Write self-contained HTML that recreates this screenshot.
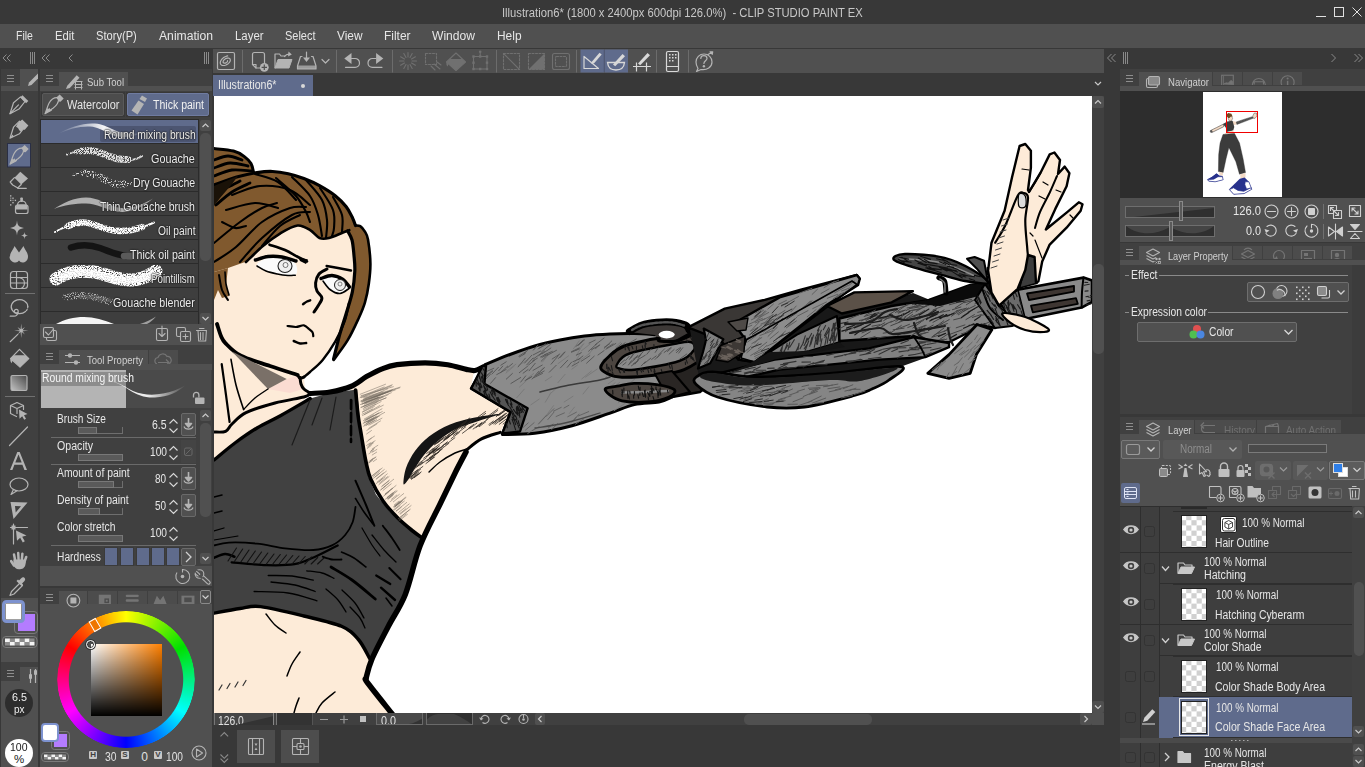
<!DOCTYPE html>
<html lang="en"><head><meta charset="utf-8"><title>CLIP STUDIO PAINT EX</title>
<style>
html,body{margin:0;padding:0;background:#383838;overflow:hidden}
body{width:1365px;height:767px;position:relative;font-family:"Liberation Sans",sans-serif;}
div,span,svg{position:absolute;box-sizing:border-box}
span{white-space:nowrap;line-height:1;}
svg{overflow:visible}
</style></head>
<body>
<div id="app" style="left:0;top:0;width:1365px;height:767px;overflow:hidden">
<div class="titlebar" style="left:0px;top:0px;width:1365px;height:24px;background:#383838;"><span style="left:502.0px;top:6.8px;font-size:12px;color:#c8c8c8;transform:scaleX(0.936);transform-origin:0 0;white-space:pre;">Illustration6* (1800 x 2400px 600dpi 126.0%)  - CLIP STUDIO PAINT EX</span>
<svg style="left:1300px;top:0px;" width="65" height="24" viewBox="0 0 65 24"><path d="M16 16.500h10" stroke="#e0e0e0" stroke-width="1" fill="none"/><rect x="34.500" y="7.500" width="9" height="9" stroke="#e0e0e0" fill="none"/><path d="M52.500 7.500l9 9M61.500 7.500l-9 9" stroke="#e0e0e0" stroke-width="1" fill="none"/></svg>
</div>
<div class="menubar" style="left:0px;top:24px;width:1365px;height:24px;background:#505050;"><span style="left:15.6px;top:5.8px;font-size:12px;color:#e6e6e6;transform:scaleX(0.874);transform-origin:0 0;">File</span>
<span style="left:55.4px;top:5.8px;font-size:12px;color:#e6e6e6;transform:scaleX(0.938);transform-origin:0 0;">Edit</span>
<span style="left:96.2px;top:5.8px;font-size:12px;color:#e6e6e6;transform:scaleX(0.927);transform-origin:0 0;">Story(P)</span>
<span style="left:159.0px;top:5.8px;font-size:12px;color:#e6e6e6;transform:scaleX(1.014);transform-origin:0 0;">Animation</span>
<span style="left:235.0px;top:5.8px;font-size:12px;color:#e6e6e6;transform:scaleX(0.950);transform-origin:0 0;">Layer</span>
<span style="left:285.0px;top:5.8px;font-size:12px;color:#e6e6e6;transform:scaleX(0.915);transform-origin:0 0;">Select</span>
<span style="left:337.0px;top:5.8px;font-size:12px;color:#e6e6e6;transform:scaleX(0.989);transform-origin:0 0;">View</span>
<span style="left:384.0px;top:5.8px;font-size:12px;color:#e6e6e6;transform:scaleX(0.994);transform-origin:0 0;">Filter</span>
<span style="left:432.0px;top:5.8px;font-size:12px;color:#e6e6e6;transform:scaleX(1.008);transform-origin:0 0;">Window</span>
<span style="left:497.0px;top:5.8px;font-size:12px;color:#e6e6e6;transform:scaleX(0.993);transform-origin:0 0;">Help</span>
</div>
<svg style="left:0px;top:48px;" width="213" height="21" viewBox="0 0 213 21"><path d="M6.500 6.500l-3.500 3.500l3.500 3.500M10.500 6.500l-3.500 3.500l3.500 3.500M30.500 4v12M32.500 4v12M34.500 4v12" stroke="#8a8a8a" stroke-width="1" fill="none"/><path d="M45.500 6.500l-3.500 3.500l3.500 3.500M49.500 6.500l-3.500 3.500l3.500 3.500M72.500 6.500l-3.500 3.500l3.500 3.500M204.500 4v12M206.500 4v12M208.500 4v12" stroke="#8a8a8a" stroke-width="1" fill="none"/></svg>
<div class="toolpalette" style="left:1px;top:69px;width:37px;height:529px;background:#404040;"></div>
<div style="left:1px;top:69px;width:37px;height:22px;background:#505050;"></div>
<div style="left:1px;top:69px;width:19px;height:17px;background:#404040;"><svg style="left:6px;top:6px;" width="8" height="8" viewBox="0 0 8 8"><path d="M0 .5h7M0 3.500h7M0 6.500h7" stroke="#8e8e8e" stroke-width="1" fill="none"/></svg>
</div>
<svg style="left:20px;top:69px;overflow:hidden" width="18" height="18" viewBox="0 0 18 18"><path d="M8 17l1-3.500l9.500-9.500l2.500 2.500l-9.500 9.500z" fill="#b4b4b4"/></svg>
<svg style="left:0;top:0" width="40" height="600" viewBox="0 0 40 600"><g transform="translate(0,0)"><path d="M10 113.7l3.5-11l7-5.8l4.5 4.6l-5.6 7.2z" stroke="#b4b4b4" stroke-width="1.2" fill="none" stroke-linejoin="round" stroke-linecap="round"/><path d="M10 113.7l8.5-8.8" stroke="#b4b4b4" stroke-width="1.2" fill="none" stroke-linejoin="round" stroke-linecap="round" stroke-width="1.6"/><path d="M20.3 97.2l2.2-2l5.8 5.8l-2.2 2.2z" fill="#b4b4b4"/><path d="M10 113.7l2-2.6l1 1.4z" fill="#b4b4b4"/></g><g transform="translate(0,24.5)"><path d="M10 113.7l3.5-11l6-6l5.5 5.4l-5.6 7.2z" stroke="#b4b4b4" stroke-width="1.2" fill="none" stroke-linejoin="round" stroke-linecap="round"/><path d="M18 98.5l4.2-3.6l6.2 6.2l-3.6 4.2l-2.6-.4l-.6 2.4l-2.2-1.2l-1.4-2.6l-2-1.2z" fill="#b4b4b4"/><path d="M10 113.7l2.4-3.6l1.4 2z" fill="#b4b4b4"/></g><rect x="7.5" y="143.500" width="23" height="23.500" fill="#5f6b8c" stroke="#2a2f45"/><g transform="translate(1,50.5)"><path d="M9 113.700c1.500-3 2.200-7 4-10.500c1.800-3.300 5-5.500 8-5.500c1.200 0 1.600 .600 1.600 1.600c0 3-2.400 6.600-5.600 9c-2.800 2-5.500 4.200-8 5.400z" stroke="#b4b4b4" stroke-width="1.2" fill="none" stroke-linejoin="round" stroke-linecap="round"/><path d="M9 113.700c.8-1.800 1.400-3.600 2-5.500l1.400 .9l.9-1.300l1.100 1.700l1.200-.6l.5 1.300c-2.300 1.700-4.800 2.600-7.100 3.500z" fill="#b4b4b4"/><path d="M20.300 97.600l3.400-3.200l4 4l-3.200 3.400l-1.600-.4z" fill="#b4b4b4"/></g><path d="M14.400 177.700l5.900-5.900l7.700 6.800l-6.800 5.900z" fill="#b4b4b4"/><path d="M14.400 177.700l-4.200 4.300l2.500 3l5.100 2.900l3.400-3.400" stroke="#b4b4b4" stroke-width="1.2" fill="none" stroke-linejoin="round" stroke-linecap="round"/><path d="M17.800 188.300h8.500" stroke="#b4b4b4" stroke-width="1.2" fill="none" stroke-linejoin="round" stroke-linecap="round"/><g><rect x="15.500" y="205" width="12.500" height="8.500" rx="2" stroke="#b4b4b4" stroke-width="1.2" fill="none" stroke-linejoin="round" stroke-linecap="round"/><path d="M16 209.500v-3a2 2 0 0 1 2-2h7.500a2 2 0 0 1 2 2v3z" fill="#b4b4b4"/><path d="M17.500 204.500c.500-2.500 2-3.500 4.300-3.500c2.300 0 3.800 1 4.300 3.500" stroke="#b4b4b4" stroke-width="1.2" fill="none" stroke-linejoin="round" stroke-linecap="round"/><rect x="20.300" y="197.500" width="2.600" height="4.500" rx=".800" fill="#b4b4b4"/><g fill="#b4b4b4"><rect x="10" y="195.200" width="1.400" height="1.400"/><rect x="12.300" y="197.500" width="1.400" height="1.400"/><rect x="10" y="199.700" width="1.400" height="1.400"/><rect x="14.700" y="199.700" width="1.400" height="1.400"/><rect x="12.300" y="202" width="1.400" height="1.400"/><rect x="10" y="204.200" width="1.400" height="1.400"/><rect x="10" y="197.500" width="1.400" height="1.400" opacity=".6"/><rect x="12.300" y="199.700" width="1.400" height="1.400" opacity=".6"/></g></g><path d="M17 220.500c.6 5 1.500 6.500 7 7.500c-5.500 1-6.400 2.500-7 7.500c-.6-5-1.500-6.500-7-7.500c5.500-1 6.400-2.500 7-7.500z" fill="#b4b4b4"/><path d="M24.500 232c.3 2.400 .8 3.200 3.500 3.600c-2.700 .4-3.200 1.200-3.500 3.600c-.3-2.400-.8-3.200-3.500-3.600c2.700-.4 3.200-1.200 3.500-3.600z" fill="#b4b4b4"/><path d="M10 256.500c0-4 3-6 4.500-10.500l4.500 6.500l4.500-6.500c1.500 4.500 4.500 6.500 4.500 10.500c0 4-3 6-5.500 6c-1.500 0-2.600-.8-3.500-2c-.9 1.200-2 2-3.500 2c-2.500 0-6-2-6-6z" fill="#b4b4b4"/><rect x="10.500" y="271.500" width="17" height="17" rx="3" stroke="#b4b4b4" stroke-width="1.2" fill="none" stroke-linejoin="round" stroke-linecap="round"/><path d="M10.500 277.500h17M10.500 283h17M16.500 271.500v17M16.500 277.500c6 0 8 2 8 5.500c0 3-2 5.500-4 5.500" stroke="#b4b4b4" stroke-width="1.2" fill="none" stroke-linejoin="round" stroke-linecap="round"/><path d="M5 293.500h30" stroke="#707070" stroke-width="1"/><path d="M25.500 311.500a8.300 7 0 1 1 2.300 -5" stroke="#b4b4b4" stroke-width="1.2" fill="none" stroke-linejoin="round" stroke-linecap="round"/><path d="M27.800 306.500a8.300 7 0 0 1 -2.300 5" stroke="#b4b4b4" stroke-width="1.2" fill="none" stroke-linejoin="round" stroke-linecap="round" stroke-dasharray="1.500 1.500"/><circle cx="16.300" cy="311.300" r="1.900" stroke="#b4b4b4" stroke-width="1.2" fill="none" stroke-linejoin="round" stroke-linecap="round"/><path d="M18 312.300c-.500 2.500 -2 3.900 -4 3.900h-3.800" stroke="#b4b4b4" stroke-width="1.2" fill="none" stroke-linejoin="round" stroke-linecap="round"/><path d="M21.20 323.50L21.77 329.31L24.88 327.02L22.59 330.13L28.40 330.70L22.59 331.27L24.88 334.38L21.77 332.09L21.20 337.90L20.63 332.09L17.52 334.38L19.81 331.27L14.00 330.70L19.81 330.13L17.52 327.02L20.63 329.31z" fill="#b4b4b4"/><path d="M10.200 341.700l7.600-7.300" stroke="#b4b4b4" stroke-width="1.2" fill="none" stroke-linejoin="round" stroke-linecap="round" stroke-width="1.500"/><path d="M10.500 358.600l9-9.300l9.300 9.300l-8.800 8.500z" stroke="#b4b4b4" stroke-width="1.2" fill="none" stroke-linejoin="round" stroke-linecap="round"/><path d="M13.700 355.300h11.800l3.300 3.300l-8.800 8.500l-9.500-8.500z" fill="#b4b4b4"/><path d="M10.500 358.600c-.500 2 0 3.500 1.300 4.600c.300-1.600 .800-3 1.900-4z" fill="#b4b4b4"/><defs><linearGradient id="gt" x1="1" y1="0" x2="0" y2="1"><stop offset="0" stop-color="#484848"/><stop offset="1" stop-color="#c4c4c4"/></linearGradient></defs><rect x="11" y="375.500" width="16" height="15" rx="1.500" fill="url(#gt)" stroke="#b4b4b4" stroke-width="1.200"/><path d="M5 396.500h30" stroke="#707070" stroke-width="1"/><path d="M10.500 405.500l6.500-3l6.500 3v4M10.500 405.500v8l6 3M10.500 405.500l6.500 3l6.500-3M17 408.500v5" stroke="#b4b4b4" stroke-width="1.2" fill="none" stroke-linejoin="round" stroke-linecap="round"/><path d="M19 409.500l8.500 4.500l-3.500 1.200l2 3.600l-1.800 1l-2-3.600l-2.700 2.500z" fill="#b4b4b4"/><path d="M9.500 445.500l18-18.500" stroke="#b4b4b4" stroke-width="1.2" fill="none" stroke-linejoin="round" stroke-linecap="round" stroke-width="1.400"/><path d="M10 470l7.300-18h2.400l7.300 18h-2.600l-2-5.200h-8l-2 5.200zM15.300 462.600h6.400l-3.200-8.200z" fill="#b4b4b4"/><ellipse cx="19" cy="484.500" rx="9" ry="6.500" stroke="#b4b4b4" stroke-width="1.2" fill="none" stroke-linejoin="round" stroke-linecap="round" stroke-width="1.400"/><path d="M13.500 489.500l-2.500 5l6-3.700" stroke="#b4b4b4" stroke-width="1.2" fill="none" stroke-linejoin="round" stroke-linecap="round" stroke-width="1.400" fill="#404040"/><path d="M10.500 502l17 .5l-14 16.500zM15 506l6 .3l-5.300 6.200z" fill="#b4b4b4" fill-rule="evenodd"/><path d="M10.500 527.500h17M13.500 524v20" stroke="#b4b4b4" stroke-width="1.2" fill="none" stroke-linejoin="round" stroke-linecap="round" stroke-width="1.500"/><path d="M16 530.500l10.500 5l-4.300 1.200l2.600 4.600l-2 1.100l-2.600-4.600l-3.200 3z" fill="#b4b4b4"/><rect x="11.500" y="525.500" width="4" height="4" fill="#b4b4b4"/><path d="M15.300 561l-1.300-6.500M18.600 560l-.400-7M21.800 560l.600-6.300M24.400 562l1.800-5" stroke="#b4b4b4" fill="none" stroke-linecap="round" stroke-width="2.500"/><path d="M14 565.500l-2.800-4.300" stroke="#b4b4b4" fill="none" stroke-linecap="round" stroke-width="2.600"/><path d="M13.400 559.500h12l.300 3c0 4-2.300 6.700-5.700 6.700h-1.200c-2.800 0-4.300-1.600-5.400-4.200z" fill="#b4b4b4"/><path d="M10 595.500l1.500-4l8.500-8.500l2.500 2.500l-8.500 8.500z" stroke="#b4b4b4" stroke-width="1.2" fill="none" stroke-linejoin="round" stroke-linecap="round"/><path d="M19 580.500l2.500-2.500c2-2 5 1 3 3l-2.500 2.500l1 1l-1.500 1.500l-5-5l1.500-1.500z" fill="#b4b4b4"/></svg>
<div style="left:1px;top:598px;width:37px;height:64px;background:#505050;"></div>
<div style="left:14px;top:610.5px;width:23.5px;height:23px;border:1px solid #7a7a7a;border-radius:4px;"></div>
<div style="left:17.5px;top:613.5px;width:17px;height:17px;background:#b47cff;"></div>
<div style="left:1.5px;top:599.5px;width:23.5px;height:23.5px;background:#ffffff;border:3px solid #7d92cf;border-radius:4.500px;box-shadow:inset 0 0 0 .600px #444;"></div>
<svg style="left:2px;top:635.5px;" width="35.5" height="12" viewBox="0 0 35.5 12"><rect x="0.5" y="0.5" width="34.5" height="11" rx="3.5" fill="none" stroke="#7a7a7a"/><rect x="3.00" y="2.50" width="4.92" height="3.50" fill="#f4f4f4"/><rect x="3.00" y="6.00" width="4.92" height="3.50" fill="#8c8c8c"/><rect x="7.92" y="2.50" width="4.92" height="3.50" fill="#8c8c8c"/><rect x="7.92" y="6.00" width="4.92" height="3.50" fill="#f4f4f4"/><rect x="12.83" y="2.50" width="4.92" height="3.50" fill="#f4f4f4"/><rect x="12.83" y="6.00" width="4.92" height="3.50" fill="#8c8c8c"/><rect x="17.75" y="2.50" width="4.92" height="3.50" fill="#8c8c8c"/><rect x="17.75" y="6.00" width="4.92" height="3.50" fill="#f4f4f4"/><rect x="22.67" y="2.50" width="4.92" height="3.50" fill="#f4f4f4"/><rect x="22.67" y="6.00" width="4.92" height="3.50" fill="#8c8c8c"/><rect x="27.58" y="2.50" width="4.92" height="3.50" fill="#8c8c8c"/><rect x="27.58" y="6.00" width="4.92" height="3.50" fill="#f4f4f4"/></svg>
<div style="left:1px;top:662px;width:37px;height:105px;background:#505050;"></div>
<div style="left:1px;top:662px;width:37px;height:5px;background:#404040;"></div>
<div style="left:1px;top:662px;width:19px;height:19px;background:#404040;"><svg style="left:6px;top:8px;" width="8" height="8" viewBox="0 0 8 8"><path d="M0 .5h7M0 3.500h7M0 6.500h7" stroke="#8e8e8e" stroke-width="1" fill="none"/></svg>
</div>
<svg style="left:20px;top:666px;overflow:hidden" width="18" height="20" viewBox="0 0 18 20"><path d="M10.500 3v14M15.500 3v14" stroke="#b4b4b4" stroke-width="1.200"/><rect x="9" y="8" width="3" height="5" rx="1" fill="#b4b4b4"/><rect x="14" y="4" width="3" height="5" rx="1" fill="#b4b4b4"/></svg>
<div style="left:4.8px;top:688.8px;width:28.4px;height:28.4px;background:#2d2d2d;border-radius:50%;"></div>
<span style="left:11.5px;top:691.7px;font-size:11.5px;color:#f0f0f0;transform:scaleX(0.938);transform-origin:0 0;">6.5</span>
<span style="left:13.8px;top:704.0px;font-size:11.5px;color:#f0f0f0;transform:scaleX(0.865);transform-origin:0 0;">px</span>
<div style="left:4.8px;top:738.8px;width:28.4px;height:28.4px;background:#ffffff;border-radius:50%;"></div>
<span style="left:10.2px;top:741.7px;font-size:11.5px;color:#202020;transform:scaleX(0.912);transform-origin:0 0;">100</span>
<span style="left:13.9px;top:754.3px;font-size:11.5px;color:#202020;">%</span>
<div class="subtool" style="left:40px;top:69px;width:172px;height:278px;background:#404040;"></div>
<div style="left:40px;top:69px;width:172px;height:22px;background:#404040;"></div>
<div style="left:40px;top:69px;width:19px;height:17px;background:#404040;"><svg style="left:6px;top:6px;" width="8" height="8" viewBox="0 0 8 8"><path d="M0 .5h7M0 3.500h7M0 6.500h7" stroke="#8e8e8e" stroke-width="1" fill="none"/></svg>
</div>
<div style="left:59px;top:72px;width:69px;height:19px;background:#505050;"></div>
<div style="left:40px;top:86px;width:172px;height:5px;background:#505050;"></div>
<svg style="left:64px;top:72px;overflow:hidden" width="22" height="19" viewBox="0 0 22 19"><path d="M2 17l1.200-3.200l9.500-10.500l2.800 2.500l-9.700 10.300z" fill="#b4b4b4"/><path d="M10.500 9.500h8M10.500 12.500h8M10.500 15.500h8M11.500 9.500v8M17.500 9.500v8" stroke="#b4b4b4" stroke-width="1" fill="none"/></svg>
<span style="left:87.0px;top:77.3px;font-size:11.5px;color:#d0d0d0;transform:scaleX(0.831);transform-origin:0 0;">Sub Tool</span>
<div style="left:41px;top:92px;width:84px;height:25px;background:#383838;"></div>
<div style="left:126px;top:92px;width:84px;height:25px;background:#383838;"></div>
<div style="left:42px;top:93px;width:82px;height:23px;background:#4c4c4c;border:1px solid #5a5a5a;border-radius:2px;"></div>
<div style="left:127px;top:93px;width:82px;height:23px;background:#5f6b8c;border:1px solid #6f7ba0;border-radius:2px;"></div>
<svg style="left:36px;top:-0.5px;" width="40" height="120" viewBox="0 0 40 120"><path d="M9 113.700c1.500-3 2.200-7 4-10.500c1.800-3.300 5-5.500 8-5.500c1.200 0 1.600 .600 1.600 1.600c0 3-2.400 6.600-5.600 9c-2.800 2-5.500 4.200-8 5.400z" stroke="#b4b4b4" stroke-width="1.2" fill="none" stroke-linejoin="round" stroke-linecap="round"/><path d="M9 113.700c.8-1.800 1.400-3.600 2-5.500l1.400 .9l.9-1.300l1.100 1.700l1.200-.6l.5 1.300c-2.300 1.700-4.800 2.600-7.100 3.500z" fill="#b4b4b4"/><path d="M20.300 97.600l3.400-3.200l4 4l-3.200 3.400l-1.600-.4z" fill="#b4b4b4"/></svg>
<span style="left:66.8px;top:99.3px;font-size:12px;color:#e4e4e4;transform:scaleX(0.910);transform-origin:0 0;">Watercolor</span>
<svg style="left:127px;top:93px;" width="30" height="23" viewBox="0 0 30 23"><path d="M4.500 17.500l7-10l5.500 3.500l-6.500 10.500z" fill="#b4b4b4"/><path d="M12.500 6l2.500-3.500l5 3l-2 3.500z" fill="#b4b4b4"/></svg>
<span style="left:153.0px;top:99.3px;font-size:12px;color:#f0f0f0;transform:scaleX(0.879);transform-origin:0 0;">Thick paint</span>
<div style="left:40px;top:119px;width:159px;height:205px;background:#2b2b2b;"></div>
<div style="left:41px;top:120px;width:157px;height:23px;background:#5f6b8c;"></div>
<div style="left:41px;top:144px;width:157px;height:23px;background:#3e3e3e;"></div>
<div style="left:41px;top:168px;width:157px;height:23px;background:#3e3e3e;"></div>
<div style="left:41px;top:192px;width:157px;height:23px;background:#3e3e3e;"></div>
<div style="left:41px;top:216px;width:157px;height:23px;background:#3e3e3e;"></div>
<div style="left:41px;top:240px;width:157px;height:23px;background:#3e3e3e;"></div>
<div style="left:41px;top:264px;width:157px;height:23px;background:#3e3e3e;"></div>
<div style="left:41px;top:288px;width:157px;height:23px;background:#3e3e3e;"></div>
<div style="left:41px;top:312px;width:157px;height:11.5px;background:#3e3e3e;"></div>
<div style="left:100px;top:126px;width:96px;height:16px;background:rgba(70,78,104,.75);border-radius:2px;"></div>
<svg style="left:0;top:0;overflow:hidden" width="215" height="323.5" viewBox="0 0 215 323.5"><defs><filter id="grain" x="-0.1" y="-0.6" width="1.2" height="2.2"><feTurbulence type="fractalNoise" baseFrequency="0.95" numOctaves="2" seed="4"/><feColorMatrix values="0 0 0 0 1  0 0 0 0 1  0 0 0 0 1  0 0 0 6 -2.2"/><feComposite in2="SourceGraphic" operator="in"/></filter><filter id="grain2" x="-0.1" y="-0.6" width="1.2" height="2.2"><feTurbulence type="fractalNoise" baseFrequency="0.9" numOctaves="2" seed="9"/><feColorMatrix values="0 0 0 0 1  0 0 0 0 1  0 0 0 0 1  0 0 0 7 -3.6"/><feComposite in2="SourceGraphic" operator="in"/></filter><filter id="grain3" x="-0.1" y="-0.6" width="1.2" height="2.2"><feTurbulence type="fractalNoise" baseFrequency="0.8" numOctaves="2" seed="2"/><feColorMatrix values="0 0 0 0 1  0 0 0 0 1  0 0 0 0 1  0 0 0 5 -1.6"/><feComposite in2="SourceGraphic" operator="in"/></filter><filter id="soft"><feGaussianBlur stdDeviation="0.7"/></filter><filter id="soft2"><feGaussianBlur stdDeviation="1.6"/></filter><linearGradient id="rm" x1="0" x2="1"><stop offset="0" stop-color="#fff" stop-opacity="0"/><stop offset=".55" stop-color="#fff" stop-opacity=".95"/><stop offset=".8" stop-color="#fff" stop-opacity=".5"/><stop offset="1" stop-color="#fff" stop-opacity="0"/></linearGradient></defs><path d="M58 134c10-5 22-8 32-7.500c8 .500 13 4 20 7.500c8 4 20 4 32 -1c-12 2-22 0-30-4c-7-3.500-12-5.500-20-5.500c-11 0-24 4.500-34 10.500z" fill="url(#rm)" filter="url(#soft)"/><g filter="url(#grain)" opacity=".85"><path d="M67 154.500C78 150 88 149 98 152S118 160 128 160S138 158 142 156" stroke="#fff" stroke-width="2" fill="none" stroke-linecap="round" /><path d="M82 151C90 149.500 98 151.500 106 155S120 160 128 159.500" stroke="#fff" stroke-width="7" fill="none" stroke-linecap="round" /><path d="M76 152C84 150 92 150 100 153" stroke="#fff" stroke-width="4.5" fill="none" stroke-linecap="round" /></g><g filter="url(#grain2)" opacity=".8"><path d="M73 175C80 172 88 171.500 96 174S112 183 120 184.500S128 184 131 183" stroke="#fff" stroke-width="2.5" fill="none" stroke-linecap="round" /><path d="M84 173C92 173 100 177 108 181S118 184.500 124 184" stroke="#fff" stroke-width="7" fill="none" stroke-linecap="round" /></g><path d="M54 209c9-6 20-11.500 32-11.500c12 0 20 7 32 10c10 2.500 22-1.500 35-9c-12 10-24 15-36 13c-12-2-20-8-31-8c-11 0-22 1.500-32 5.500z" fill="#b8b8b8" opacity=".92"/><g filter="url(#grain3)"><path d="M55 232C64 227 74 222.500 84 222.500S108 232 121 231S146 226.500 154 222.500" stroke="#fff" stroke-width="2" fill="none" stroke-linecap="round" /><path d="M68 226C76 222.500 84 221.500 92 224S110 231.500 122 231S136 229 142 227" stroke="#fff" stroke-width="6.5" fill="none" stroke-linecap="round" /></g><path d="M72 225C80 222.500 88 222.500 96 226S112 231 124 230" stroke="#fff" stroke-width="3" fill="none" stroke-linecap="round" opacity=".55"/><path d="M71 247.500C80 244.500 90 244.500 100 248S116 255 126 256" stroke="#141414" stroke-width="6.5" fill="none" stroke-linecap="round" stroke-linecap="butt"/><path d="M124 256L131 256.200" stroke="#5a5a5a" stroke-width="6.5" fill="none" stroke-linecap="round" stroke-linecap="butt"/><g filter="url(#grain3)"><path d="M56 279C66 272 80 270 94 272S118 281 132 280S150 274 156 271" stroke="#fff" stroke-width="13" fill="none" stroke-linecap="round" /><path d="M54 281C60 277 66 275 72 275" stroke="#fff" stroke-width="6" fill="none" stroke-linecap="round" /></g><path d="M62 277C72 272 84 271 96 274S120 282 134 280S148 276 152 274" stroke="#fff" stroke-width="7" fill="none" stroke-linecap="round" opacity=".8"/><g filter="url(#grain2)" opacity=".6"><path d="M66 297C78 294.500 88 295 98 298S106 300.500 110 301.500" stroke="#aaa" stroke-width="7" fill="none" stroke-linecap="round" /></g><path d="M80 296C90 295.500 100 298 109 301" stroke="#8a8a8a" stroke-width="5" fill="none" stroke-linecap="round" opacity=".35" filter="url(#soft)"/><path d="M56 324c8-4.500 18-7 28-7c10 0 20 3 30 7z" fill="#fff" opacity=".95"/><path d="M140 324c6-2 11-4.500 16-7.500c-3 3.500-6 6-9 7.500z" fill="#aaa" opacity=".9"/></svg>
<span style="left:103.5px;top:129.1px;font-size:12px;color:#ececec;transform:scaleX(0.859);transform-origin:0 0;text-shadow:0 0 2px #222,0 0 2px #222,0 0 1px #222;">Round mixing brush</span>
<span style="left:151.4px;top:153.1px;font-size:12px;color:#ececec;transform:scaleX(0.899);transform-origin:0 0;text-shadow:0 0 2px #222,0 0 2px #222,0 0 1px #222;">Gouache</span>
<span style="left:133.0px;top:177.1px;font-size:12px;color:#ececec;transform:scaleX(0.880);transform-origin:0 0;text-shadow:0 0 2px #222,0 0 2px #222,0 0 1px #222;">Dry Gouache</span>
<span style="left:100.3px;top:201.1px;font-size:12px;color:#ececec;transform:scaleX(0.873);transform-origin:0 0;text-shadow:0 0 2px #222,0 0 2px #222,0 0 1px #222;">Thin Gouache brush</span>
<span style="left:157.7px;top:225.1px;font-size:12px;color:#ececec;transform:scaleX(0.852);transform-origin:0 0;text-shadow:0 0 2px #222,0 0 2px #222,0 0 1px #222;">Oil paint</span>
<span style="left:130.3px;top:249.1px;font-size:12px;color:#ececec;transform:scaleX(0.885);transform-origin:0 0;text-shadow:0 0 2px #222,0 0 2px #222,0 0 1px #222;">Thick oil paint</span>
<span style="left:151.4px;top:273.1px;font-size:12px;color:#ececec;transform:scaleX(0.811);transform-origin:0 0;text-shadow:0 0 2px #222,0 0 2px #222,0 0 1px #222;">Pointillism</span>
<span style="left:113.4px;top:297.1px;font-size:12px;color:#ececec;transform:scaleX(0.889);transform-origin:0 0;text-shadow:0 0 2px #222,0 0 2px #222,0 0 1px #222;">Gouache blender</span>
<div style="left:110px;top:318px;width:88px;height:5.5px;overflow:hidden;"><span style="left:13.0px;top:6.8px;font-size:12px;color:#ececec;transform:scaleX(0.870);transform-origin:0 0;text-shadow:0 0 2px #222,0 0 2px #222,0 0 1px #222;">Paint and apply</span>
</div>
<div style="left:200px;top:120px;width:11px;height:11px;background:#505050;border-radius:2px;"><svg style="left:0px;top:0px;" width="11" height="11" viewBox="0 0 11 11"><path d="M2.5 7l3-3l3 3" stroke="#c8c8c8" stroke-width="1.2" fill="none"/></svg>
</div>
<div style="left:200px;top:133px;width:11px;height:128px;background:#505050;border-radius:5px;"></div>
<div style="left:200px;top:312.5px;width:11px;height:11px;background:#505050;border-radius:2px;"><svg style="left:0px;top:0px;" width="11" height="11" viewBox="0 0 11 11"><path d="M2.5 4l3 3l3-3" stroke="#c8c8c8" stroke-width="1.2" fill="none"/></svg>
</div>
<div style="left:40px;top:324px;width:172px;height:21px;background:#505050;"></div>
<svg style="left:40px;top:324px;" width="172" height="21" viewBox="0 0 172 21"><rect x="6.500" y="6.500" width="10" height="10" rx="1.500" stroke="#b4b4b4" stroke-width="1.1" fill="none" stroke-linejoin="round" stroke-linecap="round"/><rect x="3.500" y="3.500" width="10" height="10" rx="1.500" fill="#505050" stroke="#b4b4b4" stroke-width="1.1"  stroke-linejoin="round" stroke-linecap="round"/><path d="M5.500 8l3 3l5-6" stroke="#b4b4b4" stroke-width="1.1" fill="none" stroke-linejoin="round" stroke-linecap="round"/><rect x="116.500" y="4.500" width="11" height="12" rx="1.500" stroke="#b4b4b4" stroke-width="1.1" fill="none" stroke-linejoin="round" stroke-linecap="round"/><path d="M122 2v10M119 9.500l3 3l3-3" stroke="#b4b4b4" stroke-width="1.1" fill="none" stroke-linejoin="round" stroke-linecap="round"/><rect x="136.500" y="3.500" width="9" height="9" rx="1.500" stroke="#b4b4b4" stroke-width="1.1" fill="none" stroke-linejoin="round" stroke-linecap="round"/><rect x="140.500" y="7.500" width="10" height="10" rx="1.500" fill="#505050" stroke="#b4b4b4" stroke-width="1.1"  stroke-linejoin="round" stroke-linecap="round"/><path d="M145.500 10v5M143 12.500h5" stroke="#b4b4b4" stroke-width="1.1" fill="none" stroke-linejoin="round" stroke-linecap="round"/><path d="M156.500 6.500h10M158 6.500l.700 10.500h7l.700-10.500M159.500 4.500h4.500M160.500 8.500v7M163 8.500v7" stroke="#b4b4b4" stroke-width="1.1" fill="none" stroke-linejoin="round" stroke-linecap="round"/></svg>
<div class="toolproperty" style="left:40px;top:347px;width:172px;height:239px;background:#404040;"></div>
<div style="left:40px;top:347px;width:172px;height:23px;background:#404040;"></div>
<div style="left:40px;top:347px;width:19px;height:17px;background:#404040;"><svg style="left:6px;top:6px;" width="8" height="8" viewBox="0 0 8 8"><path d="M0 .5h7M0 3.500h7M0 6.500h7" stroke="#8e8e8e" stroke-width="1" fill="none"/></svg>
</div>
<div style="left:59px;top:350px;width:89px;height:20px;background:#505050;"></div>
<div style="left:149px;top:350px;width:29px;height:14px;background:#4c4c4c;overflow:hidden;"><svg style="left:0px;top:0px;" width="29" height="14" viewBox="0 0 29 14"><path d="M8 14c-3-1-3-6 1-6.500c1-4 7-5 9-1c4-.500 6 5 2 7.500" stroke="#747474" stroke-width="1.200" fill="none"/><path d="M9 12.500h11M17 9.500l3 3l-3 3" stroke="#747474" stroke-width="1.200" fill="none"/></svg>
</div>
<div style="left:40px;top:364px;width:172px;height:6px;background:#505050;"></div>
<svg style="left:64px;top:352px;" width="20" height="14" viewBox="0 0 20 14"><path d="M1 3.500h15M1 10.500h15" stroke="#b4b4b4" stroke-width="1.200"/><circle cx="6" cy="3.500" r="2.200" fill="#b4b4b4"/><circle cx="12" cy="10.500" r="2.200" fill="#b4b4b4"/></svg>
<span style="left:87.0px;top:355.3px;font-size:11.5px;color:#d0d0d0;transform:scaleX(0.827);transform-origin:0 0;">Tool Property</span>
<div style="left:41px;top:370px;width:170px;height:38px;background:#4a4a4a;"></div>
<div style="left:41px;top:370px;width:85px;height:38px;background:#b4b4b4;"></div>
<div style="left:41px;top:372px;width:85px;height:14px;background:#8c8c8c;"></div>
<svg style="left:41px;top:370px;" width="170" height="38" viewBox="0 0 170 38"><defs><linearGradient id="pv" x1="0" x2="1"><stop offset="0" stop-color="#fff" stop-opacity="0"/><stop offset=".15" stop-color="#fff" stop-opacity=".9"/><stop offset=".5" stop-color="#fff" stop-opacity=".9"/><stop offset="1" stop-color="#fff" stop-opacity="0"/></linearGradient></defs><path d="M68 11c11 1 16 6.500 24 10c10 4 20 4.500 30 2.500c8-1.500 15-4 23-8.500c-8 7-18 12-31 12.500c-10 .500-18-2.500-25-7c-6-4-11-7.500-21-9.500z" fill="url(#pv)"/></svg>
<span style="left:42.0px;top:372.3px;font-size:12px;color:#f4f4f4;transform:scaleX(0.862);transform-origin:0 0;">Round mixing brush</span>
<svg style="left:192px;top:391px;" width="14" height="14" viewBox="0 0 14 14"><rect x="3" y="6.500" width="9.500" height="6.500" rx="1" fill="#b4b4b4"/><path d="M1.500 6.500v-2.500a2.700 2.700 0 0 1 5.400 0v2.500" stroke="#b4b4b4" stroke-width="1.300" fill="none"/></svg>
<span style="left:57.3px;top:412.6px;font-size:12px;color:#e6e6e6;transform:scaleX(0.844);transform-origin:0 0;">Brush Size</span>
<div style="left:78px;top:426.5px;width:45px;height:7.5px;border-bottom:1px solid #6e6e6e;border-right:1px solid #6e6e6e;"></div>
<div style="left:78px;top:426.5px;width:19px;height:7.5px;background:#5a5a5a;border:1px solid #787878;"></div>
<span style="left:151.9px;top:419.4px;font-size:12.5px;color:#e6e6e6;transform:scaleX(0.840);transform-origin:0 0;">6.5</span>
<svg style="left:167.5px;top:415.5px;" width="11" height="20" viewBox="0 0 11 20"><path d="M1.500 7.500l4-4l4 4M1.500 12.500l4 4l4-4" stroke="#d8d8d8" stroke-width="1.100" fill="none"/></svg>
<div style="left:181px;top:412.5px;width:15px;height:23px;background:#505050;border:1px solid #6a6a6a;border-radius:2px;"><svg style="left:-1px;top:-1px;" width="15" height="23" viewBox="0 0 15 23"><path d="M7.500 5v8.500M4.500 10.500l3 3.500l3-3.500z" stroke="#b4b4b4" stroke-width="1.600" fill="#b4b4b4" stroke-linejoin="round"/><path d="M3 13.500c1 3.500 8 3.500 9 0" stroke="#b4b4b4" stroke-width="1.100" fill="none"/></svg>
</div>
<span style="left:57.3px;top:439.6px;font-size:12px;color:#e6e6e6;transform:scaleX(0.885);transform-origin:0 0;">Opacity</span>
<div style="left:78px;top:453.5px;width:45px;height:7.5px;"></div>
<div style="left:78px;top:453.5px;width:45px;height:7.5px;background:#5a5a5a;border:1px solid #787878;"></div>
<span style="left:149.5px;top:446.4px;font-size:12.5px;color:#e6e6e6;transform:scaleX(0.815);transform-origin:0 0;">100</span>
<svg style="left:167.5px;top:442.5px;" width="11" height="20" viewBox="0 0 11 20"><path d="M1.500 7.500l4-4l4 4M1.500 12.500l4 4l4-4" stroke="#d8d8d8" stroke-width="1.100" fill="none"/></svg>
<div style="left:181px;top:439.5px;width:15px;height:23px;background:#444;"><svg style="left:0px;top:0px;" width="15" height="23" viewBox="0 0 15 23"><rect x="3.500" y="8" width="7.500" height="7.500" rx="1.500" stroke="#666" fill="none"/><path d="M4.500 14.500l5.500-5.500" stroke="#666"/></svg>
</div>
<span style="left:57.3px;top:466.6px;font-size:12px;color:#e6e6e6;transform:scaleX(0.864);transform-origin:0 0;">Amount of paint</span>
<div style="left:78px;top:480.5px;width:45px;height:7.5px;border-bottom:1px solid #6e6e6e;border-right:1px solid #6e6e6e;"></div>
<div style="left:78px;top:480.5px;width:36px;height:7.5px;background:#5a5a5a;border:1px solid #787878;"></div>
<span style="left:155.4px;top:473.4px;font-size:12.5px;color:#e6e6e6;transform:scaleX(0.798);transform-origin:0 0;">80</span>
<svg style="left:167.5px;top:469.5px;" width="11" height="20" viewBox="0 0 11 20"><path d="M1.500 7.500l4-4l4 4M1.500 12.500l4 4l4-4" stroke="#d8d8d8" stroke-width="1.100" fill="none"/></svg>
<div style="left:181px;top:466.5px;width:15px;height:23px;background:#505050;border:1px solid #6a6a6a;border-radius:2px;"><svg style="left:-1px;top:-1px;" width="15" height="23" viewBox="0 0 15 23"><path d="M7.500 5v8.500M4.500 10.500l3 3.500l3-3.500z" stroke="#b4b4b4" stroke-width="1.600" fill="#b4b4b4" stroke-linejoin="round"/><path d="M3 13.500c1 3.500 8 3.500 9 0" stroke="#b4b4b4" stroke-width="1.100" fill="none"/></svg>
</div>
<span style="left:57.3px;top:493.6px;font-size:12px;color:#e6e6e6;transform:scaleX(0.867);transform-origin:0 0;">Density of paint</span>
<div style="left:78px;top:507.5px;width:45px;height:7.5px;border-bottom:1px solid #6e6e6e;border-right:1px solid #6e6e6e;"></div>
<div style="left:78px;top:507.5px;width:22px;height:7.5px;background:#5a5a5a;border:1px solid #787878;"></div>
<span style="left:155.4px;top:500.4px;font-size:12.5px;color:#e6e6e6;transform:scaleX(0.798);transform-origin:0 0;">50</span>
<svg style="left:167.5px;top:496.5px;" width="11" height="20" viewBox="0 0 11 20"><path d="M1.500 7.500l4-4l4 4M1.500 12.500l4 4l4-4" stroke="#d8d8d8" stroke-width="1.100" fill="none"/></svg>
<div style="left:181px;top:493.5px;width:15px;height:23px;background:#505050;border:1px solid #6a6a6a;border-radius:2px;"><svg style="left:-1px;top:-1px;" width="15" height="23" viewBox="0 0 15 23"><path d="M7.500 5v8.500M4.500 10.500l3 3.500l3-3.500z" stroke="#b4b4b4" stroke-width="1.600" fill="#b4b4b4" stroke-linejoin="round"/><path d="M3 13.500c1 3.500 8 3.500 9 0" stroke="#b4b4b4" stroke-width="1.100" fill="none"/></svg>
</div>
<span style="left:57.3px;top:520.6px;font-size:12px;color:#e6e6e6;transform:scaleX(0.859);transform-origin:0 0;">Color stretch</span>
<div style="left:78px;top:534.5px;width:45px;height:7.5px;"></div>
<div style="left:78px;top:534.5px;width:45px;height:7.5px;background:#5a5a5a;border:1px solid #787878;"></div>
<span style="left:149.5px;top:527.4px;font-size:12.5px;color:#e6e6e6;transform:scaleX(0.815);transform-origin:0 0;">100</span>
<svg style="left:167.5px;top:523.5px;" width="11" height="20" viewBox="0 0 11 20"><path d="M1.500 7.500l4-4l4 4M1.500 12.500l4 4l4-4" stroke="#d8d8d8" stroke-width="1.100" fill="none"/></svg>
<div style="left:51px;top:437px;width:145px;height:1px;background:#6a6a6a;"></div>
<div style="left:51px;top:464px;width:145px;height:1px;background:#6a6a6a;"></div>
<div style="left:51px;top:545px;width:145px;height:1px;background:#6a6a6a;"></div>
<span style="left:57.3px;top:551.3px;font-size:12px;color:#e6e6e6;transform:scaleX(0.853);transform-origin:0 0;">Hardness</span>
<div style="left:104.0px;top:547px;width:14.2px;height:19px;background:#5f6b8c;border:1px solid #3a3a3a;"></div>
<div style="left:120.0px;top:547px;width:14.2px;height:19px;background:#5f6b8c;border:1px solid #3a3a3a;"></div>
<div style="left:135.9px;top:547px;width:14.2px;height:19px;background:#5f6b8c;border:1px solid #3a3a3a;"></div>
<div style="left:151.3px;top:547px;width:14.2px;height:19px;background:#5f6b8c;border:1px solid #3a3a3a;"></div>
<div style="left:166.3px;top:547px;width:14.2px;height:19px;background:#5f6b8c;border:1px solid #3a3a3a;"></div>
<div style="left:181px;top:547.5px;width:15px;height:18px;background:#505050;border:1px solid #6a6a6a;border-radius:2px;"><svg style="left:-1px;top:-1px;" width="15" height="18" viewBox="0 0 15 18"><path d="M5 4l5 5l-5 5" stroke="#d0d0d0" stroke-width="1.300" fill="none"/></svg>
</div>
<div style="left:200px;top:410px;width:11px;height:11px;background:#505050;border-radius:2px;"><svg style="left:0px;top:0px;" width="11" height="11" viewBox="0 0 11 11"><path d="M2.5 7l3-3l3 3" stroke="#c8c8c8" stroke-width="1.2" fill="none"/></svg>
</div>
<div style="left:200px;top:423px;width:11px;height:94px;background:#505050;border-radius:5px;"></div>
<div style="left:200px;top:553px;width:11px;height:11px;background:#505050;border-radius:2px;"><svg style="left:0px;top:0px;" width="11" height="11" viewBox="0 0 11 11"><path d="M2.5 4l3 3l3-3" stroke="#c8c8c8" stroke-width="1.2" fill="none"/></svg>
</div>
<div style="left:40px;top:566px;width:172px;height:20px;background:#505050;"></div>
<svg style="left:172px;top:567px;" width="40" height="19" viewBox="0 0 40 19"><path d="M5 5.500a7 7 0 1 0 5.500 -3v3" stroke="#b4b4b4" stroke-width="1.100" fill="none"/><circle cx="10.500" cy="9.500" r="1.800" fill="#b4b4b4"/><path d="M29.500 9l7 6.500" stroke="#b4b4b4" stroke-width="4.400" stroke-linecap="round"/><path d="M29.500 9l7 6.500" stroke="#505050" stroke-width="2.200" stroke-linecap="round"/><circle cx="27.500" cy="7" r="4.300" fill="#505050" stroke="#b4b4b4" stroke-width="1.100"/><path d="M27.500 7l-5-4.500" stroke="#505050" stroke-width="3.600"/><path d="M24.300 4.200l3.400 2.900l-.300 .800M22.900 6.800l3.500 2.600" stroke="#b4b4b4" stroke-width="1.100" fill="none"/><path d="M28.500 9.500l2 2" stroke="#505050" stroke-width="2.200"/></svg>
<div class="colorwheel" style="left:40px;top:588px;width:172px;height:179px;background:#505050;"></div>
<div style="left:40px;top:588px;width:172px;height:17px;background:#404040;"></div>
<div style="left:40px;top:588px;width:19px;height:17px;background:#404040;"><svg style="left:6px;top:6px;" width="8" height="8" viewBox="0 0 8 8"><path d="M0 .5h7M0 3.500h7M0 6.500h7" stroke="#8e8e8e" stroke-width="1" fill="none"/></svg>
</div>
<div style="left:59px;top:591px;width:28px;height:14px;background:#505050;"></div>
<div style="left:88px;top:591px;width:29px;height:13px;background:#4c4c4c;"></div>
<div style="left:118px;top:591px;width:29px;height:13px;background:#4c4c4c;"></div>
<div style="left:148px;top:591px;width:29px;height:13px;background:#4c4c4c;"></div>
<div style="left:178px;top:591px;width:23px;height:13px;background:#4c4c4c;"></div>
<div style="left:40px;top:604px;width:172px;height:2px;background:#505050;"></div>
<svg style="left:59px;top:591px;overflow:hidden;height:13px" width="153" height="14" viewBox="0 0 153 14"><g fill="#747474"><rect x="37" y="4" width="13" height="10"/><rect x="43" y="8" width="5" height="5" fill="#4c4c4c"/><rect x="44.500" y="9.500" width="2" height="2"/><rect x="66" y="4" width="14" height="2.500" rx="1"/><rect x="66" y="9" width="14" height="2.500" rx="1"/><path d="M96 14l3.500-9l3.500 5l3.500-5l3.500 9z"/><rect x="126" y="5" width="14" height="9"/><rect x="129" y="7" width="8" height="5" fill="#4c4c4c"/></g></svg>
<svg style="left:59px;top:591px;" width="30" height="20" viewBox="0 0 30 20"><circle cx="14.400" cy="9.600" r="6.400" stroke="#b4b4b4" stroke-width="1.100" fill="none"/><rect x="11.400" y="6.600" width="6" height="6" rx=".500" fill="#b4b4b4"/></svg>
<div style="left:200px;top:590px;width:11px;height:14px;background:#505050;border:1px solid #8a8a8a;border-radius:2px;"><svg style="left:-1px;top:-1px;" width="11" height="14" viewBox="0 0 11 14"><path d="M2.500 5.500l3 3l3-3" stroke="#d0d0d0" stroke-width="1.200" fill="none"/></svg>
</div>
<div style="left:57.2px;top:610.7px;width:137.6px;height:137.6px;border-radius:50%;background:conic-gradient(from -60deg,#ff0000,#ffff00 60deg,#00e000 120deg,#00ffff 180deg,#0000ff 240deg,#ff00ff 300deg,#ff0000 360deg);-webkit-mask:radial-gradient(circle,transparent 56.7px,#000 57.7px,#000 68.3px,transparent 69.3px);mask:radial-gradient(circle,transparent 56.7px,#000 57.7px,#000 68.3px,transparent 69.3px);"></div>
<div style="left:90.5px;top:644px;width:71.5px;height:71.5px;background:linear-gradient(to bottom,rgba(0,0,0,0),#000),linear-gradient(to right,#fff,#ff8000);"></div>
<div style="left:90.5px;top:618.9403995615803px;width:8px;height:12px;background:#ee7600;border:1.500px solid #fff;transform:rotate(-30deg);"></div>
<div style="left:85.5px;top:639.5px;width:9px;height:9px;border:1.200px solid #fff;border-radius:50%;box-shadow:0 0 0 1px #333, inset 0 0 0 1px #333;"></div>
<div style="left:50.5px;top:731px;width:19px;height:18.5px;border:1px solid #7a7a7a;border-radius:3.500px;"></div>
<div style="left:53.5px;top:733.5px;width:13.5px;height:13.5px;background:#b47cff;"></div>
<div style="left:40.5px;top:722.8px;width:18.3px;height:18.8px;background:#fff;border:2.500px solid #7d92cf;border-radius:4px;"></div>
<svg style="left:41px;top:752px;" width="28" height="10" viewBox="0 0 28 10"><rect x="0.5" y="0.5" width="27" height="9" rx="3.5" fill="none" stroke="#7a7a7a"/><rect x="3.00" y="2.50" width="3.67" height="2.50" fill="#f4f4f4"/><rect x="3.00" y="5.00" width="3.67" height="2.50" fill="#8c8c8c"/><rect x="6.67" y="2.50" width="3.67" height="2.50" fill="#8c8c8c"/><rect x="6.67" y="5.00" width="3.67" height="2.50" fill="#f4f4f4"/><rect x="10.33" y="2.50" width="3.67" height="2.50" fill="#f4f4f4"/><rect x="10.33" y="5.00" width="3.67" height="2.50" fill="#8c8c8c"/><rect x="14.00" y="2.50" width="3.67" height="2.50" fill="#8c8c8c"/><rect x="14.00" y="5.00" width="3.67" height="2.50" fill="#f4f4f4"/><rect x="17.67" y="2.50" width="3.67" height="2.50" fill="#f4f4f4"/><rect x="17.67" y="5.00" width="3.67" height="2.50" fill="#8c8c8c"/><rect x="21.33" y="2.50" width="3.67" height="2.50" fill="#8c8c8c"/><rect x="21.33" y="5.00" width="3.67" height="2.50" fill="#f4f4f4"/></svg>
<div style="left:89px;top:750.5px;width:8px;height:8px;background:#c8c8c8;border-radius:1px;"><span style="left:1.2px;top:0.5px;font-size:8px;color:#404040;font-weight:bold;">H</span>
</div>
<span style="left:105.0px;top:750.8px;font-size:12px;color:#e0e0e0;transform:scaleX(0.862);transform-origin:0 0;">30</span>
<div style="left:121px;top:750.5px;width:8px;height:8px;background:#c8c8c8;border-radius:1px;"><span style="left:1.2px;top:0.5px;font-size:8px;color:#404040;font-weight:bold;">S</span>
</div>
<span style="left:141.3px;top:750.8px;font-size:12px;color:#e0e0e0;">0</span>
<div style="left:154px;top:750.5px;width:8px;height:8px;background:#c8c8c8;border-radius:1px;"><span style="left:1.2px;top:0.5px;font-size:8px;color:#404040;font-weight:bold;">V</span>
</div>
<span style="left:165.5px;top:750.8px;font-size:12px;color:#e0e0e0;transform:scaleX(0.849);transform-origin:0 0;">100</span>
<svg style="left:190px;top:744px;" width="18" height="18" viewBox="0 0 18 18"><circle cx="9" cy="9" r="7" stroke="#b4b4b4" stroke-width="1.100" fill="none"/><path d="M6.500 5l6 4l-6 4z" stroke="#b4b4b4" stroke-width="1.100" fill="none" stroke-linejoin="round"/></svg>
<div class="commandbar" style="left:213px;top:49px;width:891px;height:24px;background:#505050;"></div>
<svg style="left:0;top:0" width="1110" height="75" viewBox="0 0 1110 75"><rect x="217.500" y="52.500" width="17" height="17" rx="1.500" stroke="#b4b4b4" stroke-width="1.200" fill="none" stroke-linejoin="round" stroke-linecap="round"/><path d="M227.5 60.7L227.5 60.8L227.5 61.1L227.5 61.3L227.4 61.6L227.2 61.9L226.9 62.2L226.6 62.5L226.3 62.7L225.8 62.9L225.4 63.1L225.0 63.2L224.5 63.2L224.1 63.1L223.8 63.0L223.5 62.8L223.2 62.5L223.1 62.2L223.1 61.7L223.2 61.3L223.4 60.8L223.7 60.3L224.1 59.8L224.6 59.4L225.2 58.9L225.8 58.6L226.5 58.3L227.2 58.1L227.9 58.1L228.5 58.1L229.1 58.3L229.6 58.5L230.0 58.9L230.2 59.4L230.3 60.0L230.3 60.6L230.1 61.3L229.7 62.0L229.2 62.7L228.5 63.4L227.8 64.0L226.9 64.5L226.0 65.0L225.0 65.3L224.1 65.5L223.1 65.5L222.3 65.3L221.6 65.1L221.0 64.6L220.6 64.0L220.3 63.3L220.3 62.5L220.4 61.7L220.8 60.8L221.4 59.8L222.1 58.9L223.0 58.1L224.1 57.3L225.2 56.7L226.5 56.2L227.7 55.9" stroke="#b4b4b4" stroke-width="1.200" fill="none" stroke-linejoin="round" stroke-linecap="round"/><path d="M242.5 50v22.500" stroke="#6c6c6c" stroke-width="1"/><path d="M336.5 50v22.500" stroke="#6c6c6c" stroke-width="1"/><path d="M392.5 50v22.500" stroke="#6c6c6c" stroke-width="1"/><path d="M496.5 50v22.500" stroke="#6c6c6c" stroke-width="1"/><path d="M576.5 50v22.500" stroke="#6c6c6c" stroke-width="1"/><path d="M656.5 50v22.500" stroke="#6c6c6c" stroke-width="1"/><path d="M688.5 50v22.500" stroke="#6c6c6c" stroke-width="1"/><path d="M256 68h6M252.500 64.500v-10a2 2 0 0 1 2-2h8a2 2 0 0 1 2 2v8.500" stroke="#b4b4b4" stroke-width="1.200" fill="none" stroke-linejoin="round" stroke-linecap="round" stroke-width="1.300"/><path d="M252.500 64.500h3.500v3.500z" stroke="#b4b4b4" stroke-width="1.200" fill="none" stroke-linejoin="round" stroke-linecap="round" stroke-width="1.100"/><circle cx="264.300" cy="67.300" r="4.400" fill="#b4b4b4"/><path d="M264.300 64.600v5.400M261.600 67.300h5.400" stroke="#505050" stroke-width="1.200"/><path d="M275 68v-14h4.500l1.500 2h4" stroke="#b4b4b4" stroke-width="1.200" fill="none" stroke-linejoin="round" stroke-linecap="round" stroke-width="1.400"/><path d="M275 68l3-8.500h14l-3 8.500z" fill="#b4b4b4" stroke="#b4b4b4" stroke-linejoin="round"/><path d="M284.500 56.500c1.500-2 3.500-2.500 5.500-2.200" stroke="#b4b4b4" stroke-width="1.200" fill="none" stroke-linejoin="round" stroke-linecap="round" stroke-width="1.400"/><path d="M288.500 51.500l3.300 2.900l-3.700 2z" fill="#b4b4b4"/><path d="M306.500 52v6.500" stroke="#b4b4b4" stroke-width="1.200" fill="none" stroke-linejoin="round" stroke-linecap="round" stroke-width="1.600"/><path d="M303 57.500h7l-3.500 4.500z" fill="#b4b4b4"/><path d="M302 56.500h-1.500l-3 9.500v3h18.500v-3l-3-9.500h-1.500" stroke="#b4b4b4" stroke-width="1.200" fill="none" stroke-linejoin="round" stroke-linecap="round"/><path d="M297.500 65.500h18.500v3.500h-18.500z" fill="#b4b4b4" opacity=".75"/><path d="M322 59.500l3.500 3.500l3.500-3.500" stroke="#b4b4b4" stroke-width="1.200" fill="none" stroke-linejoin="round" stroke-linecap="round"/><path d="M351.500 58.500h3.600a4.400 4.400 0 0 1 0 8.800h-9.600" stroke="#b4b4b4" stroke-width="1.200" fill="none" stroke-linejoin="round" stroke-linecap="round" stroke-width="1.500"/><path d="M344.300 58.500l7.200-5.500v11z" fill="#b4b4b4"/><path d="M376 58.500h-3.600a4.400 4.400 0 0 0 0 8.800h9.600" stroke="#b4b4b4" stroke-width="1.200" fill="none" stroke-linejoin="round" stroke-linecap="round" stroke-width="1.500"/><path d="M383.300 58.500l-7.200-5.500v11z" fill="#b4b4b4"/><path d="M412.0 61.0L416.5 61.0M411.5 63.0L415.4 65.2M410.0 64.5L412.2 68.4M408.0 65.0L408.0 69.5M406.0 64.5L403.8 68.4M404.5 63.0L400.6 65.2M404.0 61.0L399.5 61.0M404.5 59.0L400.6 56.8M406.0 57.5L403.8 53.6M408.0 57.0L408.0 52.5M410.0 57.5L412.2 53.6M411.5 59.0L415.4 56.8" stroke="#707070" stroke-width="1.100" fill="none" stroke-linejoin="round" stroke-linecap="round" stroke-width="1.400"/><rect x="425.500" y="53.500" width="11" height="11" stroke="#707070" stroke-width="1.100" fill="none" stroke-linejoin="round" stroke-linecap="round" stroke-dasharray="2 1.500"/><path d="M434 64l6 5M437 62l4 3M431 66l4 4" stroke="#707070" stroke-width="1.100" fill="none" stroke-linejoin="round" stroke-linecap="round"/><path d="M446.500 62l9.500-9l9.500 9l-9.500 8.500z" stroke="#707070" stroke-width="1.100" fill="none" stroke-linejoin="round" stroke-linecap="round"/><path d="M449.700 59h12.600l3.200 3l-9.500 8.500l-9.500-8.500z" fill="#707070"/><path d="M446.500 62c-.500 2 0 3.500 1.300 4.600c.300-1.600 .800-3 1.900-4z" fill="#707070"/><rect x="473.500" y="56.500" width="13.500" height="12.500" stroke="#707070" stroke-width="1.100" fill="none" stroke-linejoin="round" stroke-linecap="round"/><path d="M480.200 52v4.500" stroke="#707070" stroke-width="1.100" fill="none" stroke-linejoin="round" stroke-linecap="round"/><g fill="#707070"><rect x="472.300" y="55.300" width="2.400" height="2.400"/><rect x="485.800" y="55.300" width="2.400" height="2.400"/><rect x="472.300" y="67.800" width="2.400" height="2.400"/><rect x="485.800" y="67.800" width="2.400" height="2.400"/><rect x="479" y="55.300" width="2.400" height="2.400"/><rect x="479" y="67.800" width="2.400" height="2.400"/><rect x="472.300" y="61.500" width="2.400" height="2.400"/><rect x="485.800" y="61.500" width="2.400" height="2.400"/><circle cx="480.200" cy="51.800" r="1.300"/></g><rect x="503.500" y="53.500" width="16" height="16" stroke="#707070" stroke-width="1.100" fill="none" stroke-linejoin="round" stroke-linecap="round" stroke-dasharray="2 1.500"/><path d="M503.500 53.500l16 16" stroke="#707070" stroke-width="1.100" fill="none" stroke-linejoin="round" stroke-linecap="round"/><rect x="528.500" y="53.500" width="16" height="16" stroke="#707070" stroke-width="1.100" fill="none" stroke-linejoin="round" stroke-linecap="round" stroke-dasharray="2 1.500"/><path d="M544.500 53.500v16h-16z" fill="#707070"/><rect x="552.500" y="53.500" width="17" height="16" rx="2" stroke="#707070" stroke-width="1.100" fill="none" stroke-linejoin="round" stroke-linecap="round"/><rect x="555.500" y="56.500" width="11" height="10" rx="1" stroke="#707070" stroke-width="1.100" fill="none" stroke-linejoin="round" stroke-linecap="round" stroke-dasharray="2 1.500"/><rect x="580.500" y="49.500" width="23.500" height="23" fill="#5f6b8c"/><rect x="604.500" y="49.500" width="23.500" height="23" fill="#5f6b8c"/><path d="M604.200 50v22" stroke="#4d5877" stroke-width="1"/><path d="M584 56.500v12h14.500z" stroke="#d8d8d8" stroke-width="1.200" fill="none" stroke-linejoin="round"/><path d="M592 61.500l7.500-8.800l2.200 1.900l-7.600 8.600l-2.600 .800z" fill="#d8d8d8"/><path d="M607.500 62.500h17c-.500 5-4 7.500-8.500 7.500c-4.500 0-8-2.500-8.500-7.500z" stroke="#d8d8d8" stroke-width="1.300" fill="none"/><path d="M613 64.500l9.500-10.500l2.500 2.200l-9.800 10z" fill="#d8d8d8"/><path d="M633 66.500h18M636.500 62.500v9M646.500 62.500v9" stroke="#d8d8d8" stroke-width="1.200" fill="none"/><path d="M638 63.500l9.500-10.500l2.500 2.200l-9.800 10z" fill="#d8d8d8"/><rect x="666.500" y="51.500" width="12" height="20" rx="1.500" stroke="#d8d8d8" stroke-width="1.200" fill="none"/><path d="M667 66.500h11" stroke="#d8d8d8"/><g fill="#d8d8d8"><rect x="669" y="54" width="1.500" height="1.500"/><rect x="672" y="54" width="1.500" height="1.500"/><rect x="675" y="54" width="1.500" height="1.500"/><rect x="669" y="57" width="1.500" height="1.500"/><rect x="672" y="57" width="1.500" height="1.500"/><rect x="675" y="57" width="1.500" height="1.500"/><rect x="669" y="60" width="1.500" height="1.500"/><rect x="672" y="60" width="1.500" height="1.500"/></g><path d="M698 68.500l-1.500 3l4.500-2c6 1 11-2.500 11-7.500c0-4.500-3.500-8-8-8c-4.500 0-8 3.500-8 8c0 2.500 .800 4.500 2 6.500z" stroke="#b4b4b4" stroke-width="1.200" fill="none" stroke-linejoin="round" stroke-linecap="round"/><path d="M700.800 58.500c0-3.800 6.200-3.800 6.200 0c0 2.200-3.100 2.500-3.100 5" stroke="#b4b4b4" stroke-width="1.200" fill="none" stroke-linejoin="round" stroke-linecap="round" stroke-width="1.800"/><circle cx="703.900" cy="66.300" r="1.200" fill="#b4b4b4"/><path d="M708 54.500l4.500-2.500M710 51.800l2.700 0l-.500 2.600" stroke="#b4b4b4" stroke-width="1.200" fill="none" stroke-linejoin="round" stroke-linecap="round"/></svg>
<div class="doctab" style="left:213px;top:75px;width:100px;height:21px;background:#5f6b8c;"><span style="left:4.5px;top:3.8px;font-size:12px;color:#e8e8e8;transform:scaleX(0.886);transform-origin:0 0;">Illustration6*</span>
<div style="left:87.5px;top:8.5px;width:4px;height:4px;background:#d8d8d8;border-radius:50%;"></div>
</div>
<svg style="left:1092px;top:78px;" width="12" height="10" viewBox="0 0 12 10"><path d="M3 4l3 3l3-3" stroke="#c8c8c8" stroke-width="1.200" fill="none"/></svg>
<div class="canvas" style="left:214px;top:96px;width:878px;height:617px;background:#ffffff;"></div>
<div style="left:1092px;top:96px;width:12px;height:617px;background:#404040;"></div>
<div style="left:1092px;top:96px;width:12px;height:12px;background:#505050;border-radius:2px;"><svg style="left:0px;top:0px;" width="12" height="12" viewBox="0 0 12 12"><path d="M3 7.500l3-3l3 3" stroke="#c8c8c8" stroke-width="1.200" fill="none"/></svg>
</div>
<div style="left:1092px;top:701px;width:12px;height:12px;background:#505050;border-radius:2px;"><svg style="left:0px;top:0px;" width="12" height="12" viewBox="0 0 12 12"><path d="M3 4.500l3 3l3-3" stroke="#c8c8c8" stroke-width="1.200" fill="none"/></svg>
</div>
<div style="left:1092.5px;top:264px;width:11px;height:90px;background:#505050;border-radius:5px;"></div>
<div style="left:213px;top:713px;width:891px;height:12px;background:#404040;"></div>
<div style="left:744px;top:713.5px;width:128px;height:11px;background:#505050;border-radius:5px;"></div>
<div style="left:1080px;top:713px;width:12px;height:12px;background:#505050;border-radius:2px;"><svg style="left:0px;top:0px;" width="12" height="12" viewBox="0 0 12 12"><path d="M4.500 3l3 3l-3 3" stroke="#c8c8c8" stroke-width="1.200" fill="none"/></svg>
</div>
<div style="left:1092px;top:713px;width:12px;height:12px;background:#505050;"></div>
<div style="left:214px;top:713px;width:60px;height:12px;background:#464646;border-left:1px solid #777;overflow:hidden;"><span style="left:3.0px;top:1.7px;font-size:12.5px;color:#e0e0e0;transform:scaleX(0.825);transform-origin:0 0;">126.0</span>
</div>
<svg style="left:214px;top:713px;" width="60" height="12" viewBox="0 0 60 12"><path d="M22 12l38-9v9z" fill="#333"/><path d="M59.500 0v12" stroke="#888"/></svg>
<div style="left:276px;top:713px;width:37px;height:12px;background:#333;border-left:1px solid #777;border-right:1px solid #555;"></div>
<svg style="left:313px;top:713px;" width="60" height="12" viewBox="0 0 60 12"><path d="M7 6.500h8M27 6.500h8M31 2.500v8" stroke="#999" stroke-width="1.200"/><rect x="47" y="3" width="6" height="6" fill="#c0c0c0"/></svg>
<div style="left:376px;top:713px;width:47px;height:12px;background:#4a4a4a;border:1px solid #6a6a6a;border-top:0;overflow:hidden;"><svg style="left:-1px;top:0px;" width="47" height="12" viewBox="0 0 47 12"><path d="M26 12c8-.500 14-2.500 21-7v7z" fill="#333"/></svg>
<span style="left:3.5px;top:1.7px;font-size:12.5px;color:#e0e0e0;transform:scaleX(0.863);transform-origin:0 0;">0.0</span>
</div>
<div style="left:425.5px;top:713px;width:47px;height:12px;background:#303030;border:1px solid #6a6a6a;border-top:0;overflow:hidden;"><svg style="left:-1px;top:0px;" width="47" height="12" viewBox="0 0 47 12"><path d="M0 12v-5c4-3.500 8-6 12-6h16c8 3 13 7 19 11z" fill="#424242"/></svg>
</div>
<svg style="left:478px;top:713px;" width="70" height="12" viewBox="0 0 70 12"><path d="M3 6.500a4 4 0 1 1 1.500 3" stroke="#b4b4b4" stroke-width="1.100" fill="none"/><path d="M1 4.500l2 3l2.500-2z" fill="#b4b4b4"/><path d="M31 6.500a4 4 0 1 0 -1.500 3" stroke="#b4b4b4" stroke-width="1.100" fill="none"/><path d="M33 4.500l-2 3l-2.500-2z" fill="#b4b4b4"/><circle cx="45.500" cy="6" r="4.500" stroke="#b4b4b4" stroke-width="1.100" fill="none"/><path d="M45.500 1v4" stroke="#b4b4b4" stroke-width="1.100"/><circle cx="45.500" cy="6.500" r="1.300" fill="#b4b4b4"/></svg>
<div style="left:535px;top:713px;width:10px;height:12px;background:#505050;border-radius:2px;"><svg style="left:0px;top:0px;" width="10" height="12" viewBox="0 0 10 12"><path d="M6.500 3l-3 3l3 3" stroke="#c8c8c8" stroke-width="1.200" fill="none"/></svg>
</div>
<svg style="left:213px;top:726px;" width="30" height="41" viewBox="0 0 30 41"><path d="M7.500 10.300l3.800-3.800l3.800 3.800M7.500 28.500l3.800 3.800l3.800-3.800M7.500 32.700l3.800 3.800l3.800-3.800" stroke="#8a8a8a" stroke-width="1.100" fill="none"/></svg>
<div style="left:237px;top:730px;width:38px;height:33px;background:#4d4d4d;"><svg style="left:1px;top:-0.5px;" width="38" height="34" viewBox="0 0 38 34"><rect x="10.500" y="8.500" width="15" height="16" rx="1" stroke="#b4b4b4" stroke-width="1.100" fill="none"/><path d="M14.500 8.500v16M21.500 8.500v16" stroke="#b4b4b4" stroke-width="1.100"/><path d="M16.500 13.500h3l-1.500 2.500zM16.500 20h3l-1.500-2.500z" fill="#b4b4b4"/></svg>
</div>
<div style="left:281px;top:730px;width:38px;height:33px;background:#4d4d4d;"><svg style="left:1px;top:-0.5px;" width="38" height="34" viewBox="0 0 38 34"><rect x="10.500" y="8.500" width="16" height="16" rx="1" stroke="#b4b4b4" stroke-width="1.100" fill="none"/><path d="M18.500 8.500v16M10.500 16.500h16" stroke="#b4b4b4" stroke-width="1.100"/><rect x="15" y="13.500" width="7" height="6" rx="1" fill="#484848" stroke="#b4b4b4" stroke-width="1.100"/><circle cx="18.500" cy="16.500" r="1.300" fill="#b4b4b4"/></svg>
</div>
<svg class="artwork" style="left:214px;top:96px;overflow:hidden" width="878" height="617" viewBox="214 96 878 617"><path d="M214.0 225.0L350.0 225.0L356.0 270.0L348.0 305.0L336.0 342.0L322.0 361.0L304.0 378.0L305.0 390.0L311.0 394.0L214.0 470.0z" fill="#fdebd8" /><path d="M268.0 389.0L287.0 379.0L297.5 375.5L303.0 389.0L290.0 393.0z" fill="#fbdcd2" /><path d="M214.0 612.0L261.0 606.0L304.0 616.0L342.0 626.0L359.0 640.0L370.0 659.0L366.0 680.0L392.0 713.0L214.0 713.0z" fill="#fdebd8" /><path d="M350.0 390.0L368.8 373.0L397.0 364.7L425.0 362.8L447.7 364.7L466.4 369.4L474.0 371.0L470.5 390.0L509.5 412.5L500.5 432.0L481.5 439.0L466.5 450.0L455.0 472.7L440.0 504.0L420.0 545.0L398.0 519.0L378.0 494.0L368.0 475.0L361.0 435.0L356.0 392.0z" fill="#fdebd8" /><path d="M214.0 460.0L257.0 428.0L280.4 415.7L310.2 398.5L330.0 393.0L357.0 389.5L361.3 435.0L368.0 475.6L375.9 494.4L390.0 512.0L412.8 531.0L421.0 537.5L405.3 594.4L388.4 626.3L371.5 660.0L369.6 658.0L358.4 639.5L341.5 626.3L303.9 616.0L260.7 606.6L214.0 613.2z" fill="#414141" /><path d="M214.0 148.5L233.5 151.0L244.4 156.6L251.0 163.6L253.5 172.0L257.0 172.6L272.6 171.5L288.2 173.8L303.9 178.5L319.5 185.6L335.2 195.7L346.2 206.7L352.4 217.6L355.5 225.5L360.2 226.2L364.9 231.7L368.0 239.5L370.4 263.5L368.8 283.8L364.9 302.6L358.7 318.2L347.7 340.2L333.6 360.0L339.9 333.9L346.2 313.5L352.4 291.6L354.8 271.3L354.0 255.6L351.6 239.5L349.3 230.2L343.0 232.5L329.0 238.0L319.5 238.0L310.2 230.2L297.6 225.5L280.4 233.3L263.2 245.8L245.0 262.0L228.0 268.0L214.0 272.0z" fill="#80592e" /><path d="M214.0 272.0L228.0 268.0L226.0 285.0L229.0 296.0L222.0 298.0L218.0 290.0L214.0 300.0z" fill="#80592e" /><path d="M214.0 148.5C217.2 148.9 228.4 149.7 233.5 151.0C238.6 152.3 241.5 154.5 244.4 156.6C247.3 158.7 249.5 161.0 251.0 163.6C252.5 166.2 253.1 170.6 253.5 172.0" fill="none" stroke="#000" stroke-width="3" stroke-linejoin="round" stroke-linecap="round" /><path d="M214.0 185.0C215.8 184.3 221.2 182.3 225.0 181.0C228.8 179.7 231.3 178.4 236.6 177.0C241.9 175.6 251.0 173.5 257.0 172.6C263.0 171.7 267.4 171.3 272.6 171.5C277.8 171.7 283.0 172.6 288.2 173.8C293.4 175.0 298.7 176.5 303.9 178.5C309.1 180.5 314.3 182.7 319.5 185.6C324.7 188.5 330.8 192.2 335.2 195.7C339.6 199.2 343.3 203.0 346.2 206.7C349.1 210.3 350.8 214.5 352.4 217.6C353.9 220.7 355.0 224.2 355.5 225.5" fill="none" stroke="#000" stroke-width="3.2" stroke-linejoin="round" stroke-linecap="round" /><path d="M355.5 225.5C356.3 225.6 358.6 225.2 360.2 226.2C361.8 227.2 363.6 229.5 364.9 231.7C366.2 233.9 367.1 234.2 368.0 239.5C368.9 244.8 370.3 256.1 370.4 263.5C370.5 270.9 369.7 277.3 368.8 283.8C367.9 290.3 366.6 296.9 364.9 302.6C363.2 308.3 361.6 311.9 358.7 318.2C355.8 324.5 351.9 333.2 347.7 340.2C343.5 347.2 336.0 356.7 333.6 360.0" fill="none" stroke="#000" stroke-width="2.6" stroke-linejoin="round" stroke-linecap="round" /><path d="M347.7 231.0C348.4 232.5 350.9 235.9 352.0 240.0C353.1 244.1 353.5 250.4 354.0 255.6C354.5 260.8 355.1 265.3 354.8 271.3C354.5 277.3 353.8 284.6 352.4 291.6C351.0 298.6 348.3 306.4 346.2 313.5C344.1 320.6 342.0 326.3 339.9 333.9C337.8 341.5 334.7 354.8 333.6 359.0" fill="none" stroke="#000" stroke-width="3.2" stroke-linejoin="round" stroke-linecap="round" /><path d="M349.0 303.0C348.3 306.1 346.9 314.9 344.6 321.4C342.3 327.8 338.9 335.3 335.2 341.7C331.5 348.1 326.9 354.9 322.7 360.0C318.5 365.1 313.1 369.2 310.0 372.0C306.9 374.8 305.0 376.2 304.0 377.0" fill="none" stroke="#000" stroke-width="2.4" stroke-linejoin="round" stroke-linecap="round" /><path d="M246.0 262.0C248.9 259.3 257.5 250.6 263.2 245.8C268.9 241.0 274.7 236.7 280.4 233.3C286.1 229.9 292.6 226.0 297.6 225.5C302.6 225.0 306.6 228.1 310.2 230.2C313.8 232.3 316.4 236.7 319.5 238.0C322.6 239.3 325.1 238.9 329.0 238.0C332.9 237.1 339.6 233.8 343.0 232.5C346.4 231.2 348.2 230.6 349.3 230.2" fill="none" stroke="#000" stroke-width="2.6" stroke-linejoin="round" stroke-linecap="round" /><path d="M214.0 160.0C216.3 159.3 223.3 156.0 228.0 156.0C232.7 156.0 239.7 159.3 242.0 160.0" fill="none" stroke="#000" stroke-width="2.8" stroke-linejoin="round" stroke-linecap="round" /><path d="M214.0 168.0C216.7 167.2 224.3 163.3 230.0 163.0C235.7 162.7 245.0 165.5 248.0 166.0" fill="none" stroke="#000" stroke-width="2.8" stroke-linejoin="round" stroke-linecap="round" /><path d="M214.0 176.0C217.0 175.0 225.8 170.8 232.0 170.0C238.2 169.2 247.8 170.8 251.0 171.0" fill="none" stroke="#000" stroke-width="2.8" stroke-linejoin="round" stroke-linecap="round" /><path d="M214.0 193.0C216.3 192.0 223.7 189.0 228.0 187.0C232.3 185.0 238.0 182.0 240.0 181.0" fill="none" stroke="#000" stroke-width="2.8" stroke-linejoin="round" stroke-linecap="round" /><path d="M216.0 205.0C218.7 202.8 226.3 195.7 232.0 192.0C237.7 188.3 247.0 184.5 250.0 183.0" fill="none" stroke="#000" stroke-width="2.8" stroke-linejoin="round" stroke-linecap="round" /><path d="M214.0 186.0L238.0 176.0L232.0 184.0L220.0 198.0L214.0 206.0z" fill="#1a1208" /><path d="M232.0 195.0C236.7 193.5 250.3 186.8 260.0 186.0C269.7 185.2 281.7 186.8 290.0 190.0C298.3 193.2 306.7 202.5 310.0 205.0" fill="none" stroke="#000" stroke-width="2.1" stroke-linejoin="round" stroke-linecap="round" /><path d="M226.0 210.0C230.8 208.8 246.3 203.3 255.0 203.0C263.7 202.7 274.2 207.2 278.0 208.0" fill="none" stroke="#000" stroke-width="2.1" stroke-linejoin="round" stroke-linecap="round" /><path d="M222.0 222.0C224.2 223.0 231.0 227.3 235.0 228.0C239.0 228.7 244.2 226.3 246.0 226.0" fill="none" stroke="#000" stroke-width="2.1" stroke-linejoin="round" stroke-linecap="round" /><path d="M214.0 243.0C218.3 239.5 232.0 227.8 240.0 222.0C248.0 216.2 255.8 211.2 262.0 208.0C268.2 204.8 274.5 203.8 277.0 203.0" fill="none" stroke="#000" stroke-width="2.1" stroke-linejoin="round" stroke-linecap="round" /><path d="M214.0 262.0C217.7 259.5 228.0 253.7 236.0 247.0C244.0 240.3 253.0 228.5 262.0 222.0C271.0 215.5 282.7 210.5 290.0 208.0C297.3 205.5 303.3 207.2 306.0 207.0" fill="none" stroke="#000" stroke-width="2.1" stroke-linejoin="round" stroke-linecap="round" /><path d="M240.0 262.0C243.7 258.0 253.3 245.8 262.0 238.0C270.7 230.2 284.0 219.3 292.0 215.0C300.0 210.7 307.0 212.5 310.0 212.0" fill="none" stroke="#000" stroke-width="2.1" stroke-linejoin="round" stroke-linecap="round" /><path d="M262.0 246.0C265.0 242.7 273.7 231.2 280.0 226.0C286.3 220.8 296.7 216.8 300.0 215.0" fill="none" stroke="#000" stroke-width="2.1" stroke-linejoin="round" stroke-linecap="round" /><path d="M276.0 178.0C279.3 181.0 291.0 190.3 296.0 196.0C301.0 201.7 303.7 207.7 306.0 212.0C308.3 216.3 309.3 220.3 310.0 222.0" fill="none" stroke="#000" stroke-width="2.1" stroke-linejoin="round" stroke-linecap="round" /><path d="M292.0 177.0C295.0 180.2 305.7 189.7 310.0 196.0C314.3 202.3 316.0 208.3 318.0 215.0C320.0 221.7 321.3 232.5 322.0 236.0" fill="none" stroke="#000" stroke-width="2.1" stroke-linejoin="round" stroke-linecap="round" /><path d="M306.0 180.0C308.7 183.3 318.5 193.3 322.0 200.0C325.5 206.7 326.3 213.7 327.0 220.0C327.7 226.3 326.2 235.0 326.0 238.0" fill="none" stroke="#000" stroke-width="2.1" stroke-linejoin="round" stroke-linecap="round" /><path d="M320.0 188.0C322.2 191.7 330.7 203.3 333.0 210.0C335.3 216.7 334.2 223.7 334.0 228.0C333.8 232.3 332.3 234.7 332.0 236.0" fill="none" stroke="#000" stroke-width="2.1" stroke-linejoin="round" stroke-linecap="round" /><path d="M333.0 197.0C334.5 200.0 340.5 209.2 342.0 215.0C343.5 220.8 342.0 229.2 342.0 232.0" fill="none" stroke="#000" stroke-width="2.1" stroke-linejoin="round" stroke-linecap="round" /><path d="M255.0 174.0C258.8 175.3 271.2 177.7 278.0 182.0C284.8 186.3 293.0 197.0 296.0 200.0" fill="none" stroke="#000" stroke-width="2.1" stroke-linejoin="round" stroke-linecap="round" /><path d="M219.0 275.0C219.5 277.5 220.5 285.8 222.0 290.0C223.5 294.2 227.0 298.3 228.0 300.0" fill="none" stroke="#000" stroke-width="2" stroke-linejoin="round" stroke-linecap="round" /><path d="M225.0 272.0C225.2 274.0 225.3 280.2 226.0 284.0C226.7 287.8 228.5 293.2 229.0 295.0" fill="none" stroke="#000" stroke-width="1.6" stroke-linejoin="round" stroke-linecap="round" /><path d="M269.5 244.7C272.1 245.6 280.2 247.9 285.0 250.0C289.8 252.1 294.3 255.1 298.0 257.0C301.7 258.9 305.5 260.8 307.0 261.5" fill="none" stroke="#000" stroke-width="2.6" stroke-linejoin="round" stroke-linecap="round" /><path d="M298.0 257.0L308.0 259.5L306.0 264.0L300.0 261.0z" fill="#000" /><path d="M257.0 265.0C257.5 267.0 264.6 269.6 268.0 271.0C271.4 272.4 272.8 272.9 277.3 273.6C281.9 274.3 292.4 277.0 295.3 275.2C298.2 273.4 297.6 265.9 295.0 263.0C292.4 260.1 285.0 258.7 280.0 258.0C275.0 257.3 268.8 257.8 265.0 259.0C261.2 260.2 256.5 263.0 257.0 265.0z" fill="#fbfbfb" /><path d="M255.4 260.0C257.5 259.4 263.6 257.0 268.0 256.5C272.4 256.0 277.3 256.2 282.0 257.0C286.7 257.8 293.7 260.3 296.0 261.0" fill="none" stroke="#000" stroke-width="3.4" stroke-linejoin="round" stroke-linecap="round" /><path d="M257.0 266.0C258.5 266.8 262.6 269.7 266.0 271.0C269.4 272.3 273.6 273.2 277.3 274.0C281.0 274.8 285.0 275.3 288.0 275.5C291.0 275.7 294.1 275.2 295.3 275.2" fill="none" stroke="#000" stroke-width="1.6" stroke-linejoin="round" stroke-linecap="round" /><ellipse cx="285" cy="266" rx="7" ry="6.500" fill="#efefef" stroke="#222" stroke-width="1.100"/><circle cx="285.500" cy="265" r="2.500" fill="#f4f4f4" stroke="#555" stroke-width=".800"/><path d="M326.6 266.0C328.5 266.3 333.9 267.2 338.0 268.0C342.1 268.8 348.8 270.1 351.0 270.5" fill="none" stroke="#000" stroke-width="2.4" stroke-linejoin="round" stroke-linecap="round" /><path d="M327.0 269.0C325.7 269.8 320.9 271.7 319.0 274.0C317.1 276.3 315.9 280.2 315.6 283.0C315.3 285.8 315.9 288.5 317.0 291.0C318.1 293.5 321.7 295.5 321.9 298.0C322.1 300.5 319.3 303.7 318.0 306.0C316.7 308.3 314.7 311.0 314.0 312.0" fill="none" stroke="#000" stroke-width="3" stroke-linejoin="round" stroke-linecap="round" /><path d="M303.0 304.2C303.7 303.8 305.8 302.1 307.0 301.5C308.2 300.9 309.7 300.5 310.2 300.3" fill="none" stroke="#000" stroke-width="2.4" stroke-linejoin="round" stroke-linecap="round" /><path d="M322.0 279.0C321.7 281.2 327.0 286.7 330.0 289.0C333.0 291.3 336.8 293.2 340.0 293.0C343.2 292.8 348.8 290.2 349.3 288.0C349.8 285.8 345.9 282.0 343.0 280.0C340.1 278.0 335.5 276.2 332.0 276.0C328.5 275.8 322.3 276.8 322.0 279.0z" fill="#fafafa" /><path d="M321.0 278.5C322.8 278.0 328.3 275.3 332.0 275.5C335.7 275.7 340.1 277.6 343.0 279.5C345.9 281.4 348.4 285.8 349.5 287.0" fill="none" stroke="#000" stroke-width="3.4" stroke-linejoin="round" stroke-linecap="round" /><path d="M323.0 281.0C324.2 282.4 327.2 287.4 330.0 289.5C332.8 291.6 336.8 293.7 340.0 293.5C343.2 293.3 347.5 289.3 349.0 288.5" fill="none" stroke="#000" stroke-width="1.6" stroke-linejoin="round" stroke-linecap="round" /><ellipse cx="340" cy="285" rx="5.500" ry="5.500" fill="#efefef" stroke="#222" stroke-width="1"/><circle cx="340" cy="284" r="2" fill="#f4f4f4" stroke="#555" stroke-width=".700"/><path d="M287.5 326.0C288.9 326.2 293.3 327.1 296.0 327.0C298.7 326.9 301.7 325.0 303.9 325.3C306.1 325.6 307.6 327.8 309.0 329.0C310.4 330.2 311.8 331.1 312.5 332.3C313.2 333.5 313.2 335.6 313.3 336.2" fill="none" stroke="#000" stroke-width="2.2" stroke-linejoin="round" stroke-linecap="round" /><path d="M293.7 341.0C294.8 341.4 297.9 343.2 300.0 343.5C302.1 343.8 305.2 343.1 306.2 343.0" fill="none" stroke="#000" stroke-width="2.4" stroke-linejoin="round" stroke-linecap="round" /><path d="M217.0 324.0C217.7 326.0 219.6 332.8 221.0 336.0C222.4 339.2 222.3 340.0 225.6 343.3C228.9 346.6 233.6 352.0 241.0 355.8C248.4 359.6 260.6 362.8 270.0 366.0C279.4 369.2 293.0 373.5 297.6 375.0" fill="none" stroke="#000" stroke-width="3.8" stroke-linejoin="round" stroke-linecap="round" /><path d="M297.6 375.0C298.0 375.5 298.9 377.7 300.0 378.0C301.1 378.3 303.3 377.2 304.0 377.0" fill="none" stroke="#000" stroke-width="3" stroke-linejoin="round" stroke-linecap="round" /><path d="M300.0 377.4C300.2 378.5 300.4 382.1 301.0 384.0C301.6 385.9 302.4 387.5 303.9 389.0C305.4 390.5 309.1 392.3 310.2 393.0" fill="none" stroke="#000" stroke-width="3" stroke-linejoin="round" stroke-linecap="round" /><path d="M232.0 351.5L286.7 379.0L268.0 389.0z" fill="#7a7068" /><path d="M221.7 364.0C222.4 369.2 224.7 385.3 226.0 395.0C227.3 404.7 229.0 417.5 229.6 422.0" fill="none" stroke="#000" stroke-width="2.2" stroke-linejoin="round" stroke-linecap="round" /><path d="M231.0 359.4C231.8 363.7 233.9 376.6 236.0 385.0C238.1 393.4 242.3 405.4 243.6 409.5" fill="none" stroke="#000" stroke-width="1.6" stroke-linejoin="round" stroke-linecap="round" /><path d="M268.0 389.0C265.8 390.5 259.1 394.6 255.0 398.0C250.9 401.4 245.5 407.6 243.6 409.5" fill="none" stroke="#000" stroke-width="1.4" stroke-linejoin="round" stroke-linecap="round" /><path d="M214.0 432.0C215.9 431.9 222.6 432.7 225.6 431.4C228.6 430.1 228.6 427.1 232.0 424.0C235.4 420.9 238.8 416.1 246.0 412.6C253.2 409.1 265.4 405.6 275.0 403.0C284.6 400.4 298.1 398.5 303.9 397.0C309.7 395.5 309.0 394.5 310.0 394.0" fill="none" stroke="#000" stroke-width="3" stroke-linejoin="round" stroke-linecap="round" /><path d="M214.0 460.0C217.5 457.2 227.8 448.3 235.0 443.0C242.2 437.7 249.4 432.6 257.0 428.0C264.6 423.4 271.5 420.6 280.4 415.7C289.3 410.8 305.2 401.4 310.2 398.5" fill="none" stroke="#000" stroke-width="3.4" stroke-linejoin="round" stroke-linecap="round" /><path d="M310.2 393.5C313.5 393.2 323.2 393.2 330.0 392.0C336.8 390.8 344.7 389.1 350.8 386.5C356.9 383.9 361.3 379.6 366.5 376.6C371.7 373.7 377.0 370.8 382.1 368.8C387.2 366.8 389.8 365.7 397.0 364.7C404.2 363.7 416.7 362.8 425.1 362.8C433.6 362.8 440.8 363.6 447.7 364.7C454.6 365.8 461.8 368.4 466.4 369.4C470.9 370.4 472.2 370.9 475.0 370.5C477.8 370.1 481.7 367.6 483.0 367.0" fill="none" stroke="#000" stroke-width="5.2" stroke-linejoin="round" stroke-linecap="round" /><path d="M355.6 390.0C356.0 394.2 357.1 407.5 358.0 415.0C358.9 422.5 360.0 427.2 361.3 435.0C362.6 442.8 364.4 454.7 366.0 462.0C367.6 469.3 367.9 472.5 370.7 479.0C373.5 485.5 378.5 494.5 383.0 501.0C387.5 507.5 392.8 513.0 397.8 518.0C402.8 523.0 408.9 527.8 412.8 531.0C416.7 534.2 419.6 536.0 421.0 537.0" fill="none" stroke="#000" stroke-width="3.6" stroke-linejoin="round" stroke-linecap="round" /><path d="M466.0 452.0C464.2 455.4 459.5 464.0 455.2 472.7C450.9 481.4 446.0 491.8 440.1 504.0C434.2 516.2 425.8 530.9 420.0 546.0C414.2 561.1 410.6 581.0 405.3 594.4C400.0 607.8 394.0 615.3 388.4 626.3C382.8 637.2 375.2 651.3 371.5 660.1C367.8 668.9 366.8 675.8 365.9 678.9" fill="none" stroke="#000" stroke-width="5.5" stroke-linejoin="round" stroke-linecap="round" /><path d="M365.9 678.9C366.2 679.6 363.3 677.1 367.7 683.0C372.1 688.9 388.1 708.8 392.2 714.0" fill="none" stroke="#000" stroke-width="5.5" stroke-linejoin="round" stroke-linecap="round" /><path d="M214.0 613.2C218.3 612.4 232.2 609.6 240.0 608.5C247.8 607.4 250.0 605.4 260.7 606.6C271.3 607.9 290.4 612.7 303.9 616.0C317.4 619.3 332.4 622.4 341.5 626.3C350.6 630.2 353.7 634.2 358.4 639.5C363.1 644.8 367.7 655.2 369.6 658.3" fill="none" stroke="#000" stroke-width="3.4" stroke-linejoin="round" stroke-linecap="round" /><path d="M214.0 545.4C216.5 544.9 221.6 542.9 228.8 542.6C236.0 542.3 247.6 542.7 257.0 543.6C266.4 544.5 275.6 547.2 285.0 548.3C294.4 549.4 305.5 550.5 313.3 550.0C321.1 549.5 326.7 547.9 332.0 545.4C337.3 542.9 341.8 538.9 345.2 535.0C348.6 531.1 351.0 526.7 352.7 522.0C354.4 517.3 355.0 509.5 355.5 507.0" fill="none" stroke="#000" stroke-width="1.8" stroke-linejoin="round" stroke-linecap="round" /><path d="M214.0 557.7C215.8 557.1 221.6 554.2 225.0 554.0C228.4 553.8 232.8 556.2 234.4 556.7" fill="none" stroke="#000" stroke-width="2.6" stroke-linejoin="round" stroke-linecap="round" /><path d="M231.6 562.3C237.4 562.8 255.8 564.9 266.3 565.2C276.8 565.5 286.4 565.6 294.5 564.2C302.6 562.8 308.0 559.8 315.2 556.7C322.4 553.6 333.9 547.3 337.7 545.4" fill="none" stroke="#000" stroke-width="2.2" stroke-linejoin="round" stroke-linecap="round" /><path d="M228.0 561.0l8.5-13.0" fill="none" stroke="#111" stroke-width="1.1" stroke-linejoin="round" stroke-linecap="round" /><path d="M234.4 561.5l8.3-12.5" fill="none" stroke="#111" stroke-width="1.1" stroke-linejoin="round" stroke-linecap="round" /><path d="M240.8 562.0l8.2-12.0" fill="none" stroke="#111" stroke-width="1.1" stroke-linejoin="round" stroke-linecap="round" /><path d="M247.2 562.5l8.1-11.5" fill="none" stroke="#111" stroke-width="1.1" stroke-linejoin="round" stroke-linecap="round" /><path d="M253.6 563.0l7.9-11.0" fill="none" stroke="#111" stroke-width="1.1" stroke-linejoin="round" stroke-linecap="round" /><path d="M260.0 563.5l7.8-10.5" fill="none" stroke="#111" stroke-width="1.1" stroke-linejoin="round" stroke-linecap="round" /><path d="M266.4 564.0l7.6-10.0" fill="none" stroke="#111" stroke-width="1.1" stroke-linejoin="round" stroke-linecap="round" /><path d="M272.8 564.0l7.5-9.5" fill="none" stroke="#111" stroke-width="1.1" stroke-linejoin="round" stroke-linecap="round" /><path d="M279.2 564.0l7.3-9.0" fill="none" stroke="#111" stroke-width="1.1" stroke-linejoin="round" stroke-linecap="round" /><path d="M285.6 564.0l7.2-8.5" fill="none" stroke="#111" stroke-width="1.1" stroke-linejoin="round" stroke-linecap="round" /><path d="M292.0 564.0l7.0-8.0" fill="none" stroke="#111" stroke-width="1.1" stroke-linejoin="round" stroke-linecap="round" /><path d="M298.4 564.0l6.8-7.5" fill="none" stroke="#111" stroke-width="1.1" stroke-linejoin="round" stroke-linecap="round" /><path d="M304.8 564.0l6.7-7.0" fill="none" stroke="#111" stroke-width="1.1" stroke-linejoin="round" stroke-linecap="round" /><path d="M311.2 564.0l6.5-6.5" fill="none" stroke="#111" stroke-width="1.1" stroke-linejoin="round" stroke-linecap="round" /><path d="M317.6 564.0l6.4-6.0" fill="none" stroke="#111" stroke-width="1.1" stroke-linejoin="round" stroke-linecap="round" /><path d="M331.0 567.0C334.5 569.2 344.6 574.7 352.0 580.0C359.4 585.3 371.4 595.8 375.3 599.0" fill="none" stroke="#000" stroke-width="2.8" stroke-linejoin="round" stroke-linecap="round" /><path d="M381.0 587.7L395.0 600.0" fill="none" stroke="#000" stroke-width="2.4" stroke-linejoin="round" stroke-linecap="round" /><path d="M376.2 575.5L390.3 584.0" fill="none" stroke="#000" stroke-width="2.2" stroke-linejoin="round" stroke-linecap="round" /><path d="M389.3 568.0L400.6 579.2" fill="none" stroke="#000" stroke-width="2" stroke-linejoin="round" stroke-linecap="round" /><path d="M322.7 556.7C324.2 557.2 328.9 559.0 332.0 559.5C335.1 560.0 339.9 559.5 341.5 559.5" fill="none" stroke="#000" stroke-width="1.8" stroke-linejoin="round" stroke-linecap="round" /><path d="M341.5 552.0C343.6 553.0 349.9 555.5 354.0 558.0C358.1 560.5 363.9 565.5 365.9 567.0" fill="none" stroke="#000" stroke-width="1.6" stroke-linejoin="round" stroke-linecap="round" /><path d="M355.5 480.7C357.2 484.8 362.9 497.5 366.0 505.0C369.1 512.5 372.9 522.2 374.3 525.7" fill="none" stroke="#000" stroke-width="2" stroke-linejoin="round" stroke-linecap="round" /><path d="M355.5 498.5C356.9 500.8 361.1 507.8 364.0 512.0C366.9 516.2 371.5 522.0 373.0 524.0" fill="none" stroke="#000" stroke-width="1.6" stroke-linejoin="round" stroke-linecap="round" /><path d="M382.8 525.7C384.3 527.8 389.2 534.0 392.0 538.0C394.8 542.0 398.4 548.0 399.7 550.0" fill="none" stroke="#000" stroke-width="1.8" stroke-linejoin="round" stroke-linecap="round" /><path d="M268.2 575.5C272.2 575.6 284.5 575.2 292.0 576.0C299.5 576.8 309.8 579.5 313.3 580.2" fill="none" stroke="#000" stroke-width="1.3" stroke-linejoin="round" stroke-linecap="round" /><path d="M271.0 582.0C275.0 582.5 287.6 583.4 295.0 585.0C302.4 586.6 311.8 590.4 315.2 591.5" fill="none" stroke="#000" stroke-width="1.3" stroke-linejoin="round" stroke-linecap="round" /><path d="M254.1 591.5C259.8 591.8 277.5 591.5 288.0 593.0C298.5 594.5 312.2 599.5 317.0 600.8" fill="none" stroke="#000" stroke-width="1.3" stroke-linejoin="round" stroke-linecap="round" /><path d="M306.7 570.8C309.2 571.2 317.4 571.8 322.0 573.0C326.6 574.2 332.0 577.4 334.0 578.3" fill="none" stroke="#000" stroke-width="1.3" stroke-linejoin="round" stroke-linecap="round" /><path d="M326.0 589.0C328.0 590.8 334.7 596.2 338.0 600.0C341.3 603.8 344.7 610.0 346.0 612.0" fill="none" stroke="#000" stroke-width="1.3" stroke-linejoin="round" stroke-linecap="round" /><path d="M342.0 590.0C344.2 592.2 351.3 598.3 355.0 603.0C358.7 607.7 362.5 615.5 364.0 618.0" fill="none" stroke="#000" stroke-width="1.3" stroke-linejoin="round" stroke-linecap="round" /><path d="M350.0 607.0C351.7 608.8 357.5 614.5 360.0 618.0C362.5 621.5 364.2 626.3 365.0 628.0" fill="none" stroke="#000" stroke-width="1.3" stroke-linejoin="round" stroke-linecap="round" /><path d="M386.0 598.0L392.0 606.0" fill="none" stroke="#000" stroke-width="1.5" stroke-linejoin="round" stroke-linecap="round" /><path d="M214.0 497.0L222.0 495.0" fill="none" stroke="#000" stroke-width="1.5" stroke-linejoin="round" stroke-linecap="round" /><path d="M214.0 513.0L222.0 511.0" fill="none" stroke="#000" stroke-width="1.5" stroke-linejoin="round" stroke-linecap="round" /><path d="M214.0 531.0L224.0 528.0" fill="none" stroke="#000" stroke-width="1.3" stroke-linejoin="round" stroke-linecap="round" /><path d="M214.0 540.0L238.0 536.0" fill="none" stroke="#000" stroke-width="1.2" stroke-linejoin="round" stroke-linecap="round" /><path d="M372.0 535.0C374.0 537.5 380.0 545.5 384.0 550.0C388.0 554.5 394.0 560.0 396.0 562.0" fill="none" stroke="#000" stroke-width="1.3" stroke-linejoin="round" stroke-linecap="round" /><path d="M362.0 528.0C363.7 530.8 369.0 540.3 372.0 545.0C375.0 549.7 378.7 554.2 380.0 556.0" fill="none" stroke="#000" stroke-width="1.2" stroke-linejoin="round" stroke-linecap="round" /><path d="M310.0 400.0C308.3 404.2 303.0 417.5 300.0 425.0C297.0 432.5 293.3 441.7 292.0 445.0" fill="none" stroke="#1c1c1c" stroke-width="1.2" stroke-linejoin="round" stroke-linecap="round" /><path d="M322.0 398.0L312.0 425.0" fill="none" stroke="#1c1c1c" stroke-width="1.2" stroke-linejoin="round" stroke-linecap="round" /><path d="M336.0 397.0L330.0 430.0" fill="none" stroke="#1c1c1c" stroke-width="1.2" stroke-linejoin="round" stroke-linecap="round" /><path d="M352.0 400.0L351.0 440.0" fill="none" stroke="#1c1c1c" stroke-width="1.2" stroke-linejoin="round" stroke-linecap="round" /><path d="M351 400v42" fill="none" stroke="#000" stroke-width="2.6" stroke-linejoin="round" stroke-linecap="round" stroke-dasharray="9 4"/><path d="M266.0 614.0C267.5 615.8 271.7 621.8 275.0 625.0C278.3 628.2 284.2 631.7 286.0 633.0" fill="none" stroke="#000" stroke-width="1.5" stroke-linejoin="round" stroke-linecap="round" /><path d="M300.0 652.0C298.7 654.0 294.2 660.0 292.0 664.0C289.8 668.0 287.8 674.0 287.0 676.0" fill="none" stroke="#000" stroke-width="1.5" stroke-linejoin="round" stroke-linecap="round" /><path d="M335.0 692.0C332.8 693.8 325.2 699.5 322.0 703.0C318.8 706.5 317.0 711.3 316.0 713.0" fill="none" stroke="#000" stroke-width="1.5" stroke-linejoin="round" stroke-linecap="round" /><path d="M299.0 698.0C298.5 699.3 296.8 703.5 296.0 706.0C295.2 708.5 294.3 711.8 294.0 713.0" fill="none" stroke="#000" stroke-width="1.5" stroke-linejoin="round" stroke-linecap="round" /><path d="M219 690.0l3-5" fill="none" stroke="#333" stroke-width="1.2" stroke-linejoin="round" stroke-linecap="round" /><path d="M227 688.5l3-5" fill="none" stroke="#333" stroke-width="1.2" stroke-linejoin="round" stroke-linecap="round" /><path d="M235 687.0l3-5" fill="none" stroke="#333" stroke-width="1.2" stroke-linejoin="round" stroke-linecap="round" /><path d="M243 685.5l3-5" fill="none" stroke="#333" stroke-width="1.2" stroke-linejoin="round" stroke-linecap="round" /><path d="M403.5 484.0C403.2 482.0 404.1 473.5 406.0 468.0C407.9 462.5 411.2 456.2 415.0 451.0C418.8 445.8 423.2 440.9 429.0 436.5C434.8 432.1 442.3 427.7 450.0 424.5C457.7 421.3 466.7 419.2 475.0 417.5C483.3 415.8 499.2 413.5 500.0 414.0C500.8 414.5 487.3 418.0 480.0 420.5C472.7 423.0 463.0 425.6 456.0 429.0C449.0 432.4 443.3 436.7 438.0 441.0C432.7 445.3 428.0 450.2 424.0 455.0C420.0 459.8 416.7 465.8 414.0 470.0C411.3 474.2 409.8 477.7 408.0 480.0C406.2 482.3 403.8 486.0 403.5 484.0z" fill="#151515" /><path d="M429.0 472.0C430.8 470.3 435.7 465.2 440.0 462.0C444.3 458.8 450.5 455.2 455.0 453.0C459.5 450.8 465.0 449.7 467.0 449.0" fill="none" stroke="#000" stroke-width="1.4" stroke-linejoin="round" stroke-linecap="round" /><path d="M362.0 412.3l12.7 -5.9M361.8 414.4l11.1 -5.6M359.8 397.8l32.8 -13.2M364.0 407.5l22.6 -9.9M368.0 463.3l3.6 -2.8M361.4 401.5l20.3 -7.3M366.3 434.2l5.5 -3.9M364.2 404.4l19.6 -7.9M364.0 421.5l14.6 -8.5M366.5 430.6l10.8 -6.9M368.5 461.9l4.9 -3.8M362.8 423.5l14.1 -7.7M368.5 454.0l5.0 -3.4M367.3 422.3l12.9 -6.7M363.4 398.4l37.2 -11.4M363.1 409.9l13.1 -6.0M360.6 400.9l27.5 -12.3M362.8 408.6l14.8 -6.5M368.4 428.5l12.5 -7.8M364.0 419.2l18.3 -10.6M361.3 402.1l23.3 -9.0M360.6 407.6l18.4 -7.9M371.6 459.9l4.7 -3.2M364.6 398.6l35.3 -10.8M364.1 414.6l16.1 -9.3M360.5 396.7l24.0 -9.9M359.9 394.4l26.0 -10.3M370.2 451.7l3.8 -2.8M362.2 415.7l21.5 -10.7M363.0 420.9l10.7 -6.3M367.0 447.4l6.6 -4.5M363.0 399.7l25.6 -8.2M370.6 451.2l4.2 -3.2M368.6 445.7l4.9 -3.6M371.8 449.2l6.4 -4.1M366.4 442.0l5.3 -4.0M360.8 395.7l32.9 -9.1M367.8 421.8l17.2 -9.6M361.6 404.3l17.5 -7.1M371.9 455.2l5.1 -3.3M363.3 400.4l32.3 -10.5M363.5 423.2l11.1 -5.7M370.0 461.1l5.7 -3.8M360.7 401.4l30.5 -10.8M364.7 403.5l27.0 -10.9M363.9 425.2l13.6 -7.7M368.5 425.3l13.8 -7.3M361.7 404.2l18.3 -7.4M363.1 406.3l25.5 -11.8M365.8 422.3l12.6 -6.0M365.9 423.8l7.8 -4.5M360.0 404.7l18.1 -7.3M368.3 440.1l6.5 -4.2M366.2 445.8l4.5 -3.3M368.5 444.8l6.9 -4.2M365.8 419.6l13.7 -6.9M365.4 420.2l17.2 -8.8M372.2 452.3l5.0 -3.1M367.0 448.7l4.6 -3.5M360.9 407.4l25.3 -9.5M364.1 402.6l18.8 -6.3M368.9 463.0l4.0 -2.9M372.9 461.8l4.1 -2.9M362.4 411.9l19.1 -10.6M365.8 425.6l9.0 -5.2M363.2 426.4l13.8 -6.9M361.1 397.8l30.7 -12.2M362.2 402.4l30.3 -12.4M365.3 402.0l27.2 -12.1M363.3 397.4l20.2 -5.8M393.0 502.1l11.0 -8.8M376.3 478.7l7.4 -5.9M391.2 499.5l5.9 -4.7M387.0 497.4l6.1 -4.9M372.5 477.1l7.1 -5.7M394.2 510.2l6.2 -5.0M380.5 490.1l5.1 -4.1M394.7 507.1l8.3 -6.7M398.6 520.0l8.0 -6.4M389.0 497.6l8.5 -6.8M395.5 506.0l10.8 -8.7M394.4 507.2l7.4 -5.9M372.3 475.9l10.2 -8.1M378.5 485.0l10.9 -8.7M399.5 513.9l6.7 -5.4M381.1 487.1l8.1 -6.5M382.7 490.7l8.8 -7.1M382.2 485.9l7.5 -6.0M371.9 475.9l8.5 -6.8M378.6 482.1l6.8 -5.5M374.7 477.3l5.2 -4.1M380.3 490.2l8.7 -7.0M395.8 511.1l11.2 -8.9M383.3 496.4l6.0 -4.8M394.9 505.8l10.8 -8.7M399.9 517.5l10.7 -8.5M376.8 482.3l10.8 -8.7M398.3 512.7l11.2 -9.0M394.0 505.1l5.2 -4.2M375.8 479.6l10.9 -8.7M389.9 501.9l9.8 -7.8M384.7 499.8l10.2 -8.2M387.8 499.6l5.5 -4.4M393.4 506.6l6.9 -5.5M392.9 510.3l11.8 -9.5M386.7 498.1l9.8 -7.8M396.1 511.4l5.5 -4.4M375.7 484.1l7.1 -5.7M387.1 498.9l6.9 -5.5M393.6 507.3l7.0 -5.6M387.8 499.0l5.8 -4.7M397.8 519.1l11.6 -9.2M372.8 478.7l11.8 -9.4M384.8 494.5l11.6 -9.3M379.2 483.3l8.7 -6.9M399.2 520.8l8.6 -6.8M400.1 514.3l11.3 -9.0M384.7 494.9l8.4 -6.8M385.0 494.1l7.4 -5.9M383.7 487.2l10.3 -8.2" stroke="#6e665c" stroke-width=".9" fill="none" opacity=".55"/><path d="M487.7 416.4l10.6 -7.9M475.7 427.9l6.7 -5.1M443.4 440.6l11.0 -8.2M464.0 426.7l7.6 -5.7M434.1 445.1l5.6 -4.2M487.3 418.3l10.6 -8.0M431.7 449.9l8.1 -6.0M426.0 457.1l10.7 -8.1M492.0 423.5l8.8 -6.6M494.8 424.6l8.3 -6.2M476.4 418.3l9.4 -7.0M450.8 438.9l8.9 -6.7M435.2 444.1l10.6 -7.9M420.1 465.1l7.1 -5.3M436.3 450.6l10.9 -8.1M432.7 453.2l6.8 -5.1M460.9 428.7l6.0 -4.5M423.4 458.4l10.4 -7.8M455.2 430.1l10.4 -7.8M502.7 418.9l5.8 -4.4M426.3 453.7l7.1 -5.3M416.7 466.9l6.6 -4.9M462.1 433.5l9.5 -7.1M447.2 437.8l8.1 -6.1M443.8 439.6l5.4 -4.0M434.4 455.0l5.8 -4.3M455.8 434.2l10.2 -7.6M428.5 453.3l6.5 -4.9M446.0 439.1l10.7 -8.0M488.6 424.6l5.1 -3.8M411.1 479.5l10.4 -7.8M453.0 435.6l5.0 -3.8M445.2 445.0l10.0 -7.5M489.3 425.6l6.5 -4.9M418.4 463.8l8.1 -6.1M472.8 429.3l9.3 -7.0M469.5 428.7l7.7 -5.8M460.4 425.1l9.7 -7.3M430.1 458.8l8.9 -6.7M436.9 443.4l6.5 -4.9M468.4 428.4l5.7 -4.3M414.7 472.6l8.5 -6.4M444.9 437.5l8.6 -6.5M409.0 477.9l7.8 -5.8M499.1 421.1l10.3 -7.7M453.2 431.6l6.5 -4.9M499.3 421.8l6.8 -5.1M410.1 478.5l9.0 -6.8M447.9 435.5l9.0 -6.8M495.9 416.7l5.2 -3.9M440.1 443.6l9.1 -6.8M426.8 460.9l9.4 -7.1M456.0 429.5l10.8 -8.1M437.6 450.3l6.4 -4.8M429.0 458.1l6.8 -5.1M498.4 419.5l6.1 -4.6M429.2 454.1l9.0 -6.7M498.1 415.7l7.4 -5.5M428.2 461.3l5.9 -4.4M412.9 469.8l7.4 -5.5M493.3 424.1l9.4 -7.0M502.8 424.2l7.0 -5.2M425.6 463.8l9.5 -7.1M411.0 479.0l7.3 -5.5M443.5 439.8l6.0 -4.5M408.3 478.7l7.1 -5.3M498.8 415.4l10.8 -8.1M427.7 455.1l9.9 -7.4M486.1 420.1l5.3 -4.0M453.0 433.2l10.5 -7.9M426.3 456.7l10.4 -7.8M410.9 476.5l9.9 -7.4M480.8 417.0l5.2 -3.9M413.9 477.9l6.5 -4.9M479.0 426.9l7.0 -5.3M433.9 455.3l8.7 -6.5M432.9 453.6l6.9 -5.2M434.2 444.5l9.5 -7.2M495.1 421.2l10.7 -8.0M410.3 475.3l7.9 -5.9M498.9 424.6l7.3 -5.5M431.8 451.6l8.0 -6.0M496.2 416.2l9.8 -7.4M478.2 426.3l9.6 -7.2M465.7 425.5l6.9 -5.2M442.4 445.7l5.5 -4.1M426.7 460.5l6.5 -4.9M414.1 467.9l8.3 -6.2M438.9 450.8l10.3 -7.7M501.8 416.9l5.5 -4.1" stroke="#2a2520" stroke-width=".9" fill="none" opacity=".85"/><path d="M500.2 432.3C497.1 433.4 487.1 435.9 481.5 438.9C475.9 441.8 468.9 448.1 466.4 450.0" fill="none" stroke="#000" stroke-width="3" stroke-linejoin="round" stroke-linecap="round" /><path d="M485.0 364.7C489.2 363.0 501.7 357.6 510.0 354.5C518.3 351.4 526.4 348.4 534.7 346.0C543.0 343.6 551.7 341.7 560.0 340.0C568.3 338.3 576.2 337.0 584.5 336.0C592.8 335.0 601.7 334.4 610.0 334.0C618.3 333.6 626.5 333.5 634.3 333.6C642.1 333.7 653.0 334.6 656.8 334.8L664 340L672.0 397.0C669.8 397.8 665.3 400.7 659.0 402.0C652.7 403.3 642.6 402.7 634.3 404.6C626.0 406.5 619.8 409.8 609.4 413.3C599.0 416.8 584.5 422.4 572.0 425.7C559.5 429.0 546.3 431.7 534.7 433.2C523.1 434.7 507.7 434.3 502.3 434.5L510.7 412L471.3 388.5z" fill="#8b8b8b" stroke="#000" stroke-width="3" stroke-linejoin="round" stroke-linecap="round" /><path d="M524.2 389.2L516.8 397.7M583.1 344.2L576.4 355.4M527.4 360.0L518.7 365.3M615.1 382.8L609.3 387.9M590.1 344.0L581.3 350.9M619.6 382.4L609.2 390.9M548.0 413.3L538.6 423.4M621.6 347.2L616.9 354.0M634.8 379.0L628.1 384.9M565.1 374.3L557.9 382.7M590.0 353.3L578.5 361.4M625.5 391.5L619.1 396.7M614.4 391.9L610.0 397.5M550.4 352.2L542.6 361.9M620.7 342.2L615.5 346.8M597.2 369.1L585.5 377.1M579.2 340.9L573.4 348.8M580.8 352.7L573.8 364.0M535.7 428.1L527.8 433.4M558.0 386.9L549.6 394.3M573.0 396.3L564.2 402.0M553.5 405.7L548.2 412.8M636.6 387.0L631.8 391.6M551.1 392.5L545.3 402.2M584.1 343.6L576.5 350.4M591.3 371.1L581.8 378.9M526.2 380.9L519.5 387.0M543.3 367.4L536.0 375.8M533.7 373.5L528.3 377.6M574.5 407.1L569.3 413.5M610.2 360.4L604.4 368.5M594.1 347.6L588.3 354.6M614.7 379.2L608.2 383.8M539.2 399.1L530.9 404.8M568.5 355.9L558.0 363.7M515.9 364.2L506.6 371.1M610.6 370.5L605.6 377.8M608.7 363.5L602.3 371.0M551.8 376.5L545.3 380.8M588.8 386.8L583.0 394.0M577.5 365.0L571.9 369.1M625.3 403.2L614.1 410.6M624.8 392.2L618.5 402.8M514.1 366.2L506.0 373.1M526.4 419.0L517.6 428.1" stroke="#7a7a7a" stroke-width="1" fill="none" stroke-linecap="round"/><path d="M625.1 342.8L619.6 347.0M571.6 362.1L567.3 367.3M531.9 376.5L526.3 379.6M609.6 343.8L604.4 347.2M490.3 374.6L485.5 379.4M520.7 377.5L510.9 383.5M624.1 350.5L619.2 354.8M535.2 363.3L529.1 370.8M540.7 351.0L533.2 354.9M537.4 358.2L532.4 361.2M636.3 339.0L626.9 344.3M492.7 371.1L485.8 377.0M541.7 352.9L533.3 359.0M506.2 369.4L496.7 374.6M495.5 377.7L490.5 383.4M537.5 345.5L533.3 350.2M550.9 348.0L542.1 353.9M558.3 355.7L551.1 364.2M615.8 343.5L605.9 349.2M512.4 373.5L506.3 379.1M550.6 344.2L541.7 351.7M564.9 352.2L560.2 357.5M544.2 371.0L535.6 375.7M544.5 367.6L538.3 373.4M527.6 366.2L519.3 372.7M542.2 365.1L533.0 370.4M542.5 373.4L533.8 377.7M567.7 360.2L560.4 367.9M599.6 345.2L591.6 349.6M589.8 355.7L581.2 361.3M556.2 365.3L549.3 372.2M584.6 339.8L579.2 343.9M537.6 345.6L533.7 349.6M559.8 354.0L552.2 359.0M525.7 375.9L520.7 382.1M531.8 355.2L524.6 363.1M582.0 342.0L575.9 346.4M545.4 344.0L538.0 349.0M581.3 352.7L576.4 355.1M506.2 361.8L500.9 365.2M546.4 356.1L541.2 361.2M579.4 348.9L571.5 352.2M552.3 351.4L544.5 354.7M533.0 358.0L526.7 364.9M556.5 350.3L547.2 355.4M531.1 377.3L525.0 380.6M604.1 350.6L598.0 355.0M534.5 360.3L528.5 365.0M492.2 370.7L485.2 376.4M547.8 354.5L541.9 357.4M594.2 356.2L586.6 363.2M626.6 344.0L619.6 349.4M564.7 351.9L558.4 358.5M611.8 340.9L604.2 348.3M493.8 368.3L483.1 372.9M595.2 340.1L589.1 343.1M596.9 343.7L588.6 351.2M512.5 363.6L507.5 367.7M583.4 339.8L578.1 345.6M621.8 343.6L616.0 348.3M580.0 358.6L573.0 361.7M498.4 367.3L491.9 374.1M528.1 369.5L523.1 373.2M525.2 353.6L519.5 356.9M502.8 366.1L498.7 370.7M579.1 348.0L571.5 351.7M538.5 371.5L532.1 379.1M613.1 343.9L606.7 348.0M525.3 352.0L518.9 356.2M547.9 343.7L539.4 348.1M610.7 356.2L602.9 360.1M578.9 362.1L572.1 366.0M604.1 338.0L595.3 344.7M582.9 356.0L578.2 359.7M546.2 354.2L540.5 357.0M528.1 349.7L523.1 354.9M525.3 358.2L518.1 366.9M507.7 366.1L500.6 372.6M599.4 344.9L595.5 348.8M544.6 351.1L539.0 355.5" stroke="#555" stroke-width="0.9" fill="none" stroke-linecap="round"/><path d="M554.0 412.1L547.9 419.5M539.1 426.7L532.2 430.7M557.7 423.4L551.5 429.8M576.4 412.2L567.8 416.7M579.1 414.1L572.2 421.9M576.3 417.0L571.9 422.0M564.4 412.9L556.1 416.5M534.1 422.7L525.5 430.1M583.7 418.9L575.4 424.2M522.0 414.8L515.9 418.8M561.2 407.4L553.4 411.2M528.2 422.9L523.3 427.3M553.9 408.7L546.2 416.4M568.9 405.3L564.0 408.0M546.4 415.5L538.5 424.1M523.8 416.4L516.9 420.3M588.7 411.6L578.5 415.9M553.0 424.1L548.4 427.8" stroke="#606060" stroke-width="0.9" fill="none" stroke-linecap="round"/><path d="M540.0 392.0C544.2 391.0 555.0 388.0 565.0 386.0C575.0 384.0 592.5 381.5 600.0 380.0C607.5 378.5 608.3 377.5 610.0 377.0" fill="none" stroke="#3a3a3a" stroke-width="1.6" stroke-linejoin="round" stroke-linecap="round" /><path d="M535.0 428.0C540.0 427.2 554.2 425.5 565.0 423.0C575.8 420.5 594.2 414.7 600.0 413.0" fill="none" stroke="#4a4a4a" stroke-width="1.3" stroke-linejoin="round" stroke-linecap="round" /><path d="M482.5 366.0L471.3 388.5L510.7 412.0L502.3 433.5L520.0 431.5L527.6 408.3L484.4 383.8L486.0 366.0z" fill="#555" stroke="#000" stroke-width="2.4" stroke-linejoin="round" stroke-linecap="round" /><path d="M475.9 382.6L476.3 386.3M496.8 399.2L499.8 404.3M476.1 381.7L478.4 384.9M482.3 376.1L483.9 380.5M483.5 382.3L486.0 385.8M505.5 399.3L506.8 402.6M493.4 390.2L495.2 393.4M512.3 413.5L513.3 416.4M491.8 395.0L495.2 400.3M513.4 409.4L516.4 413.6M483.7 385.9L485.9 391.9M519.0 411.9L519.9 417.3M517.8 406.5L519.7 410.6M498.9 401.4L499.7 405.3M486.4 394.1L489.6 399.1M486.6 385.5L487.6 390.2M494.5 390.2L495.3 395.9M517.4 406.0L518.2 410.2M515.5 419.2L517.7 424.0M520.3 409.7L521.7 412.5M518.2 420.6L519.5 425.5M491.4 387.9L492.6 391.1M480.1 383.1L482.0 387.2M483.7 385.6L486.5 390.5M518.0 403.5L520.7 408.9M478.6 387.9L480.0 391.2M521.6 405.2L523.0 409.5M514.7 421.3L515.7 424.6M484.4 390.5L486.3 394.3M491.5 390.6L492.9 394.4M515.6 415.7L516.9 419.4M506.9 399.4L508.1 403.5M497.0 397.5L499.1 402.0M513.0 415.4L514.7 420.4M479.4 375.8L481.1 381.9M482.4 367.9L485.0 371.8M517.0 409.9L518.1 415.5M516.4 406.9L518.4 410.2M510.2 403.7L512.3 407.8M490.1 391.8L492.2 396.0M516.3 408.1L517.2 414.4M498.2 397.3L499.7 403.3M510.4 400.4L512.0 404.5M496.6 397.8L497.4 401.2M481.4 376.7L482.8 382.7M509.7 406.7L512.6 412.1M481.3 372.8L483.3 375.9M477.1 379.0L478.9 383.6M479.4 385.3L480.0 389.6M516.6 410.4L518.1 413.4M479.5 384.0L480.3 390.2M521.6 406.2L524.7 410.7M512.1 417.0L514.2 420.4M512.2 410.8L515.0 416.6M514.1 425.2L515.6 429.9M510.9 401.5L511.9 406.9M483.6 391.2L484.8 394.7M512.1 419.2L514.1 424.9M509.0 419.8L510.4 424.0M506.5 423.5L507.2 427.7M478.2 383.4L481.2 387.8M505.8 400.3L508.6 405.7M518.3 410.1L520.2 412.9M521.0 408.6L523.3 412.3M486.3 394.8L488.6 398.2M518.0 425.3L519.2 428.0M488.9 394.0L490.0 398.1M498.9 398.7L500.1 401.7M493.4 391.5L495.0 395.1M479.2 375.3L479.7 378.6" stroke="#161616" stroke-width="1.1" fill="none" stroke-linecap="round"/><path d="M629.0 332.0L642.0 325.0L657.0 322.0L672.0 322.0L685.0 325.0L690.0 330.0L692.0 340.0L660.0 342.0L655.0 335.0z" fill="#3c3836" /><path d="M629.4 331.5C631.5 330.4 637.2 326.5 641.8 325.0C646.4 323.5 652.0 322.8 657.0 322.3C662.0 321.8 667.0 321.6 671.7 322.0C676.4 322.4 682.5 323.7 685.4 325.0C688.3 326.3 688.4 329.2 689.0 330.0" fill="none" stroke="#000" stroke-width="7" stroke-linejoin="round" stroke-linecap="round" /><path d="M632.0 330.0C633.6 329.2 637.6 326.5 641.8 325.3C646.0 324.1 652.0 323.3 657.0 322.8C662.0 322.3 667.2 322.1 671.7 322.5C676.2 322.9 682.0 325.0 684.0 325.5" fill="none" stroke="#555" stroke-width="2.4" stroke-linejoin="round" stroke-linecap="round" stroke-dasharray="2.500 1.500"/><path d="M676.0 341.0L694.0 331.0L712.0 327.0L740.0 318.0L762.0 322.0L760.0 348.0L745.0 366.0L715.0 380.0L700.0 392.0L672.0 397.0L660.0 380.0z" fill="#262321" stroke="#000" stroke-width="2.4" stroke-linejoin="round" stroke-linecap="round" /><path d="M736.4 354.9L739.1 357.1M715.5 340.7L720.6 343.5M746.1 352.1L750.4 355.2M721.5 344.0L727.1 346.6M717.6 362.9L722.7 365.0M730.2 342.2L732.4 344.4M717.7 367.8L720.5 369.6M720.1 343.2L723.8 344.8M743.0 330.2L745.4 332.2M722.7 362.8L726.5 365.1M741.8 345.8L744.5 347.4M731.0 340.2L735.2 343.6M720.1 333.7L724.3 336.2M751.5 347.0L756.9 349.1M734.4 347.9L738.4 349.9M732.5 360.6L737.0 362.5M723.0 356.8L726.7 358.2M730.5 353.8L734.8 355.5M724.4 336.1L729.7 339.6M731.4 331.5L736.0 335.6M715.3 335.4L718.4 338.2M716.8 353.0L721.1 357.8M737.7 323.2L742.7 326.0M736.5 353.4L742.1 356.3M755.2 330.1L760.6 333.0M746.7 332.7L750.1 334.5M733.9 334.1L739.3 337.5M740.2 353.2L744.6 357.8M749.2 342.9L754.1 346.6M750.5 351.0L754.2 353.2M748.1 350.2L753.2 352.1M739.1 361.5L741.9 363.2M730.9 337.6L734.6 341.6M739.4 353.1L743.8 355.1M746.5 341.7L750.5 343.7M729.6 356.3L732.6 357.6M729.1 356.8L733.0 360.3M735.0 331.0L738.2 333.6M725.7 338.4L727.8 340.6M731.2 336.0L735.3 338.0M724.9 367.9L729.4 371.0M722.3 345.2L727.0 348.8M726.2 345.0L730.5 349.1M725.2 348.9L728.5 351.8M745.3 355.2L748.6 358.8M745.6 339.5L748.7 342.2M737.5 340.0L740.5 341.7M725.2 349.2L728.0 350.7M751.2 336.3L754.6 340.0M732.5 365.7L735.4 368.6" stroke="#57504a" stroke-width="1.3" fill="none" stroke-linecap="round"/><path d="M600.7 367.2C601.1 364.3 605.5 359.5 609.4 356.0C613.3 352.5 616.5 348.9 624.4 346.0C632.3 343.1 651.0 339.4 656.8 338.6C662.6 337.8 656.0 340.6 659.3 341.0C662.6 341.4 670.9 342.0 676.7 341.0C682.5 340.0 689.3 335.0 694.1 334.8C698.9 334.6 703.4 336.5 705.3 339.8C707.2 343.1 708.8 349.8 705.3 354.8C701.8 359.8 691.9 366.4 684.2 369.7C676.5 373.0 669.7 373.4 659.3 374.7C648.9 375.9 630.6 377.4 621.9 377.2C613.2 377.0 610.5 375.1 607.0 373.4C603.5 371.7 600.3 370.1 600.7 367.2z" fill="#4c4540" stroke="#000" stroke-width="3" stroke-linejoin="round" stroke-linecap="round" /><path d="M616.9 364.7C618.6 362.2 619.4 357.0 629.4 353.5C639.4 350.0 666.3 345.4 676.7 343.5C687.1 341.6 688.7 341.2 691.6 342.3C694.5 343.4 696.2 346.7 694.1 349.8C692.0 352.9 689.2 357.7 679.2 361.0C669.2 364.3 644.3 368.4 634.3 369.7C624.3 370.9 622.3 369.3 619.4 368.5C616.5 367.7 615.2 367.2 616.9 364.7z" fill="#8a8a8a" stroke="#000" stroke-width="2.4" stroke-linejoin="round" stroke-linecap="round" /><path d="M638.1 360.8L631.5 365.8M671.4 348.0L667.5 351.5M640.6 354.9L634.6 358.8M659.5 354.9L655.1 359.4M651.0 349.1L646.8 354.3M637.7 355.6L633.0 359.5M629.2 356.3L625.7 360.4M633.6 353.4L629.3 359.5M686.8 354.0L679.7 359.1M664.7 348.7L658.8 354.6M634.8 359.2L629.4 363.8M645.2 361.7L641.3 365.9M631.5 360.7L628.4 365.0M624.8 359.8L619.7 364.3M638.8 358.7L635.1 364.0M656.2 355.9L651.7 359.4M638.1 360.7L633.5 363.7M661.2 353.2L657.5 357.5M634.3 353.1L630.8 358.1M626.1 362.4L622.8 365.1M674.2 349.4L669.1 354.1M643.3 351.7L639.8 355.1M680.4 347.6L676.0 350.5M641.2 353.9L638.5 357.9M645.3 355.2L637.6 359.9M658.2 347.9L655.2 352.4M680.8 348.4L676.4 352.6M650.8 358.2L644.4 363.4M682.8 347.7L678.7 353.1M670.9 347.5L664.1 352.5" stroke="#555" stroke-width="1" fill="none" stroke-linecap="round"/><path d="M611.3 365.5L612.3 370.4M628.7 346.7L629.4 350.9M642.0 368.7L643.4 371.4M695.6 351.0L697.3 355.3M692.7 357.6L694.2 360.9M623.1 369.5L623.8 372.1M686.7 339.8L687.6 342.1M699.5 347.1L700.6 349.8M697.2 348.2L697.7 351.6M653.9 371.3L655.0 374.6M640.3 369.0L641.6 372.1M645.1 341.4L646.2 344.0M668.6 363.6L670.3 368.3M606.6 364.6L606.8 368.5M698.7 338.9L699.1 342.1M647.7 368.9L648.7 372.7M661.2 369.4L662.5 373.5M702.6 353.6L703.6 355.9M691.4 356.0L692.6 359.6M625.0 346.7L625.3 349.8M671.6 364.8L672.5 369.3M644.9 345.4L645.6 349.5M650.1 367.7L651.4 371.3M618.5 369.5L620.4 372.8M637.4 370.4L637.4 374.0M695.2 343.2L697.1 347.4M612.1 371.7L613.5 374.9M608.6 367.3L610.4 370.8M606.8 364.0L607.0 367.4M695.3 350.2L696.6 353.6M654.2 368.9L654.5 373.8M645.2 343.5L645.3 347.1M636.4 370.6L637.6 375.5M631.9 346.3L632.9 348.9M701.8 341.0L703.5 344.9M626.8 345.8L629.0 349.7M624.3 370.0L624.6 372.4M689.8 353.7L691.1 358.5M703.1 349.6L704.0 352.7M636.4 346.4L636.5 350.0M642.3 345.9L642.9 349.1M653.9 344.6L654.1 347.3M685.3 362.0L685.5 364.4M690.4 337.1L692.0 340.3M654.3 368.9L655.1 372.0M619.1 369.3L620.0 372.5M608.0 367.7L608.1 372.2M685.8 358.6L687.4 363.1M700.8 339.7L701.4 342.7M611.3 356.4L612.6 360.8" stroke="#1a1a1a" stroke-width="1.1" fill="none" stroke-linecap="round"/><ellipse cx="666.700" cy="334.600" rx="8" ry="3.800" fill="#fff"/><path d="M655.0 374.0L672.0 371.0L690.0 392.0L668.0 398.0z" fill="#2a2624" stroke="#000" stroke-width="2" stroke-linejoin="round" stroke-linecap="round" /><path d="M605.7 388.4C607.4 386.9 614.7 386.7 619.4 385.9C624.1 385.1 627.8 383.6 634.0 383.4C640.2 383.2 650.1 383.6 656.8 384.6C663.5 385.6 672.1 387.5 674.2 389.6C676.3 391.7 673.8 394.9 669.2 397.0C664.6 399.1 654.7 401.4 646.8 402.0C638.9 402.6 628.2 402.0 622.0 400.8C615.8 399.6 612.1 396.7 609.4 394.6C606.7 392.5 604.0 389.8 605.7 388.4z" fill="#4c4540" stroke="#000" stroke-width="2.8" stroke-linejoin="round" stroke-linecap="round" /><path d="M622.0 392.5C626.0 392.4 638.3 392.2 646.0 392.0C653.7 391.8 664.3 391.2 668.0 391.0" fill="none" stroke="#8a8a8a" stroke-width="2.4" stroke-linejoin="round" stroke-linecap="round" /><path d="M656.0 386.8L655.9 389.3M622.3 390.1L622.5 393.3M623.9 388.1L623.9 393.0M660.2 388.0L660.1 391.8M621.7 392.2L622.3 394.8M644.4 390.5L645.1 395.4M649.9 391.3L649.8 396.5M640.1 387.2L640.0 390.6M622.0 389.6L622.0 392.9M667.5 390.1L668.0 392.6M638.3 386.1L638.9 389.5M656.4 389.2L658.3 393.7M640.0 392.7L639.8 395.2M644.7 392.3L644.9 396.4M653.1 388.6L654.0 390.9M628.7 395.7L629.4 399.0M648.1 396.7L648.5 399.9M629.7 391.0L630.1 393.8M627.7 394.9L627.9 398.2M645.2 390.0L645.1 392.8M612.7 390.2L612.9 394.1M645.4 393.9L645.5 397.3M621.9 394.0L622.3 396.7M642.0 392.4L643.5 396.5M658.9 390.1L658.9 395.3M651.0 391.3L651.8 394.0M634.4 391.6L634.4 395.0M644.7 393.0L645.4 396.7M637.8 394.7L638.6 398.2M647.6 392.3L649.1 395.6M633.6 395.4L633.7 398.3M644.8 393.4L645.8 396.2M657.7 393.1L658.1 397.4M652.4 389.8L652.4 393.5M650.9 388.3L652.6 393.1M659.9 391.1L660.7 395.1M627.9 390.9L627.6 394.3M651.2 385.7L652.3 388.6M651.8 388.1L652.0 390.7M653.0 396.6L653.9 399.6" stroke="#111" stroke-width="1.1" fill="none" stroke-linecap="round"/><path d="M690.0 330.0L740.0 318.0L800.0 300.0L830.0 304.0L892.0 300.0L913.0 293.0L930.0 300.0L915.0 336.0L950.0 343.0L925.0 358.0L900.0 367.0L830.0 375.0L700.0 382.0z" fill="#181818" /><path d="M688.0 327.4L724.8 308.6L764.7 299.9L800.0 290.0L856.8 275.0L859.8 278.7L800.0 318.0L754.7 362.1L738.5 359.6L720.0 340.0z" fill="#3a3735" stroke="#000" stroke-width="2.4" stroke-linejoin="round" stroke-linecap="round" /><path d="M733.5 323.5L779.6 297.4L856.8 275.0L859.8 278.7L858.1 284.9L827.0 304.8L754.7 362.1L738.5 359.6L746.0 340.0z" fill="#8d8d8d" stroke="#000" stroke-width="2.4" stroke-linejoin="round" stroke-linecap="round" /><path d="M779.5 316.4L770.6 322.8M785.4 331.2L775.9 339.4M826.4 302.0L812.7 308.6M766.2 351.1L754.6 356.5M812.1 300.9L804.8 307.4M766.8 342.2L758.3 348.8M772.4 314.7L763.4 324.2M763.6 310.1L754.3 317.3M816.1 309.6L807.2 316.8M848.0 285.5L834.7 292.8M829.1 288.9L821.0 293.5M761.6 310.9L755.8 316.7M764.2 350.2L754.3 354.4M840.8 293.5L834.9 297.9M796.4 320.9L786.4 327.8M796.8 317.2L788.1 326.2M773.5 314.8L761.5 320.5M756.1 335.7L747.7 342.0M762.4 314.1L751.4 319.9M762.3 309.2L755.6 313.1M811.9 288.4L799.7 293.0M762.4 318.3L749.2 324.1M761.9 324.8L751.5 332.9M757.9 327.5L750.5 331.1M760.0 312.6L754.2 318.1M749.2 348.6L742.5 353.5M808.0 310.6L797.5 316.1M849.6 288.0L841.5 291.0M843.7 292.4L833.2 298.8M838.6 280.3L827.9 284.7M773.6 327.6L765.3 332.7M769.8 327.2L763.5 331.9M810.9 301.0L799.1 310.7M772.8 330.6L759.9 335.5M837.7 294.3L827.3 298.3M786.4 300.4L778.8 304.2M759.9 337.4L754.5 343.2M796.2 306.0L791.0 311.8M766.2 311.2L758.6 318.8M809.9 301.6L803.4 307.4M776.4 341.7L766.9 346.2M776.2 314.6L770.0 318.6M785.0 310.4L775.1 316.5M751.1 346.2L742.8 353.0M765.0 310.8L754.9 322.0M760.2 328.7L753.3 333.6M761.2 349.2L750.7 355.5M751.8 325.3L743.5 328.7M773.5 304.0L767.8 309.0M766.6 345.5L761.0 351.1M854.3 281.0L848.6 285.6M778.4 331.9L770.0 338.7M761.8 337.6L751.8 343.6M760.1 311.6L754.0 316.8M817.5 289.2L812.1 294.4M788.8 301.7L781.4 306.3M823.2 305.1L815.6 312.7M765.0 353.8L755.1 358.4M759.1 322.1L750.6 331.0M798.5 296.5L785.0 304.1M834.2 281.6L824.0 287.7M768.6 312.5L759.9 317.3M764.8 318.8L755.4 322.9M773.9 319.0L760.9 324.0M823.6 297.0L812.5 303.6M771.8 320.2L761.0 330.5M777.2 327.3L768.0 336.4M780.8 320.3L772.0 324.3M758.2 343.1L746.9 352.6M849.6 289.3L836.8 297.4" stroke="#606060" stroke-width="1" fill="none" stroke-linecap="round"/><path d="M768.9 348.4L761.4 351.2M778.0 306.6L772.1 313.0M783.5 315.1L776.7 319.7M791.9 309.1L783.1 313.7M797.1 312.6L786.8 319.2M776.5 318.6L767.8 327.6M791.4 314.3L780.7 321.1M769.2 321.6L760.5 329.1M794.6 319.1L784.9 326.9M772.6 316.4L765.0 324.7M757.6 328.0L749.7 334.8M782.4 318.6L773.4 327.9M794.2 301.2L785.0 307.0M761.2 343.9L751.7 347.5M760.5 311.7L755.1 316.4M789.7 332.2L778.5 337.5M787.7 303.0L781.5 305.4M777.7 324.2L773.2 329.0M776.4 314.5L769.8 318.8M745.6 317.7L737.3 322.1M760.5 329.2L752.4 334.3M783.9 313.7L778.2 318.4M783.4 334.1L773.5 341.3M756.4 334.7L747.2 338.4M774.8 322.1L764.2 325.9" stroke="#333" stroke-width="1" fill="none" stroke-linecap="round"/><path d="M746.0 340.0L852.0 281.0L857.0 284.5L754.7 362.0L741.0 358.0z" fill="none" stroke="#000" stroke-width="1.6" stroke-linejoin="round" stroke-linecap="round" /><path d="M703.7 328.5L723.4 339.2L710.2 363.2L698.0 368.5L703.0 352.0L706.0 340.0z" fill="#808080" stroke="#000" stroke-width="2.2" stroke-linejoin="round" stroke-linecap="round" /><path d="M709.8 350.4L705.6 354.1M711.2 351.5L708.6 356.6M715.0 352.6L713.4 355.9M711.0 354.5L708.3 358.4M717.9 344.0L714.2 347.6M718.2 338.8L716.2 343.3M712.5 345.9L709.5 351.8M718.1 341.2L716.1 344.5M709.0 332.2L706.0 339.2M704.2 356.2L700.8 362.4M713.5 339.7L710.5 345.7M714.0 339.2L710.7 342.2M716.0 351.4L714.3 354.8M710.5 357.2L706.5 363.9M707.1 355.4L701.8 360.3M708.8 359.6L704.5 363.8M714.2 343.3L710.4 348.1M716.9 343.5L712.8 348.0M710.5 337.2L706.7 341.5M705.8 355.1L703.8 358.9M706.5 354.6L704.0 359.4M720.9 343.4L717.8 347.2" stroke="#3a3a3a" stroke-width="1" fill="none" stroke-linecap="round"/><path d="M728.0 322.0L748.0 318.0L746.0 330.0L737.0 331.0z" fill="#4e4a47" stroke="#000" stroke-width="1.4" stroke-linejoin="round" stroke-linecap="round" /><path d="M722.0 345.0L745.0 336.0L744.0 352.0L728.0 362.0L716.0 360.0z" fill="#3d3835" stroke="#000" stroke-width="1.4" stroke-linejoin="round" stroke-linecap="round" /><path d="M729.0 353.8L732.3 354.5M724.5 355.7L729.9 356.9M736.5 339.6L740.7 341.4M734.4 350.2L739.2 353.7M718.9 355.1L723.3 358.0M724.1 356.7L727.3 358.5M735.9 341.7L740.1 342.4M727.4 346.3L732.6 349.0M735.5 350.2L738.4 351.7M727.4 354.5L731.3 357.1M735.2 352.5L738.5 353.1M721.9 354.9L727.5 357.9M728.5 343.3L731.6 344.1M721.5 358.5L726.6 359.4M737.5 349.6L741.1 352.0M721.5 356.4L726.9 359.5M737.3 351.1L743.1 352.5M721.3 347.0L725.6 348.0M726.6 347.1L730.9 349.4M724.8 356.2L729.9 359.2M728.2 346.4L731.9 348.7M727.7 354.1L733.1 356.0" stroke="#6a625c" stroke-width="1.2" fill="none" stroke-linecap="round"/><path d="M827.0 306.0L854.4 292.4L912.9 291.1L891.7 302.3L841.9 313.5z" fill="#5b5148" stroke="#000" stroke-width="2.4" stroke-linejoin="round" stroke-linecap="round" /><path d="M797.0 334.7L836.9 316.0L839.4 342.2L809.5 350.9L780.0 356.0L770.0 352.0z" fill="#7e7e7e" stroke="#000" stroke-width="2" stroke-linejoin="round" stroke-linecap="round" /><path d="M805.3 335.8L803.0 342.8M819.0 329.7L815.3 338.1M822.0 338.7L820.4 347.2M787.0 344.2L784.2 351.8M834.8 323.2L831.4 330.8M818.7 333.7L816.6 340.9M812.0 337.2L809.7 346.3M828.0 337.6L827.3 343.2M816.1 337.6L814.3 347.3M832.1 335.2L829.4 340.4M799.0 343.3L798.0 349.9M829.5 328.9L828.1 339.1M783.1 344.6L780.2 351.2M807.0 338.1L805.4 343.2M813.5 335.0L810.8 344.3M833.5 323.4L832.0 332.5M835.2 327.4L834.1 336.9M794.3 339.7L789.7 347.2M806.9 344.7L804.2 348.8M818.0 333.8L816.7 343.2M828.8 327.4L824.5 335.4M808.6 341.0L805.3 350.3M818.0 334.4L817.3 342.8M835.6 324.9L832.9 329.0M799.0 345.0L795.6 352.3M820.8 334.1L820.1 341.2M834.9 336.4L833.7 341.9M831.2 338.5L830.1 344.1M819.1 335.5L817.5 344.4M829.3 329.9L824.8 337.3M837.1 327.3L833.1 333.6M835.2 325.5L834.0 331.3M782.3 347.3L780.8 355.2M821.4 330.2L818.7 336.2M803.6 342.2L800.0 348.8M834.7 335.7L833.3 343.6M787.7 345.5L783.9 351.4M833.2 335.3L830.3 340.5M826.5 336.9L824.8 345.7M811.6 333.4L808.2 339.8M818.1 337.5L816.3 344.1M820.5 324.8L817.5 330.7M836.3 321.9L831.7 330.1M787.1 343.3L785.7 348.3M825.6 325.4L823.3 329.8M808.1 338.4L804.1 345.6M837.2 332.6L835.1 340.8M833.3 333.5L832.6 340.4M832.3 332.2L831.1 337.3M789.8 342.1L788.0 349.8" stroke="#2e2e2e" stroke-width="1.1" fill="none" stroke-linecap="round"/><path d="M839.4 318.5L891.7 306.0L929.0 299.9L970.2 284.9L988.8 282.4L1003.0 300.0L1012.0 314.0L995.0 328.0L981.4 324.8L973.9 329.7L949.0 342.2L929.0 342.2L914.1 336.0L839.4 341.0z" fill="#858585" stroke="#000" stroke-width="2.4" stroke-linejoin="round" stroke-linecap="round" /><path d="M948.3 329.5L938.6 333.4M889.8 317.0L883.6 320.7M872.4 315.5L861.4 320.8M968.5 308.0L958.4 314.8M960.9 307.0L952.4 309.7M877.3 315.6L865.0 319.1M912.7 311.8L904.1 317.5M920.0 305.4L907.0 308.0M982.5 298.2L974.8 303.8M858.2 324.9L851.6 328.6M957.7 310.7L947.2 316.3M950.0 327.6L944.1 331.6M920.9 322.1L912.9 328.0M939.3 335.0L932.4 337.1M943.8 320.8L936.1 326.5M944.4 339.1L933.6 341.0M849.8 328.9L842.0 331.5M871.5 314.4L864.2 316.4M891.7 313.7L880.0 320.3M942.6 323.5L933.3 328.5M908.7 311.8L897.9 319.3M988.8 313.8L980.4 315.5M914.7 306.0L906.3 310.4M911.2 332.8L904.0 334.0M946.8 314.7L940.6 317.6M898.7 318.4L890.8 322.3M866.5 322.5L855.2 326.8M949.2 319.6L938.6 325.6M973.7 300.1L966.3 304.8M934.3 309.8L926.0 315.5M927.6 317.6L916.3 323.2M948.3 299.0L936.0 305.2M875.4 310.0L865.6 315.2M967.2 291.2L961.2 294.8M860.2 314.2L847.4 319.6M912.5 314.5L905.7 319.4M966.1 308.2L957.1 314.0M961.1 309.5L951.4 316.2M883.4 312.2L874.1 314.8M994.7 308.5L988.8 312.9M946.8 339.0L940.2 341.6M997.5 300.3L985.6 307.9M868.8 321.1L860.9 324.4M873.4 318.6L863.8 323.9M876.4 318.7L869.7 322.9M901.3 325.5L890.0 333.4M997.9 314.6L990.7 318.2M923.4 320.6L915.8 323.3M974.7 308.7L962.7 316.0M983.4 287.8L973.5 291.2M944.1 309.9L932.4 316.5M947.4 300.2L934.3 303.6M902.1 317.3L895.8 321.5M989.0 292.6L979.8 295.4M903.5 320.6L890.8 325.7M918.0 309.4L910.5 310.8M923.2 306.4L909.6 308.5M870.3 328.5L863.8 330.6M923.9 303.8L915.2 307.5M904.6 310.3L897.7 312.1M961.3 317.9L953.7 319.8M886.1 336.6L877.5 338.0M920.3 308.7L909.0 310.8M990.0 321.7L983.5 324.6M919.5 314.3L907.1 318.5M898.5 315.9L885.0 319.0M971.8 299.3L960.3 302.0M890.4 316.1L878.0 319.2M879.0 312.3L871.5 314.7M962.2 329.8L949.1 334.6M995.5 319.7L987.5 325.6M890.8 332.0L883.2 333.2M948.5 333.6L940.1 339.1M933.2 325.1L923.0 330.7M928.6 305.2L916.8 310.0M966.3 308.3L956.6 310.7M975.3 305.5L963.5 311.3M949.7 310.4L938.8 312.7M977.7 299.3L964.2 302.7M904.1 328.1L893.1 329.8M961.1 290.4L950.3 297.6M963.2 292.9L955.7 294.8M925.1 301.3L912.2 304.7M943.8 328.2L933.5 335.8M939.9 331.7L931.7 337.1M925.4 325.4L916.7 328.5M998.7 295.2L989.5 300.9M868.6 330.1L862.0 332.9M915.6 324.6L907.8 327.5M990.4 290.3L983.5 295.3M981.3 314.5L972.3 317.4M897.4 309.5L887.8 315.3M964.6 295.0L957.2 296.3M988.1 309.9L977.7 312.3M908.2 304.8L898.2 308.5M906.8 304.8L895.5 312.5M848.6 323.6L839.6 328.8M903.8 313.3L896.9 317.9M854.8 324.8L845.3 331.8M973.7 327.3L966.5 331.9M959.8 301.9L949.3 304.8M928.2 301.0L915.8 305.9M947.3 323.6L938.0 326.7M968.0 331.8L961.3 333.9M870.3 331.8L860.7 337.6M987.2 301.9L978.5 305.7M928.0 304.5L916.0 311.6M998.0 309.4L990.1 314.6M905.9 317.6L898.4 322.5M920.1 329.9L913.7 334.1M877.4 313.8L866.1 320.5M964.9 324.9L956.2 327.8M891.8 321.2L881.8 326.1M870.7 318.1L859.4 320.5M971.2 289.5L963.5 292.2M926.2 325.5L918.7 328.9M934.9 302.8L923.5 307.1M891.9 315.2L882.0 318.8M976.4 293.7L970.9 297.3M989.0 298.1L980.3 300.7M941.4 317.7L933.0 322.3M926.3 332.6L918.1 335.5M926.5 315.2L916.2 320.1M988.1 294.3L979.2 299.8M943.1 306.0L933.1 309.9M875.1 336.5L867.8 338.9M884.8 322.7L876.1 327.4M922.2 312.5L912.1 316.5M928.2 332.3L920.1 333.9M924.7 331.0L915.2 332.7M879.9 324.7L872.0 326.2M887.0 323.6L879.7 328.3M924.6 310.4L914.3 316.8M921.8 328.5L910.5 336.2M909.5 324.3L896.5 329.4M994.5 314.7L988.5 317.5M965.3 301.4L955.4 307.8M892.6 314.6L886.3 317.0M905.6 310.0L898.3 313.2M974.4 314.6L965.9 319.6" stroke="#444" stroke-width="1" fill="none" stroke-linecap="round"/><path d="M984.9 323.8L974.2 326.6M881.6 320.9L870.9 322.9M992.0 310.1L985.7 313.9M985.4 303.5L976.9 307.3M968.9 312.5L961.5 317.6M870.5 324.2L861.9 328.9M943.2 301.4L935.2 306.6M936.0 309.9L928.0 315.0M928.9 309.1L919.4 315.1M978.1 324.0L969.1 325.3M937.2 314.1L926.6 318.9M974.3 290.7L969.0 291.7M944.2 302.3L933.3 305.4M924.9 328.2L917.0 333.8M959.6 289.4L954.4 292.3M946.0 301.5L941.4 304.7M875.1 313.4L870.7 316.7M946.7 314.6L940.5 318.6M888.2 316.2L878.9 318.1M870.2 320.8L860.5 325.3M985.4 301.2L978.9 304.4M903.3 332.5L897.8 334.9M936.2 317.8L929.8 321.0M848.0 322.0L840.4 323.5M977.3 307.0L968.2 312.2M988.2 289.3L981.0 290.8M963.9 301.0L956.5 302.1M971.2 285.2L965.4 289.0M862.7 329.0L854.9 334.8M876.8 314.5L869.9 318.4M902.1 315.1L895.2 317.2M937.5 325.5L928.5 330.3M945.5 333.4L938.4 336.4M940.6 316.6L931.2 319.7M949.2 315.3L939.4 317.9M943.3 314.7L937.2 317.7M921.2 301.8L915.2 304.4M984.9 291.5L976.1 293.3M999.5 322.4L993.6 326.4M954.0 313.5L945.0 316.4M861.6 324.9L854.1 327.9M993.8 310.4L984.0 313.5M850.9 328.6L841.8 331.0M956.4 334.4L950.2 338.1M909.7 311.5L903.5 314.5M970.0 294.7L960.1 298.3M935.2 313.2L926.4 319.6M980.2 316.6L974.7 320.3M973.9 323.7L963.6 328.3M855.3 324.8L846.5 328.1" stroke="#1c1c1c" stroke-width="1.2" fill="none" stroke-linecap="round"/><path d="M905.0 303.0L929.0 299.9L970.2 284.9L990.0 282.0L998.0 292.0L975.0 297.0L940.0 306.0z" fill="#0a0a0a" /><path d="M845.0 324.0C849.2 323.7 863.3 324.0 870.0 322.0C876.7 320.0 880.5 314.2 885.0 312.0C889.5 309.8 895.0 309.5 897.0 309.0" fill="none" stroke="#1e1e1e" stroke-width="2.2" stroke-linejoin="round" stroke-linecap="round" /><path d="M850.0 333.0C855.0 332.2 873.0 327.8 880.0 328.0C887.0 328.2 886.2 333.5 892.0 334.0C897.8 334.5 906.2 332.3 915.0 331.0C923.8 329.7 940.0 326.8 945.0 326.0" fill="none" stroke="#1e1e1e" stroke-width="2.2" stroke-linejoin="round" stroke-linecap="round" /><path d="M914.0 323.0C914.8 325.0 916.3 332.0 919.0 335.0C921.7 338.0 928.2 340.0 930.0 341.0" fill="none" stroke="#1e1e1e" stroke-width="2.2" stroke-linejoin="round" stroke-linecap="round" /><path d="M948.0 328.0C948.3 329.7 949.2 335.2 950.0 338.0C950.8 340.8 952.5 343.8 953.0 345.0" fill="none" stroke="#1e1e1e" stroke-width="2.2" stroke-linejoin="round" stroke-linecap="round" /><path d="M890.0 315.0C892.5 315.8 899.2 319.8 905.0 320.0C910.8 320.2 919.5 317.3 925.0 316.0C930.5 314.7 935.8 312.7 938.0 312.0" fill="none" stroke="#1e1e1e" stroke-width="2.2" stroke-linejoin="round" stroke-linecap="round" /><path d="M700.0 378.0L774.6 359.6L869.3 348.4L914.1 337.2L949.0 343.0L949.0 347.2L925.3 357.1L879.3 359.6L779.6 369.6L705.0 386.0z" fill="#808080" stroke="#000" stroke-width="2.4" stroke-linejoin="round" stroke-linecap="round" /><path d="M741.1 371.1L731.9 372.7M897.6 349.1L891.8 351.5M915.6 349.3L908.2 350.0M905.9 347.7L893.7 348.0M812.4 356.5L803.7 356.5M823.5 361.6L812.5 364.0M755.3 367.2L745.2 369.4M786.3 366.7L780.0 368.9M716.3 377.1L707.8 377.9M918.2 345.8L907.7 350.9M908.4 340.5L900.9 343.4M806.1 365.9L798.0 366.4M925.5 344.4L919.5 347.3M834.1 353.6L826.8 355.4M715.8 374.7L705.7 379.0M763.0 371.4L757.0 373.5M924.3 352.2L914.7 354.5M936.1 342.7L926.7 344.5M715.9 377.1L707.4 377.1M718.3 377.1L709.2 378.1M860.5 359.2L852.0 361.3M761.5 371.8L750.5 372.7M796.0 361.4L783.4 363.6M796.1 367.5L783.4 368.5M875.3 347.9L865.3 351.2M869.7 350.5L861.5 350.7M738.2 370.7L728.8 374.6M874.4 349.5L865.7 354.1M720.0 381.2L708.8 382.5M854.5 360.6L846.1 361.4M774.2 368.1L767.7 368.4M719.5 377.7L713.7 380.1M787.7 363.6L780.6 364.8M787.6 367.5L776.5 369.6M919.5 347.9L909.7 347.9M902.9 355.4L897.3 357.9M862.0 350.1L853.7 352.5M824.5 360.2L814.5 363.2M931.1 347.5L918.9 348.4M907.0 350.7L899.0 351.9M754.2 370.9L744.3 374.3M810.5 362.0L801.9 362.1M813.8 362.7L803.1 366.9M741.1 376.4L733.2 379.0M750.6 371.6L744.2 373.0M760.4 366.8L753.7 370.0M930.6 341.8L919.2 341.9M856.3 360.7L847.9 362.5M916.2 354.2L908.7 355.4M862.0 359.6L852.4 360.8M910.7 345.0L899.4 346.7M918.9 349.8L910.6 349.8M855.9 351.1L845.0 355.2M855.7 353.0L843.9 354.7M900.0 346.3L890.3 348.3M931.2 352.8L924.2 355.5M881.6 349.7L873.9 352.4M895.3 347.0L882.7 349.3M730.0 376.6L723.9 377.4M715.6 383.6L706.5 383.7M843.0 355.4L834.3 357.1M890.2 348.8L879.0 354.3M787.8 363.8L778.9 367.9M870.8 353.1L859.8 355.2M765.8 370.2L756.1 370.3M925.4 342.5L917.6 343.6M941.1 347.8L930.5 350.2M827.1 364.6L815.6 364.7M868.1 350.5L859.1 351.8M881.1 357.3L868.4 358.8" stroke="#333" stroke-width="1.1" fill="none" stroke-linecap="round"/><path d="M914.1 337.2C915.2 339.0 919.1 344.7 921.0 348.0C922.9 351.3 924.6 355.6 925.3 357.1" fill="none" stroke="#000" stroke-width="1.8" stroke-linejoin="round" stroke-linecap="round" /><path d="M745.0 366.0L770.0 352.0L809.5 350.9L839.4 342.2L845.0 347.0L774.6 359.6L720.0 376.0z" fill="#141414" /><path d="M696.2 377.0C698.9 374.9 702.6 372.0 712.4 372.0C722.1 372.0 735.2 376.8 754.7 377.0C774.2 377.2 805.1 375.1 829.4 373.3C853.7 371.6 890.5 365.4 900.4 366.5C910.3 367.6 893.7 376.2 889.0 380.0C884.3 383.8 877.8 386.4 872.0 389.0C866.2 391.6 865.6 392.5 854.4 395.5C843.1 398.5 819.0 405.1 804.5 407.0C790.0 408.9 781.7 408.7 767.2 407.0C752.7 405.3 729.2 400.8 717.4 397.0C705.6 393.2 699.7 387.8 696.2 384.5C692.7 381.2 693.5 379.1 696.2 377.0z" fill="#858585" stroke="#000" stroke-width="2.8" stroke-linejoin="round" stroke-linecap="round" /><path d="M700.0 377.0C699.6 375.5 703.3 372.8 712.4 373.0C721.5 373.2 735.2 377.8 754.7 378.0C774.2 378.2 805.7 375.7 829.4 374.0C853.1 372.3 891.9 366.8 897.0 368.0C902.1 369.2 871.3 379.0 860.0 381.0C848.7 383.0 846.9 379.2 829.4 380.0C811.9 380.8 773.8 385.2 754.7 385.5C735.6 385.8 724.1 383.4 715.0 382.0C705.9 380.6 700.4 378.5 700.0 377.0z" fill="#1c1c1c" /><path d="M733.2 386.8L724.0 388.3M860.1 389.3L851.1 389.4M827.5 385.1L816.3 385.7M755.9 388.4L744.9 389.1M825.7 398.1L812.6 403.0M756.2 402.0L744.6 402.1M820.2 388.3L810.6 393.1M791.1 395.9L779.9 399.2M865.0 391.1L854.4 394.4M753.5 397.7L743.8 399.9M821.2 396.1L808.3 402.3M764.0 393.9L750.8 397.9M772.1 386.2L764.2 386.6M798.4 392.0L789.5 395.0M734.4 384.9L722.0 387.7M816.5 388.6L809.5 389.6M773.9 403.0L763.8 403.4M852.4 395.5L841.6 398.0M785.1 400.7L776.0 402.3M814.2 391.8L803.3 396.5M778.2 390.2L765.7 396.6M763.4 386.7L755.5 389.9M855.9 388.2L849.0 390.7M784.6 388.8L773.0 392.6M852.8 384.8L843.2 388.7M768.8 401.3L758.8 402.6M744.8 389.3L738.2 391.8M819.8 387.6L808.3 388.2M808.7 385.0L802.0 386.6M837.9 384.1L824.0 386.6M852.3 389.4L844.9 391.1M761.6 403.9L755.0 404.4M768.4 398.7L756.6 403.7M750.0 387.7L739.5 388.4M773.0 404.1L763.5 405.2M818.0 388.5L811.6 391.3M768.3 389.4L754.7 392.7M823.6 402.6L816.2 403.1M812.0 401.0L798.7 405.5M817.4 391.4L809.5 394.3M753.7 384.5L746.7 387.0M780.1 391.6L770.7 395.7M774.7 392.1L765.7 392.9M797.4 404.2L787.9 404.3M792.5 389.0L784.9 392.5M755.9 387.2L743.2 393.6M847.6 386.6L835.3 389.8M790.8 385.6L781.8 388.6M782.6 398.5L772.0 403.9M765.0 390.6L758.6 394.0M727.8 394.4L719.6 395.3M785.0 398.6L778.4 399.8M754.6 389.5L741.0 391.5M760.7 393.2L753.0 394.8M840.9 389.2L829.3 391.8M803.1 397.8L793.0 401.8M804.5 389.2L797.2 391.4M832.5 385.1L823.7 386.7M839.9 386.9L827.9 388.7M742.0 387.0L730.9 390.5" stroke="#5a5a5a" stroke-width="1" fill="none" stroke-linecap="round"/><path d="M783.2 401.1L776.7 401.4M753.3 391.6L746.5 393.2M746.1 397.2L740.0 399.2M770.5 394.6L760.3 396.3M787.4 390.5L778.8 391.5M751.5 395.9L745.2 398.1M742.7 396.9L733.7 398.7M757.8 387.3L750.2 390.5M773.4 387.5L767.4 390.3M751.6 398.8L743.4 401.5M726.0 389.5L716.2 390.5M723.3 385.9L712.4 387.0M774.6 388.3L762.4 391.0M761.8 401.5L749.3 402.7M787.7 390.8L781.7 393.3M741.9 387.5L729.3 387.9M719.4 385.9L712.4 387.5M781.1 392.0L769.5 395.9M773.2 400.1L764.4 401.4M762.4 398.9L754.8 400.2M726.6 391.4L716.7 392.4M729.9 394.1L722.2 394.6M785.6 385.4L776.1 387.5M764.7 384.1L753.7 387.5M738.0 385.5L728.8 386.8" stroke="#2a2a2a" stroke-width="1" fill="none" stroke-linecap="round"/><path d="M927.8 373.3L949.0 354.6L977.0 324.5L992.0 329.5L976.4 354.6L970.2 373.3L949.0 378.3z" fill="#8c8c8c" stroke="#000" stroke-width="2.8" stroke-linejoin="round" stroke-linecap="round" /><path d="M941.6 362.2L937.1 370.0M939.1 363.9L932.3 370.0M956.5 371.6L952.0 374.6M974.3 351.3L968.4 359.5M980.6 337.6L976.7 342.8M962.5 347.6L954.6 353.6M949.0 372.9L946.3 377.6M969.9 368.4L961.9 374.9M981.6 342.8L974.1 349.4M958.8 362.2L954.2 365.3M975.9 355.5L971.2 362.4M945.7 360.9L940.6 365.8M977.7 349.4L971.5 356.5M964.5 350.9L959.5 354.6M956.9 366.7L952.0 375.8M962.3 357.7L957.9 363.1M971.5 350.1L964.5 357.0M975.6 345.3L970.4 350.0M984.0 340.2L980.2 344.6M963.4 363.6L958.6 372.3M977.6 335.0L974.6 339.7M972.2 342.2L966.9 347.3M968.9 349.7L961.0 355.1M980.0 346.4L976.9 351.1M974.9 359.2L969.9 362.8" stroke="#666" stroke-width="1" fill="none" stroke-linecap="round"/><path d="M893.8 259.7C891.9 257.3 896.5 254.3 905.0 254.0C913.5 253.7 933.2 255.1 944.5 257.8C955.8 260.5 965.5 265.8 972.7 270.0C980.0 274.2 989.3 281.2 988.0 283.0C986.7 284.8 972.2 282.2 965.0 281.0C957.8 279.8 952.6 277.8 944.5 275.7C936.4 273.6 924.8 270.9 916.3 268.2C907.8 265.5 895.7 262.1 893.8 259.7z" fill="#454545" stroke="#000" stroke-width="2.4" stroke-linejoin="round" stroke-linecap="round" /><path d="M900.0 258.5C906.7 259.2 927.5 259.6 940.0 262.5C952.5 265.4 969.2 273.8 975.0 276.0" fill="none" stroke="#8a8a8a" stroke-width="1.6" stroke-linejoin="round" stroke-linecap="round" /><path d="M918.0 263.3L926.7 266.1M927.3 267.7L938.7 269.4M947.4 266.2L953.7 267.4M945.7 268.9L956.4 270.7M898.6 259.6L904.6 263.0M933.2 270.1L941.3 272.8M940.4 268.0L950.9 269.4M920.5 256.3L930.5 259.4M951.6 267.3L958.0 269.6M950.6 264.5L956.8 265.3M974.4 275.4L980.6 276.7M950.7 269.6L957.6 271.9M939.5 267.4L947.0 270.9M958.7 270.3L965.0 273.0M918.3 258.0L926.3 262.4M928.1 262.4L937.2 263.7M924.4 259.5L930.6 262.9M959.6 273.7L967.7 275.7M920.6 262.4L926.7 266.0M934.3 268.9L941.5 269.7M925.8 267.9L934.2 269.0M927.4 268.6L934.5 270.4M899.7 257.6L908.6 259.1M941.9 258.5L950.2 263.4M963.3 275.2L974.8 276.7M901.7 257.3L908.7 261.9M911.1 265.7L917.6 268.5M929.8 264.9L941.2 266.7M943.6 269.5L952.0 271.1M914.9 259.9L920.4 262.9M936.6 258.7L947.5 261.2M958.0 274.9L965.8 277.0M969.3 278.7L974.7 280.5M944.0 262.1L949.5 265.1M918.1 263.5L929.0 264.7M939.4 261.7L946.0 264.4M901.1 260.9L911.2 262.2M952.7 271.9L962.3 278.0M938.7 266.6L947.8 268.1M928.8 266.4L935.2 270.7" stroke="#111" stroke-width="1.1" fill="none" stroke-linecap="round"/><path d="M967.0 258.8L974.6 257.0L984.0 260.7L988.0 282.0L976.4 268.2z" fill="#505050" stroke="#000" stroke-width="2" stroke-linejoin="round" stroke-linecap="round" /><path d="M938.9 277.6C939.8 278.2 943.3 278.4 944.5 281.0C945.7 283.6 945.8 291.0 946.0 293.0" fill="none" stroke="#000" stroke-width="5" stroke-linejoin="round" stroke-linecap="round" /><path d="M940.0 279.0C940.8 279.7 943.7 280.8 944.5 283.0C945.3 285.2 944.9 290.5 945.0 292.0" fill="none" stroke="#777" stroke-width="1.6" stroke-linejoin="round" stroke-linecap="round" /><path d="M985.0 284.0L1000.0 306.0L1020.0 312.0L1030.0 318.0L1012.0 326.0L995.0 328.0L975.0 300.0z" fill="#6e6e6e" stroke="#000" stroke-width="2" stroke-linejoin="round" stroke-linecap="round" /><path d="M982.0 288.0C983.3 291.3 986.5 302.7 990.0 308.0C993.5 313.3 1000.8 318.0 1003.0 320.0" fill="none" stroke="#000" stroke-width="2" stroke-linejoin="round" stroke-linecap="round" /><path d="M990.0 286.0C991.3 289.2 994.3 300.0 998.0 305.0C1001.7 310.0 1009.7 314.2 1012.0 316.0" fill="none" stroke="#000" stroke-width="1.6" stroke-linejoin="round" stroke-linecap="round" /><path d="M987.1 310.4L991.5 315.7M995.7 320.4L1000.6 326.3M991.8 307.9L994.2 310.9M1006.3 319.9L1007.9 325.0M999.1 306.8L1001.6 309.8M1005.4 315.4L1008.8 319.5M996.0 318.4L996.9 322.3M994.8 304.7L996.6 307.9M1001.7 309.6L1002.9 313.2M991.8 302.8L994.5 306.2M997.7 319.5L999.8 324.9M1011.3 316.2L1012.2 319.9M983.8 294.7L986.8 298.4M1009.6 313.9L1012.6 320.2M978.9 305.3L983.0 310.6M987.1 291.4L989.5 294.2M990.1 292.6L993.2 298.9M989.8 318.3L993.3 323.6M987.9 295.1L990.2 301.2M996.5 312.2L999.0 318.5M1019.8 312.6L1022.7 317.4M990.4 314.4L993.6 319.4M988.6 316.5L990.3 320.6M977.7 295.9L979.5 300.2M977.8 297.3L980.6 303.9M976.9 298.9L978.7 303.9M995.6 316.5L998.3 320.9M995.1 308.5L997.4 314.8M984.6 290.3L987.7 296.6M978.9 297.6L981.2 302.8" stroke="#1a1a1a" stroke-width="1.1" fill="none" stroke-linecap="round"/><path d="M1017.7 289.8L1083.5 277.6L1092.0 280.4L1092.0 302.0L1081.6 307.6L1025.3 318.9L1010.0 312.0L1005.0 300.0z" fill="#8a8a8a" stroke="#000" stroke-width="2.6" stroke-linejoin="round" stroke-linecap="round" /><path d="M1027.0 293.5L1074.0 286.0L1074.0 291.6L1029.0 300.0z" fill="#3e3632" stroke="#000" stroke-width="1.8" stroke-linejoin="round" stroke-linecap="round" /><path d="M1031.0 305.7L1076.0 298.2L1077.8 303.8L1032.8 312.3z" fill="#3e3632" stroke="#000" stroke-width="1.8" stroke-linejoin="round" stroke-linecap="round" /><path d="M1083.5 277.6C1083.2 280.0 1082.3 287.0 1082.0 292.0C1081.7 297.0 1081.7 305.0 1081.6 307.6" fill="none" stroke="#000" stroke-width="2" stroke-linejoin="round" stroke-linecap="round" /><path d="M1000.0 302.0L1018.0 290.0L1025.0 318.0L1008.0 316.0z" fill="#6a6a6a" stroke="#000" stroke-width="1.6" stroke-linejoin="round" stroke-linecap="round" /><path d="M1016.2 309.6L1016.8 314.0M1008.3 300.4L1009.3 304.7M1006.3 307.1L1009.1 312.8M1017.6 304.7L1020.4 309.1M1013.3 294.8L1014.5 299.3M1019.5 299.7L1021.2 304.7M1007.7 302.3L1008.8 307.2M1009.0 311.9L1011.6 316.3M1012.9 304.5L1016.4 310.3M1006.4 305.6L1007.7 310.2M1011.6 304.4L1014.0 311.4M1007.4 307.2L1010.6 312.2M1010.3 302.9L1014.5 308.9M1021.1 310.8L1022.5 315.1M1008.2 300.7L1009.1 305.7M1003.4 302.9L1004.3 306.9M1007.8 303.1L1008.9 308.4M1015.2 292.2L1017.1 296.7M1003.2 301.2L1007.2 307.5M1004.1 305.3L1005.1 308.8" stroke="#1a1a1a" stroke-width="1.1" fill="none" stroke-linecap="round"/><path d="M1084.9 282.4L1087.8 282.5M1085.1 291.1L1088.1 290.9M1087.1 300.9L1090.0 300.4M1084.2 285.2L1089.3 284.2M1086.5 304.7L1091.4 303.8M1088.1 297.0L1091.2 297.2M1085.9 296.7L1088.3 296.2M1090.2 295.5L1094.0 295.0" stroke="#222" stroke-width="1.1" fill="none" stroke-linecap="round"/><path d="M1028.0 255.0L1034.6 257.0L1037.0 283.2L1019.6 288.0z" fill="#3c3c3c" stroke="#000" stroke-width="1.6" stroke-linejoin="round" stroke-linecap="round" /><path d="M987.7 274.0L991.5 242.7L1004.6 210.8L1012.1 177.0L1019.6 146.0L1025.3 144.0L1030.9 150.7L1030.9 167.6L1028.0 190.0L1029.0 192.0L1040.3 173.2L1049.7 154.4L1054.4 152.5L1060.0 160.0L1058.0 174.0L1064.7 166.6L1069.4 173.2L1066.6 186.3L1055.3 208.9L1045.9 229.5L1066.6 212.6L1078.8 202.3L1082.5 204.2L1080.7 210.8L1066.6 227.7L1049.7 244.6L1042.2 261.5L1038.4 281.3L1036.0 283.0L1034.6 257.0L1028.0 255.0L1025.3 270.0L1017.7 288.8L999.0 305.7L991.5 292.6L987.7 268.0z" fill="#fdebd8" stroke="#000" stroke-width="2.4" stroke-linejoin="round" stroke-linecap="round" /><path d="M995.2 242.7C996.8 239.9 1001.2 233.8 1005.0 226.0C1008.8 218.2 1014.6 201.2 1017.7 195.7C1020.8 190.2 1021.7 192.7 1023.4 193.0C1025.1 193.3 1027.7 193.1 1028.0 197.6C1028.3 202.1 1025.5 211.9 1025.3 220.0C1025.1 228.1 1026.6 240.4 1027.1 246.4C1027.5 252.4 1027.8 254.4 1028.0 256.0" fill="none" stroke="#000" stroke-width="2.2" stroke-linejoin="round" stroke-linecap="round" /><path d="M1018.7 194.8C1019.5 192.7 1022.3 193.3 1023.5 194.0C1024.7 194.7 1025.8 196.8 1026.0 199.0C1026.2 201.2 1026.2 205.8 1025.0 207.0C1023.8 208.2 1020.0 208.5 1019.0 206.5C1018.0 204.5 1018.0 196.9 1018.7 194.8z" fill="#dcdcdc" stroke="#000" stroke-width="1.2" stroke-linejoin="round" stroke-linecap="round" /><path d="M1057.0 176.0C1055.8 178.7 1052.8 186.0 1050.0 192.0C1047.2 198.0 1042.5 206.0 1040.0 212.0C1037.5 218.0 1035.8 225.3 1035.0 228.0" fill="none" stroke="#000" stroke-width="2" stroke-linejoin="round" stroke-linecap="round" /><path d="M1040.3 173.2C1039.2 175.0 1035.9 180.9 1034.0 184.0C1032.1 187.1 1029.8 190.7 1029.0 192.0" fill="none" stroke="#000" stroke-width="2" stroke-linejoin="round" stroke-linecap="round" /><path d="M1022.0 169.0L1029.0 170.0" fill="none" stroke="#000" stroke-width="1.2" stroke-linejoin="round" stroke-linecap="round" /><path d="M1043.0 182.0L1048.0 185.0" fill="none" stroke="#000" stroke-width="1.2" stroke-linejoin="round" stroke-linecap="round" /><path d="M1056.0 190.0L1061.0 192.0" fill="none" stroke="#000" stroke-width="1.2" stroke-linejoin="round" stroke-linecap="round" /><path d="M1039.0 196.0L1045.0 199.0" fill="none" stroke="#000" stroke-width="1.2" stroke-linejoin="round" stroke-linecap="round" /><path d="M1030.0 233.0L1033.0 236.0" fill="none" stroke="#000" stroke-width="1.2" stroke-linejoin="round" stroke-linecap="round" /><path d="M1035.0 240.0L1042.0 258.0" fill="none" stroke="#000" stroke-width="1.2" stroke-linejoin="round" stroke-linecap="round" /><path d="M1070.0 215.0L1073.0 218.0" fill="none" stroke="#000" stroke-width="1.2" stroke-linejoin="round" stroke-linecap="round" /><path d="M991.0 268.0l6-2" fill="none" stroke="#444" stroke-width="1" stroke-linejoin="round" stroke-linecap="round" /><path d="M992.5 262.0l6-2" fill="none" stroke="#444" stroke-width="1" stroke-linejoin="round" stroke-linecap="round" /><path d="M994.0 256.0l6-2" fill="none" stroke="#444" stroke-width="1" stroke-linejoin="round" stroke-linecap="round" /><path d="M995.5 250.0l6-2" fill="none" stroke="#444" stroke-width="1" stroke-linejoin="round" stroke-linecap="round" /><path d="M997.0 244.0l6-2" fill="none" stroke="#444" stroke-width="1" stroke-linejoin="round" stroke-linecap="round" /><path d="M998.5 238.0l6-2" fill="none" stroke="#444" stroke-width="1" stroke-linejoin="round" stroke-linecap="round" /><path d="M1000.0 232.0l6-2" fill="none" stroke="#444" stroke-width="1" stroke-linejoin="round" stroke-linecap="round" /><path d="M1001.5 226.0l6-2" fill="none" stroke="#444" stroke-width="1" stroke-linejoin="round" stroke-linecap="round" /><path d="M1003.0 220.0l6-2" fill="none" stroke="#444" stroke-width="1" stroke-linejoin="round" stroke-linecap="round" /><path d="M1002.7 313.2C1005.2 312.3 1017.8 314.5 1025.3 317.0C1032.8 319.5 1044.7 325.8 1047.8 328.3C1050.9 330.8 1047.8 331.7 1044.0 332.0C1040.2 332.3 1030.9 331.6 1025.3 330.0C1019.7 328.4 1014.0 325.4 1010.2 322.6C1006.4 319.8 1000.2 314.1 1002.7 313.2z" fill="#fdebd8" stroke="#000" stroke-width="2.2" stroke-linejoin="round" stroke-linecap="round" /></svg>
<svg style="left:1104px;top:48px;" width="261" height="21" viewBox="0 0 261 21"><path d="M7.500 6l-4 4l4 4M11.500 6l-4 4l4 4M19.500 4v12M21.500 4v12M23.500 4v12" stroke="#8a8a8a" stroke-width="1" fill="none"/><path d="M227.500 6l4 4l-4 4M250.500 6l4 4l-4 4M254.500 6l4 4l-4 4" stroke="#8a8a8a" stroke-width="1" fill="none"/></svg>
<div class="navigator" style="left:1120px;top:69px;width:245px;height:173px;background:#505050;"></div>
<div style="left:1120px;top:69px;width:245px;height:22px;background:#404040;"></div>
<div style="left:1120px;top:69px;width:19px;height:17px;background:#404040;"><svg style="left:6px;top:6px;" width="8" height="8" viewBox="0 0 8 8"><path d="M0 .5h7M0 3.500h7M0 6.500h7" stroke="#8e8e8e" stroke-width="1" fill="none"/></svg>
</div>
<div style="left:1139px;top:72px;width:73px;height:19px;background:#505050;"></div>
<div style="left:1213px;top:72px;width:29px;height:13px;background:#4c4c4c;"></div>
<div style="left:1243px;top:72px;width:29px;height:13px;background:#4c4c4c;"></div>
<div style="left:1273px;top:72px;width:29px;height:13px;background:#4c4c4c;"></div>
<div style="left:1120px;top:86px;width:245px;height:5px;background:#505050;"></div>
<svg style="left:1139px;top:72px;overflow:hidden;height:13px" width="170" height="14" viewBox="0 0 170 14"><rect x="82.500" y="3.500" width="12.500" height="12" stroke="#747474" fill="none" stroke-width="1.200"/><path d="M84.500 4v10M84.500 13l3-1.500l2 .500l3-3l2 1.500v3z" stroke="#747474" fill="#747474" stroke-width=".800"/><path d="M115.500 14a7 7 0 0 1 14 0M117 10.500h11M117.500 10.500v3M127.500 10.500v3" stroke="#747474" stroke-width="1.200" fill="none"/><circle cx="153.500" cy="11" r="7" stroke="#747474" stroke-width="1.200" fill="none"/><path d="M153.500 9.500v5" stroke="#747474" stroke-width="1.600"/><circle cx="153.500" cy="7" r="1.100" fill="#747474"/></svg>
<svg style="left:1139px;top:72px;" width="30" height="19" viewBox="0 0 30 19"><rect x="7.500" y="6.500" width="11" height="9" rx="1.500" stroke="#b4b4b4" fill="none" stroke-width="1.100"/><rect x="9.500" y="4.500" width="11" height="8.500" rx="1.500" stroke="#b4b4b4" fill="#8a8a8a" stroke-width="1.100"/></svg>
<span style="left:1167.5px;top:77.3px;font-size:11.5px;color:#d0d0d0;transform:scaleX(0.833);transform-origin:0 0;">Navigator</span>
<div style="left:1120px;top:91px;width:245px;height:107px;background:#2d2d2d;"></div>
<div style="left:1203px;top:92px;width:79px;height:105px;background:#fff;"></div>
<svg style="left:0;top:0" width="1365" height="200" viewBox="0 0 1365 200"><path d="M1223.4 124.1L1216.5 127.6L1211.1 130.2L1210.1 131.6L1211.9 132.5L1217.2 129.9L1223.7 126.7z" fill="#f2d9c4" stroke="#2a2a2a" stroke-width=".500"/><path d="M1209.9 130.5L1211.9 129.9L1212.8 131.9L1210.8 132.8z" fill="#555"/><path d="M1232.6 121.0L1236.9 121.9L1236.6 124.4L1233.5 125.3z" fill="#f2d9c4"/><path d="M1236.3 121.9L1243.8 119.4L1252.4 116.7L1253.5 118.1L1244.5 121.6L1236.9 124.4z" fill="#555" stroke="#2a2a2a" stroke-width=".400"/><path d="M1252.7 116.1L1254.1 113.2L1256.4 113.0L1257.0 115.8L1255.0 118.4L1253.2 118.1z" fill="#f2d9c4" stroke="#2a2a2a" stroke-width=".400"/><path d="M1223.0 123.9L1227.3 121.6L1232.6 120.7L1234.3 127.0L1233.2 130.5L1226.9 131.9L1225.7 127.6z" fill="#3c3c3c"/><path d="M1228.3 115.5L1231.7 115.8L1232.6 118.7L1231.2 121.0L1229.1 120.7L1228.3 118.7z" fill="#f2d9c4" stroke="#2a2a2a" stroke-width=".400"/><path d="M1226.3 114.4L1228.3 113.0L1231.4 113.8L1232.6 116.4L1230.9 116.4L1229.4 118.1L1228.3 118.1L1227.1 116.7z" fill="#6e4a22"/><path d="M1226.9 131.9L1233.2 130.5L1234.3 133.8L1223.4 134.8z" fill="#f2d9c4"/><path d="M1223.0 134.5L1234.5 133.5L1239.5 143.1L1243.1 158.9L1245.5 172.5L1239.5 174.2L1235.9 161.7L1228.9 147.4L1226.0 158.9L1223.1 172.6L1218.4 171.5L1218.7 154.6L1220.1 143.1z" fill="#3c3c3c" stroke="#2a2a2a" stroke-width=".400"/><path d="M1219.1 171.8L1223.1 172.8L1222.8 175.8L1219.4 175.2z" fill="#f2d9c4"/><path d="M1240.1 174.4L1245.5 172.9L1245.5 177.8L1240.6 178.4z" fill="#f2d9c4"/><path d="M1207.2 179.2L1212.2 176.7L1216.5 173.2L1219.4 175.5L1222.5 176.1L1223.3 179.8L1215.1 182.0L1208.6 181.2z" fill="#27318c"/><path d="M1207.6 179.8L1213.7 179.2L1218.0 176.7L1222.5 176.7L1223.1 179.8L1215.1 181.8L1208.8 181.1z" fill="#fff" stroke="#27318c" stroke-width=".600"/><path d="M1209.3 178.7L1216.5 173.8L1218.8 175.8L1213.7 179.0z" fill="#27318c"/><path d="M1229.1 189.3L1233.7 184.7L1239.8 178.7L1244.6 177.5L1248.9 181.8L1251.8 189.0L1244.1 193.6L1233.7 194.3z" fill="#27318c"/><path d="M1229.4 189.6L1233.5 187.8L1238.0 190.4L1243.8 191.3L1251.2 187.6L1251.8 189.3L1244.1 193.6L1233.7 194.3z" fill="#fff" stroke="#27318c" stroke-width=".700"/><path d="M1245.2 181.8L1248.9 181.8L1251.2 187.8L1246.6 189.0L1244.9 184.7z" fill="#fff" stroke="#27318c" stroke-width=".600"/></svg>
<div style="left:1226px;top:111px;width:32px;height:22px;border:1.400px solid #f00000;"></div>
<div style="left:1125px;top:205.5px;width:90px;height:12px;background:#454545;border:1px solid #6e6e6e;"></div>
<svg style="left:1126px;top:206.5px;" width="88" height="10" viewBox="0 0 88 10"><path d="M8 10l80-9v9z" fill="#2f2f2f"/></svg>
<div style="left:1178.5px;top:201.0px;width:4px;height:20px;background:#5a5a5a;border:1px solid #8a8a8a;"></div>
<div style="left:1125px;top:225px;width:90px;height:12px;background:#454545;border:1px solid #6e6e6e;"></div>
<svg style="left:1126px;top:226px;" width="88" height="10" viewBox="0 0 88 10"><path d="M0 0c12 9 28 10 44 1c16 9 32 8 44 -1v10h-88z" fill="#2f2f2f"/></svg>
<div style="left:1168.5px;top:220.5px;width:4px;height:20px;background:#5a5a5a;border:1px solid #8a8a8a;"></div>
<span style="left:1232.5px;top:205.4px;font-size:12.5px;color:#e6e6e6;transform:scaleX(0.895);transform-origin:0 0;">126.0</span>
<span style="left:1245.5px;top:225.4px;font-size:12.5px;color:#e6e6e6;transform:scaleX(0.863);transform-origin:0 0;">0.0</span>
<svg style="left:0;top:0" width="1365" height="245" viewBox="0 0 1365 245"><circle cx="1271.500" cy="211.500" r="6.500" stroke="#d0d0d0" stroke-width="1.100" fill="none" stroke-linejoin="round" stroke-linecap="round"/><path d="M1267.500 211.500h8" stroke="#d0d0d0" stroke-width="1.100" fill="none" stroke-linejoin="round" stroke-linecap="round"/><circle cx="1291.500" cy="211.500" r="6.500" stroke="#d0d0d0" stroke-width="1.100" fill="none" stroke-linejoin="round" stroke-linecap="round"/><path d="M1287.500 211.500h8M1291.500 207.500v8" stroke="#d0d0d0" stroke-width="1.100" fill="none" stroke-linejoin="round" stroke-linecap="round"/><circle cx="1311.500" cy="211.500" r="6.500" stroke="#d0d0d0" stroke-width="1.100" fill="none" stroke-linejoin="round" stroke-linecap="round"/><rect x="1308" y="208" width="7" height="7" rx="1" fill="#d0d0d0"/><path d="M1323.500 204v15M1323.500 224v15" stroke="#707070"/><rect x="1328.500" y="205.500" width="8" height="8" stroke="#d0d0d0" stroke-width="1.100" fill="none" stroke-linejoin="round" stroke-linecap="round"/><rect x="1333.500" y="210.500" width="8" height="8" fill="#505050" stroke="#d0d0d0" stroke-width="1.100"  stroke-linejoin="round" stroke-linecap="round"/><path d="M1330.500 207.500l8 8M1335.500 215.500h3v-3M1330.500 210.500v-3h3" stroke="#d0d0d0" stroke-width="1.100" fill="none" stroke-linejoin="round" stroke-linecap="round"/><rect x="1349.500" y="205.500" width="11" height="11" stroke="#d0d0d0" stroke-width="1.100" fill="none" stroke-linejoin="round" stroke-linecap="round"/><path d="M1352 208l6 6M1355 214h3v-3M1352 211v-3h3" stroke="#d0d0d0" stroke-width="1.100" fill="none" stroke-linejoin="round" stroke-linecap="round"/><path d="M1267 226.500a5.500 5.500 0 1 1 -1 7" stroke="#d0d0d0" stroke-width="1.100" fill="none" stroke-linejoin="round" stroke-linecap="round"/><path d="M1264.500 229l1.500 4l3.500-2.500z" fill="#d0d0d0"/><path d="M1295 226.500a5.500 5.500 0 1 0 1 7" stroke="#d0d0d0" stroke-width="1.100" fill="none" stroke-linejoin="round" stroke-linecap="round"/><path d="M1298 229l-1.500 4l-3.500-2.500z" fill="#d0d0d0"/><path d="M1307 226a6.500 6.500 0 1 0 4.500 -1.800v3.500" stroke="#d0d0d0" stroke-width="1.100" fill="none" stroke-linejoin="round" stroke-linecap="round"/><circle cx="1311.500" cy="231" r="1.700" fill="#d0d0d0"/><path d="M1328.500 227v9l6-4.500z" stroke="#d0d0d0" stroke-width="1.100" fill="none" stroke-linejoin="round" stroke-linecap="round"/><path d="M1335.500 224v15" stroke="#d0d0d0" stroke-width="1.100" fill="none" stroke-linejoin="round" stroke-linecap="round"/><path d="M1342.500 227v9l-6-4.500z" fill="#d0d0d0" stroke="#d0d0d0" stroke-width="1.100"  stroke-linejoin="round" stroke-linecap="round"/><path d="M1350.500 224.500h9l-4.500 5z" fill="#d0d0d0" stroke="#d0d0d0" stroke-width="1.100"  stroke-linejoin="round" stroke-linecap="round"/><path d="M1348 231.500h14" stroke="#d0d0d0" stroke-width="1.100" fill="none" stroke-linejoin="round" stroke-linecap="round"/><path d="M1350.500 238.500h9l-4.500-5z" stroke="#d0d0d0" stroke-width="1.100" fill="none" stroke-linejoin="round" stroke-linecap="round"/></svg>
<div class="layerproperty" style="left:1120px;top:243px;width:245px;height:171px;background:#404040;"></div>
<div style="left:1352px;top:265px;width:13px;height:149px;background:#3c3c3c;"></div>
<div style="left:1120px;top:243px;width:245px;height:22px;background:#404040;"></div>
<div style="left:1120px;top:243px;width:19px;height:17px;background:#404040;"><svg style="left:6px;top:6px;" width="8" height="8" viewBox="0 0 8 8"><path d="M0 .5h7M0 3.500h7M0 6.500h7" stroke="#8e8e8e" stroke-width="1" fill="none"/></svg>
</div>
<div style="left:1139px;top:246px;width:93px;height:19px;background:#505050;"></div>
<div style="left:1233px;top:246px;width:29px;height:13px;background:#4c4c4c;"></div>
<div style="left:1263px;top:246px;width:29px;height:13px;background:#4c4c4c;"></div>
<div style="left:1293px;top:246px;width:29px;height:13px;background:#4c4c4c;"></div>
<div style="left:1323px;top:246px;width:29px;height:13px;background:#4c4c4c;"></div>
<div style="left:1120px;top:260px;width:245px;height:5px;background:#505050;"></div>
<svg style="left:1139px;top:246px;" width="30" height="19" viewBox="0 0 30 19"><path d="M7.500 6.500l6.500-3.500l6.500 3.500l-6.500 3.500zM7.500 9.500l6.500 3.500l3-1.500M7.500 12.500l6.500 3.500l1.500-.800" stroke="#b4b4b4" stroke-width="1.100" fill="none" stroke-linejoin="round"/><g fill="#b4b4b4"><circle cx="17.500" cy="13" r="1.200"/><circle cx="20.500" cy="13" r="1.200"/></g><path d="M16.500 15.500l2 2M18.500 15.500l-2 2" stroke="#b4b4b4" stroke-width=".800"/><rect x="19.500" y="15.500" width="2" height="2" stroke="#b4b4b4" stroke-width=".800" fill="none"/></svg>
<span style="left:1167.5px;top:250.8px;font-size:11.5px;color:#d0d0d0;transform:scaleX(0.796);transform-origin:0 0;">Layer Property</span>
<svg style="left:1233px;top:246px;overflow:hidden;height:13px" width="120" height="13" viewBox="0 0 120 13"><path d="M8.500 8l6.500-3.500l6.500 3.500l-6.500 3.500zM8.500 11l6.500 3.500l6.500-3.500" stroke="#747474" stroke-width="1.200" fill="none" stroke-linejoin="round"/><path d="M11 4c2-2.500 6-2.500 8 0" stroke="#747474" stroke-width="1.200" fill="none" stroke-linejoin="round"/><circle cx="46" cy="10" r="5.500" stroke="#747474" stroke-width="1.200" fill="none" stroke-linejoin="round"/><path d="M40 14l4-4a4 4 0 0 0 4 4z" fill="#747474"/><rect x="68.500" y="4.500" width="13" height="11" stroke="#747474" stroke-width="1.200" fill="none" stroke-linejoin="round"/><rect x="71" y="7" width="4" height="3" fill="#747474"/><path d="M71 12.500h8" stroke="#747474" stroke-width="1.200" fill="none" stroke-linejoin="round"/><rect x="98.500" y="4.500" width="13" height="11" stroke="#747474" stroke-width="1.200" fill="none" stroke-linejoin="round"/><circle cx="104" cy="9" r="2.200" fill="#747474"/><path d="M100 15c0-4 8-4 8 0z" fill="#747474"/></svg>
<div style="left:1125px;top:274.5px;width:4px;height:1px;background:#8a8a8a;"></div>
<div style="left:1159px;top:274.5px;width:189px;height:1px;background:#8a8a8a;"></div>
<span style="left:1130.5px;top:268.8px;font-size:12px;color:#e6e6e6;transform:scaleX(0.870);transform-origin:0 0;">Effect</span>
<div style="left:1247px;top:282px;width:102px;height:20px;background:#505050;border:1px solid #6e6e6e;border-radius:2px;"></div>
<svg style="left:1247px;top:282px;" width="102" height="20" viewBox="0 0 102 20"><circle cx="11" cy="10" r="6.500" stroke="#d0d0d0" stroke-width="1.100" fill="none"/><circle cx="34.500" cy="9" r="5.500" stroke="#d0d0d0" stroke-width="1.100" fill="none"/><circle cx="31" cy="11.500" r="5.500" fill="#808080"/><path d="M29.800 8.200a5.500 5.500 0 0 1 8 6" stroke="#d0d0d0" stroke-width="1.100" fill="none"/><rect x="49" y="4.5" width="1.600" height="1.600" fill="#d0d0d0"/><rect x="49" y="10.5" width="1.600" height="1.600" fill="#d0d0d0"/><rect x="49" y="16.5" width="1.600" height="1.600" fill="#d0d0d0"/><rect x="52" y="7.5" width="1.600" height="1.600" fill="#d0d0d0"/><rect x="52" y="13.5" width="1.600" height="1.600" fill="#d0d0d0"/><rect x="55" y="4.5" width="1.600" height="1.600" fill="#d0d0d0"/><rect x="55" y="10.5" width="1.600" height="1.600" fill="#d0d0d0"/><rect x="55" y="16.5" width="1.600" height="1.600" fill="#d0d0d0"/><rect x="58" y="7.5" width="1.600" height="1.600" fill="#d0d0d0"/><rect x="58" y="13.5" width="1.600" height="1.600" fill="#d0d0d0"/><rect x="61" y="4.5" width="1.600" height="1.600" fill="#d0d0d0"/><rect x="61" y="10.5" width="1.600" height="1.600" fill="#d0d0d0"/><rect x="61" y="16.5" width="1.600" height="1.600" fill="#d0d0d0"/><rect x="70.500" y="4.500" width="9" height="9" rx="1.500" fill="#8a8a8a" stroke="#d0d0d0" stroke-width="1.100"/><path d="M82.500 8v6.500a1.500 1.500 0 0 1-1.500 1.500h-6.500" stroke="#d0d0d0" stroke-width="1.100" fill="none"/><path d="M90.500 8.500l3.500 3.500l3.500-3.500" stroke="#d0d0d0" stroke-width="1.300" fill="none"/></svg>
<div style="left:1125px;top:311.5px;width:4px;height:1px;background:#8a8a8a;"></div>
<div style="left:1208px;top:311.5px;width:140px;height:1px;background:#8a8a8a;"></div>
<span style="left:1130.5px;top:305.8px;font-size:12px;color:#e6e6e6;transform:scaleX(0.857);transform-origin:0 0;">Expression color</span>
<div style="left:1137px;top:322px;width:160px;height:20px;background:#505050;border:1px solid #6e6e6e;border-radius:2px;"></div>
<svg style="left:1137px;top:322px;" width="160" height="20" viewBox="0 0 160 20"><circle cx="60" cy="7" r="4" fill="#e05050"/><circle cx="56.500" cy="12.500" r="4" fill="#50c050"/><circle cx="63.500" cy="12.500" r="4" fill="#4a86e0"/><path d="M147.500 8l4 4l4-4" stroke="#d8d8d8" stroke-width="1.300" fill="none"/></svg>
<span style="left:1208.5px;top:326.3px;font-size:12px;color:#e6e6e6;transform:scaleX(0.854);transform-origin:0 0;">Color</span>
<div class="layerpanel" style="left:1120px;top:417px;width:245px;height:350px;background:#404040;"></div>
<div style="left:1120px;top:417px;width:245px;height:22px;background:#404040;"></div>
<div style="left:1120px;top:417px;width:19px;height:17px;background:#404040;"><svg style="left:6px;top:6px;" width="8" height="8" viewBox="0 0 8 8"><path d="M0 .5h7M0 3.500h7M0 6.500h7" stroke="#8e8e8e" stroke-width="1" fill="none"/></svg>
</div>
<div style="left:1139px;top:420px;width:55px;height:19px;background:#505050;"></div>
<div style="left:1195px;top:420px;width:61px;height:13px;background:#4c4c4c;"></div>
<div style="left:1257px;top:420px;width:84px;height:13px;background:#4c4c4c;"></div>
<div style="left:1120px;top:434px;width:245px;height:5px;background:#505050;"></div>
<svg style="left:1139px;top:420px;" width="30" height="19" viewBox="0 0 30 19"><path d="M7.500 6.500l6.500-3.500l6.500 3.500l-6.500 3.500zM7.500 9.500l6.500 3.500l6.500-3.500M7.500 12.500l6.500 3.500l6.500-3.500" stroke="#b4b4b4" stroke-width="1.100" fill="none" stroke-linejoin="round"/></svg>
<span style="left:1167.5px;top:424.8px;font-size:11.5px;color:#d0d0d0;transform:scaleX(0.817);transform-origin:0 0;">Layer</span>
<svg style="left:1195px;top:420px;overflow:hidden;height:13px" width="150" height="13" viewBox="0 0 150 13"><path d="M20 5.500h-10a3.500 3.500 0 0 0 0 7h10M9 2.500l-3 3l3 3" stroke="#747474" stroke-width="1.200" fill="none" stroke-linejoin="round"/><path d="M70.500 6.500h13v8h-13zM70.500 6.500l12-3l1 3" stroke="#747474" stroke-width="1.200" fill="none" stroke-linejoin="round"/><path d="M73 6.500l2-1.500M77 6.500l2-2" stroke="#747474" stroke-width="1.200" fill="none" stroke-linejoin="round"/></svg>
<div style="left:1195px;top:420px;width:61px;height:13px;overflow:hidden;"><span style="left:28.5px;top:4.8px;font-size:11.5px;color:#707070;transform:scaleX(0.866);transform-origin:0 0;">History</span>
</div>
<div style="left:1257px;top:420px;width:84px;height:13px;overflow:hidden;"><span style="left:28.5px;top:4.8px;font-size:11.5px;color:#707070;transform:scaleX(0.859);transform-origin:0 0;">Auto Action</span>
</div>
<div style="left:1120px;top:439px;width:245px;height:23px;background:#505050;"></div>
<div style="left:1121px;top:439.5px;width:39px;height:19px;background:#5a5a5a;border:1px solid #787878;border-radius:2px;"><svg style="left:-1px;top:-1px;" width="39" height="19" viewBox="0 0 39 19"><rect x="5.500" y="4.500" width="13" height="10" rx="2" stroke="#9a9a9a" stroke-width="1.200" fill="#5c5c5c"/><path d="M26.500 7.500l3.500 3.500l3.500-3.500" stroke="#d0d0d0" stroke-width="1.300" fill="none"/></svg>
</div>
<div style="left:1163px;top:439.5px;width:79px;height:19px;background:#585858;border-radius:2px;"><svg style="left:0px;top:0px;" width="79" height="19" viewBox="0 0 79 19"><path d="M66.500 7.500l3.500 3.500l3.500-3.500" stroke="#b0b0b0" stroke-width="1.300" fill="none"/></svg>
</div>
<span style="left:1180.0px;top:442.8px;font-size:12px;color:#8e8e8e;transform:scaleX(0.828);transform-origin:0 0;">Normal</span>
<div style="left:1248px;top:444px;width:79px;height:9px;background:#4a4a4a;border:1px solid #7a7a7a;"></div>
<div style="left:1120px;top:461px;width:245px;height:21px;background:#505050;"></div>
<div style="left:1255px;top:460.5px;width:36px;height:19.5px;background:#585858;border-radius:2px;"></div>
<div style="left:1292.5px;top:460.5px;width:35px;height:19.5px;background:#585858;border-radius:2px;"></div>
<div style="left:1329px;top:460.5px;width:36px;height:19.5px;background:#5c5c5c;border:1px solid #7a7a7a;border-radius:2px;"></div>
<div style="left:1120px;top:482px;width:245px;height:24px;background:#505050;"></div>
<div style="left:1120.5px;top:483px;width:19px;height:20px;background:#5f6b8c;border-radius:2px;"><svg style="left:0px;top:0px;" width="19" height="20" viewBox="0 0 19 20"><rect x="3.500" y="4.500" width="12" height="11" rx="1.500" stroke="#dfe4f5" fill="none"/><path d="M3.500 8.500h12M3.500 11.500h12M5.500 6.500h2M5.500 10h2M5.500 13.500h2" stroke="#dfe4f5"/></svg>
</div>
<svg style="left:0;top:0" width="1365" height="510" viewBox="0 0 1365 510"><rect x="1161.500" y="465.500" width="9" height="9" rx="1" stroke="#c0c0c0" stroke-width="1.100" fill="none" stroke-linejoin="round" stroke-dasharray="2 1.300"/><rect x="1159.500" y="468.500" width="8" height="8" rx="1" fill="#8a8a8a" stroke="#c0c0c0"/><path d="M1183 477l1.500-9h2l1.500 9zM1183.500 466h4l-2-2.500z" fill="#c0c0c0"/><path d="M1178.500 464.500l4 2.500l-4 2M1192.500 464.500l-4 2.500l4 2" stroke="#c0c0c0" stroke-width="1.100" fill="none" stroke-linejoin="round"/><path d="M1199.500 464v10l2.500-1.500l2 4l1.500-.800l-2-4h3z" stroke="#c0c0c0" stroke-width="1.100" fill="none" stroke-linejoin="round"/><path d="M1206 470c3-1 5 2 3.500 4.500M1210.500 474l-1.500 2.500l-2.500-1.500" stroke="#c0c0c0" stroke-width="1.100" fill="none" stroke-linejoin="round"/><rect x="1218.500" y="469" width="11" height="8" rx="1" fill="#c0c0c0"/><path d="M1220.500 469v-2.500a3.500 3.500 0 0 1 7 0v2.500" stroke="#c0c0c0" stroke-width="1.400" fill="none"/><rect x="1236.500" y="470" width="8" height="7" rx="1" fill="#c0c0c0"/><path d="M1238 470v-2a2.500 2.500 0 0 1 5 0v2" stroke="#c0c0c0" stroke-width="1.200" fill="none"/><g fill="#c0c0c0"><rect x="1245" y="464" width="3" height="3"/><rect x="1248" y="467" width="3" height="3"/><rect x="1245" y="470" width="3" height="3"/><rect x="1248" y="473" width="3" height="3"/></g><rect x="1260.500" y="464.500" width="12" height="11" rx="3" stroke="#6e6e6e" stroke-width="1.300" fill="#6e6e6e"/><circle cx="1266.500" cy="469.500" r="3" fill="#585858"/><path d="M1268.500 472.500l6 6M1274.500 472.500l-6 6" stroke="#6e6e6e" stroke-width="1.400"/><path d="M1280 467.500l3.500 3.500l3.500-3.500" stroke="#9a9a9a" stroke-width="1.200" fill="none"/><path d="M1297 476.500v-11.500h11.500z" fill="#6e6e6e"/><path d="M1305 472.500l6 6M1311 472.500l-6 6" stroke="#6e6e6e" stroke-width="1.400"/><path d="M1317 467.500l3.500 3.500l3.500-3.500" stroke="#9a9a9a" stroke-width="1.200" fill="none"/><rect x="1338.500" y="467.500" width="9" height="9" fill="#fff" stroke="#ddd"/><rect x="1333.500" y="463.500" width="9" height="9" fill="#2f7fe8" stroke="#ddd"/><path d="M1353.500 468l3.500 3.500l3.500-3.500" stroke="#d0d0d0" stroke-width="1.200" fill="none"/><path d="M1209.500 497.500v-11h10a1.500 1.500 0 0 1 1.500 1.500v6M1209.500 497.500h7" stroke="#c0c0c0" stroke-width="1.100" fill="none" stroke-linejoin="round" stroke-width="1.300"/><circle cx="1220.5" cy="498" r="3.800" fill="#505050" stroke="#c0c0c0" stroke-width="1"/><path d="M1218.0 498h5M1220.5 495.5v5" stroke="#c0c0c0" stroke-width="1.100"/><path d="M1229.500 497.500v-11h10a1.500 1.500 0 0 1 1.500 1.500v6M1229.500 497.500h7" stroke="#c0c0c0" stroke-width="1.100" fill="none" stroke-linejoin="round" stroke-width="1.300"/><circle cx="1235" cy="491.500" r="3" stroke="#c0c0c0" stroke-width="1.100" fill="none" stroke-linejoin="round"/><path d="M1232.500 490.500l2.500 1.500l2.500-1.500M1235 492v2.500" stroke="#c0c0c0" stroke-width="1.100" fill="none" stroke-linejoin="round" stroke-width=".800"/><circle cx="1240.5" cy="498" r="3.800" fill="#505050" stroke="#c0c0c0" stroke-width="1"/><path d="M1238.0 498h5M1240.5 495.5v5" stroke="#c0c0c0" stroke-width="1.100"/><path d="M1247.500 497.500v-11.500h5l1.500 2h7v9.500z" fill="#c0c0c0"/><circle cx="1260.5" cy="498" r="3.800" fill="#505050" stroke="#c0c0c0" stroke-width="1"/><path d="M1258.0 498h5M1260.5 495.5v5" stroke="#c0c0c0" stroke-width="1.100"/><rect x="1272.500" y="486.500" width="8" height="8" stroke="#6a6a6a" stroke-width="1.100" fill="none" stroke-linejoin="round"/><rect x="1268.500" y="490.500" width="8" height="8" fill="#505050" stroke="#6a6a6a" stroke-width="1.100"  stroke-linejoin="round"/><path d="M1274.500 492l-2.500 2.500l2.500 2.500M1272 494.500h4" stroke="#6a6a6a" stroke-width="1.100" fill="none" stroke-linejoin="round"/><rect x="1292.500" y="486.500" width="8" height="8" stroke="#6a6a6a" stroke-width="1.100" fill="none" stroke-linejoin="round"/><rect x="1288.500" y="490.500" width="8" height="8" fill="#505050" stroke="#6a6a6a" stroke-width="1.100"  stroke-linejoin="round"/><path d="M1291 494l2.500 2.500l2.500-2.500" stroke="#6a6a6a" stroke-width="1.100" fill="none" stroke-linejoin="round"/><rect x="1308.500" y="486.500" width="13" height="12" rx="1.500" fill="#c0c0c0"/><circle cx="1315" cy="492.500" r="3.500" fill="#333"/><rect x="1328.500" y="488.500" width="13" height="10" rx="1.500" stroke="#6a6a6a" stroke-width="1.100" fill="none" stroke-linejoin="round"/><circle cx="1337" cy="493.500" r="2.500" fill="#6a6a6a"/><path d="M1331 491.500v4M1329 493.500h4" stroke="#6a6a6a" stroke-width="1.100" fill="none" stroke-linejoin="round"/><path d="M1348.500 488.500h11M1350 488.500l.700 10.500h8l.700-10.500M1352 486.500h4.500M1352.500 490.500v7M1355.500 490.500v7" stroke="#c0c0c0" stroke-width="1.100" fill="none" stroke-linejoin="round"/></svg>
<div style="left:1120px;top:506px;width:232px;height:232px;background:#3e3e3e;"></div>
<div style="left:1120px;top:506px;width:232px;height:1px;background:#2e2e2e;"></div>
<div style="left:1140px;top:506px;width:1px;height:261px;background:#2e2e2e;"></div>
<div style="left:1158.5px;top:506px;width:1px;height:261px;background:#2e2e2e;"></div>
<div style="left:1173px;top:511px;width:179px;height:1px;background:#2e2e2e;"></div>
<svg style="left:1122.5px;top:524.5px;" width="16" height="10" viewBox="0 0 16 10"><path d="M.5 5c3-5.500 12-5.500 15 0c-3 5.500-12 5.500-15 0z" fill="#c8c8c8"/><circle cx="8" cy="5" r="3.200" fill="#404040"/><circle cx="8" cy="5" r="1.600" fill="#c8c8c8"/><path d="M.5 5c3-5.500 12-5.500 15 0" stroke="#c8c8c8" stroke-width="1.200" fill="none"/></svg>
<div style="left:1144.0px;top:526.0px;width:11px;height:11px;border:1.500px solid #333;border-radius:2.500px;"></div>
<svg style="left:1181px;top:515.0px;overflow:hidden" width="26" height="33" viewBox="0 0 26 33"><rect width="26" height="33" fill="#fff"/><rect x="0.0" y="5.2" width="5.2" height="5.2" fill="#d0d0d0"/><rect x="0.0" y="15.6" width="5.2" height="5.2" fill="#d0d0d0"/><rect x="0.0" y="26.0" width="5.2" height="5.2" fill="#d0d0d0"/><rect x="5.2" y="0.0" width="5.2" height="5.2" fill="#d0d0d0"/><rect x="5.2" y="10.4" width="5.2" height="5.2" fill="#d0d0d0"/><rect x="5.2" y="20.8" width="5.2" height="5.2" fill="#d0d0d0"/><rect x="5.2" y="31.2" width="5.2" height="5.2" fill="#d0d0d0"/><rect x="10.4" y="5.2" width="5.2" height="5.2" fill="#d0d0d0"/><rect x="10.4" y="15.6" width="5.2" height="5.2" fill="#d0d0d0"/><rect x="10.4" y="26.0" width="5.2" height="5.2" fill="#d0d0d0"/><rect x="15.6" y="0.0" width="5.2" height="5.2" fill="#d0d0d0"/><rect x="15.6" y="10.4" width="5.2" height="5.2" fill="#d0d0d0"/><rect x="15.6" y="20.8" width="5.2" height="5.2" fill="#d0d0d0"/><rect x="15.6" y="31.2" width="5.2" height="5.2" fill="#d0d0d0"/><rect x="20.8" y="5.2" width="5.2" height="5.2" fill="#d0d0d0"/><rect x="20.8" y="15.6" width="5.2" height="5.2" fill="#d0d0d0"/><rect x="20.8" y="26.0" width="5.2" height="5.2" fill="#d0d0d0"/><rect x=".5" y=".5" width="25" height="32" fill="none" stroke="#222"/></svg>
<div style="left:1219.5px;top:515.5px;width:17.5px;height:17.5px;background:#fff;border:1px solid #222;border-radius:2px;"><svg style="left:-1px;top:-1px;" width="17.5" height="17.5" viewBox="0 0 17.5 17.5"><rect x="2.500" y="2.500" width="12.500" height="12.500" rx="2" stroke="#333" fill="none"/><path d="M8.700 4.500l3.800 2v4.500l-3.800 2l-3.800-2v-4.500zM4.900 6.500l3.800 2l3.800-2M8.700 8.500v4.500" stroke="#333" stroke-width=".900" fill="none"/></svg>
</div>
<span style="left:1241.5px;top:517.3px;font-size:12px;color:#e6e6e6;transform:scaleX(0.822);transform-origin:0 0;">100 % Normal</span>
<span style="left:1215.0px;top:536.5px;font-size:12px;color:#e6e6e6;transform:scaleX(0.852);transform-origin:0 0;">Hair Outline</span>
<div style="left:1120px;top:552px;width:232px;height:1px;background:#2e2e2e;"></div>
<div style="left:1159px;top:583px;width:193px;height:1px;background:#2e2e2e;"></div>
<svg style="left:1122.5px;top:561.0px;" width="16" height="10" viewBox="0 0 16 10"><path d="M.5 5c3-5.500 12-5.500 15 0c-3 5.500-12 5.500-15 0z" fill="#c8c8c8"/><circle cx="8" cy="5" r="3.200" fill="#404040"/><circle cx="8" cy="5" r="1.600" fill="#c8c8c8"/><path d="M.5 5c3-5.500 12-5.500 15 0" stroke="#c8c8c8" stroke-width="1.200" fill="none"/></svg>
<div style="left:1144.0px;top:562.5px;width:11px;height:11px;border:1.500px solid #333;border-radius:2.500px;"></div>
<svg style="left:1160px;top:564.0px;" width="12" height="10" viewBox="0 0 12 10"><path d="M2 2.500l3.500 4l3.500-4" stroke="#d0d0d0" stroke-width="1.300" fill="none"/></svg>
<svg style="left:1176.5px;top:561.0px;" width="18" height="14" viewBox="0 0 18 14"><path d="M1 12.500v-10.500h5.500l1.500 2h7v2" stroke="#c8c8c8" stroke-width="1.200" fill="none" stroke-linejoin="round"/><path d="M1 12.500l3-6.500h13.500l-3 6.500z" fill="#c8c8c8" stroke="#c8c8c8" stroke-linejoin="round"/></svg>
<span style="left:1203.5px;top:556.3px;font-size:12px;color:#e6e6e6;transform:scaleX(0.822);transform-origin:0 0;">100 % Normal</span>
<span style="left:1203.5px;top:569.3px;font-size:12px;color:#e6e6e6;transform:scaleX(0.887);transform-origin:0 0;">Hatching</span>
<div style="left:1173px;top:584px;width:179px;height:1px;background:#2e2e2e;"></div>
<svg style="left:1122.5px;top:597.0px;" width="16" height="10" viewBox="0 0 16 10"><path d="M.5 5c3-5.500 12-5.500 15 0c-3 5.500-12 5.500-15 0z" fill="#c8c8c8"/><circle cx="8" cy="5" r="3.200" fill="#404040"/><circle cx="8" cy="5" r="1.600" fill="#c8c8c8"/><path d="M.5 5c3-5.500 12-5.500 15 0" stroke="#c8c8c8" stroke-width="1.200" fill="none"/></svg>
<div style="left:1144.0px;top:598.5px;width:11px;height:11px;border:1.500px solid #333;border-radius:2.500px;"></div>
<svg style="left:1181px;top:587.5px;overflow:hidden" width="26" height="33" viewBox="0 0 26 33"><rect width="26" height="33" fill="#fff"/><rect x="0.0" y="5.2" width="5.2" height="5.2" fill="#d0d0d0"/><rect x="0.0" y="15.6" width="5.2" height="5.2" fill="#d0d0d0"/><rect x="0.0" y="26.0" width="5.2" height="5.2" fill="#d0d0d0"/><rect x="5.2" y="0.0" width="5.2" height="5.2" fill="#d0d0d0"/><rect x="5.2" y="10.4" width="5.2" height="5.2" fill="#d0d0d0"/><rect x="5.2" y="20.8" width="5.2" height="5.2" fill="#d0d0d0"/><rect x="5.2" y="31.2" width="5.2" height="5.2" fill="#d0d0d0"/><rect x="10.4" y="5.2" width="5.2" height="5.2" fill="#d0d0d0"/><rect x="10.4" y="15.6" width="5.2" height="5.2" fill="#d0d0d0"/><rect x="10.4" y="26.0" width="5.2" height="5.2" fill="#d0d0d0"/><rect x="15.6" y="0.0" width="5.2" height="5.2" fill="#d0d0d0"/><rect x="15.6" y="10.4" width="5.2" height="5.2" fill="#d0d0d0"/><rect x="15.6" y="20.8" width="5.2" height="5.2" fill="#d0d0d0"/><rect x="15.6" y="31.2" width="5.2" height="5.2" fill="#d0d0d0"/><rect x="20.8" y="5.2" width="5.2" height="5.2" fill="#d0d0d0"/><rect x="20.8" y="15.6" width="5.2" height="5.2" fill="#d0d0d0"/><rect x="20.8" y="26.0" width="5.2" height="5.2" fill="#d0d0d0"/><rect x=".5" y=".5" width="25" height="32" fill="none" stroke="#222"/></svg>
<span style="left:1215.5px;top:589.3px;font-size:12px;color:#e6e6e6;transform:scaleX(0.822);transform-origin:0 0;">100 % Normal</span>
<span style="left:1215.0px;top:608.8px;font-size:12px;color:#e6e6e6;transform:scaleX(0.866);transform-origin:0 0;">Hatching Cyberarm</span>
<div style="left:1120px;top:624px;width:232px;height:1px;background:#2e2e2e;"></div>
<div style="left:1159px;top:655px;width:193px;height:1px;background:#2e2e2e;"></div>
<svg style="left:1122.5px;top:633.0px;" width="16" height="10" viewBox="0 0 16 10"><path d="M.5 5c3-5.500 12-5.500 15 0c-3 5.500-12 5.500-15 0z" fill="#c8c8c8"/><circle cx="8" cy="5" r="3.200" fill="#404040"/><circle cx="8" cy="5" r="1.600" fill="#c8c8c8"/><path d="M.5 5c3-5.500 12-5.500 15 0" stroke="#c8c8c8" stroke-width="1.200" fill="none"/></svg>
<div style="left:1144.0px;top:634.5px;width:11px;height:11px;border:1.500px solid #333;border-radius:2.500px;"></div>
<svg style="left:1160px;top:636.0px;" width="12" height="10" viewBox="0 0 12 10"><path d="M2 2.500l3.500 4l3.500-4" stroke="#d0d0d0" stroke-width="1.300" fill="none"/></svg>
<svg style="left:1176.5px;top:633.0px;" width="18" height="14" viewBox="0 0 18 14"><path d="M1 12.500v-10.500h5.500l1.500 2h7v2" stroke="#c8c8c8" stroke-width="1.200" fill="none" stroke-linejoin="round"/><path d="M1 12.500l3-6.500h13.500l-3 6.500z" fill="#c8c8c8" stroke="#c8c8c8" stroke-linejoin="round"/></svg>
<span style="left:1203.5px;top:628.3px;font-size:12px;color:#e6e6e6;transform:scaleX(0.822);transform-origin:0 0;">100 % Normal</span>
<span style="left:1203.5px;top:641.3px;font-size:12px;color:#e6e6e6;transform:scaleX(0.862);transform-origin:0 0;">Color Shade</span>
<div style="left:1173px;top:656px;width:179px;height:1px;background:#2e2e2e;"></div>
<div style="left:1124.5px;top:670.75px;width:11px;height:11px;border:1.500px solid #333;border-radius:2.500px;"></div>
<div style="left:1144.0px;top:670.75px;width:11px;height:11px;border:1.500px solid #333;border-radius:2.500px;"></div>
<svg style="left:1181px;top:659.75px;overflow:hidden" width="26" height="33" viewBox="0 0 26 33"><rect width="26" height="33" fill="#fff"/><rect x="0.0" y="5.2" width="5.2" height="5.2" fill="#d0d0d0"/><rect x="0.0" y="15.6" width="5.2" height="5.2" fill="#d0d0d0"/><rect x="0.0" y="26.0" width="5.2" height="5.2" fill="#d0d0d0"/><rect x="5.2" y="0.0" width="5.2" height="5.2" fill="#d0d0d0"/><rect x="5.2" y="10.4" width="5.2" height="5.2" fill="#d0d0d0"/><rect x="5.2" y="20.8" width="5.2" height="5.2" fill="#d0d0d0"/><rect x="5.2" y="31.2" width="5.2" height="5.2" fill="#d0d0d0"/><rect x="10.4" y="5.2" width="5.2" height="5.2" fill="#d0d0d0"/><rect x="10.4" y="15.6" width="5.2" height="5.2" fill="#d0d0d0"/><rect x="10.4" y="26.0" width="5.2" height="5.2" fill="#d0d0d0"/><rect x="15.6" y="0.0" width="5.2" height="5.2" fill="#d0d0d0"/><rect x="15.6" y="10.4" width="5.2" height="5.2" fill="#d0d0d0"/><rect x="15.6" y="20.8" width="5.2" height="5.2" fill="#d0d0d0"/><rect x="15.6" y="31.2" width="5.2" height="5.2" fill="#d0d0d0"/><rect x="20.8" y="5.2" width="5.2" height="5.2" fill="#d0d0d0"/><rect x="20.8" y="15.6" width="5.2" height="5.2" fill="#d0d0d0"/><rect x="20.8" y="26.0" width="5.2" height="5.2" fill="#d0d0d0"/><rect x=".5" y=".5" width="25" height="32" fill="none" stroke="#222"/></svg>
<span style="left:1215.5px;top:661.3px;font-size:12px;color:#e6e6e6;transform:scaleX(0.822);transform-origin:0 0;">100 % Normal</span>
<span style="left:1215.0px;top:680.8px;font-size:12px;color:#e6e6e6;transform:scaleX(0.877);transform-origin:0 0;">Color Shade Body Area</span>
<div style="left:1159px;top:696.5px;width:193px;height:41.0px;background:#5f6b8c;"></div>
<div style="left:1173px;top:695.5px;width:179px;height:1px;background:#2e2e2e;"></div>
<div style="left:1124.5px;top:711.5px;width:11px;height:11px;border:1.500px solid #333;border-radius:2.500px;"></div>
<svg style="left:1139.5px;top:704.5px;" width="17" height="24" viewBox="0 0 17 24"><path d="M3 17l1.300-4.300l8-8.500l3 2.800l-8 8.700z" fill="#d0d0d0"/><path d="M2 19h13" stroke="#d0d0d0" stroke-width="1.100"/></svg>
<div style="left:1179px;top:698.2px;width:30.3px;height:37.4px;border:1px solid #e8e8e8;"></div>
<svg style="left:1181px;top:700.5px;overflow:hidden" width="26" height="33" viewBox="0 0 26 33"><rect width="26" height="33" fill="#fff"/><rect x="0.0" y="5.2" width="5.2" height="5.2" fill="#d0d0d0"/><rect x="0.0" y="15.6" width="5.2" height="5.2" fill="#d0d0d0"/><rect x="0.0" y="26.0" width="5.2" height="5.2" fill="#d0d0d0"/><rect x="5.2" y="0.0" width="5.2" height="5.2" fill="#d0d0d0"/><rect x="5.2" y="10.4" width="5.2" height="5.2" fill="#d0d0d0"/><rect x="5.2" y="20.8" width="5.2" height="5.2" fill="#d0d0d0"/><rect x="5.2" y="31.2" width="5.2" height="5.2" fill="#d0d0d0"/><rect x="10.4" y="5.2" width="5.2" height="5.2" fill="#d0d0d0"/><rect x="10.4" y="15.6" width="5.2" height="5.2" fill="#d0d0d0"/><rect x="10.4" y="26.0" width="5.2" height="5.2" fill="#d0d0d0"/><rect x="15.6" y="0.0" width="5.2" height="5.2" fill="#d0d0d0"/><rect x="15.6" y="10.4" width="5.2" height="5.2" fill="#d0d0d0"/><rect x="15.6" y="20.8" width="5.2" height="5.2" fill="#d0d0d0"/><rect x="15.6" y="31.2" width="5.2" height="5.2" fill="#d0d0d0"/><rect x="20.8" y="5.2" width="5.2" height="5.2" fill="#d0d0d0"/><rect x="20.8" y="15.6" width="5.2" height="5.2" fill="#d0d0d0"/><rect x="20.8" y="26.0" width="5.2" height="5.2" fill="#d0d0d0"/><rect x=".5" y=".5" width="25" height="32" fill="none" stroke="#222"/></svg>
<span style="left:1215.5px;top:701.8px;font-size:12px;color:#e6e6e6;transform:scaleX(0.822);transform-origin:0 0;">100 % Normal</span>
<span style="left:1215.0px;top:721.3px;font-size:12px;color:#e6e6e6;transform:scaleX(0.882);transform-origin:0 0;">Color Shade Face Area</span>
<div style="left:1173px;top:737px;width:179px;height:1px;background:#2e2e2e;"></div>
<div style="left:1181px;top:507px;width:26px;height:2px;background:#2a2a2a;"></div>
<div style="left:1120px;top:738px;width:232px;height:5px;background:#4a4a4a;"></div>
<svg style="left:1230px;top:738px;" width="30" height="5" viewBox="0 0 30 5"><path d="M1 2.500h18" stroke="#aaa" stroke-width="1" stroke-dasharray="1.500 2.500"/></svg>
<div style="left:1120px;top:743px;width:232px;height:24px;background:#3e3e3e;"></div>
<div style="left:1140px;top:743px;width:1px;height:24px;background:#2e2e2e;"></div>
<div style="left:1158.5px;top:743px;width:1px;height:24px;background:#2e2e2e;"></div>
<div style="left:1124.5px;top:751.5px;width:11px;height:11px;border:1.500px solid #333;border-radius:2.500px;"></div>
<div style="left:1144.0px;top:751.5px;width:11px;height:11px;border:1.500px solid #333;border-radius:2.500px;"></div>
<svg style="left:1161px;top:751px;" width="12" height="12" viewBox="0 0 12 12"><path d="M4 2l4 4l-4 4" stroke="#d0d0d0" stroke-width="1.300" fill="none"/></svg>
<svg style="left:1176.5px;top:750px;" width="18" height="14" viewBox="0 0 18 14"><path d="M1 12.500v-11h4.500l1.500 2h6.500v9z" fill="#c8c8c8" stroke="#c8c8c8" stroke-width="1.200" stroke-linejoin="round"/></svg>
<span style="left:1203.5px;top:747.3px;font-size:12px;color:#e6e6e6;transform:scaleX(0.822);transform-origin:0 0;">100 % Normal</span>
<div style="left:1200px;top:758px;width:152px;height:9px;overflow:hidden;"><span style="left:3.5px;top:2.3px;font-size:12px;color:#e6e6e6;transform:scaleX(0.882);transform-origin:0 0;">Energy Blast</span>
</div>
<div style="left:1352px;top:506px;width:13px;height:261px;background:#404040;"></div>
<div style="left:1353px;top:507px;width:11px;height:11px;background:#505050;border-radius:2px;"><svg style="left:0px;top:0px;" width="11" height="11" viewBox="0 0 11 11"><path d="M2.5 7l3-3l3 3" stroke="#c8c8c8" stroke-width="1.2" fill="none"/></svg>
</div>
<div style="left:1353px;top:726px;width:11px;height:11px;background:#505050;border-radius:2px;"><svg style="left:0px;top:0px;" width="11" height="11" viewBox="0 0 11 11"><path d="M2.5 4l3 3l3-3" stroke="#c8c8c8" stroke-width="1.2" fill="none"/></svg>
</div>
<div style="left:1353.5px;top:582px;width:10px;height:74px;background:#505050;border-radius:5px;"></div>
<div style="left:1353px;top:744px;width:11px;height:11px;background:#505050;border-radius:2px;"><svg style="left:0px;top:0px;" width="11" height="11" viewBox="0 0 11 11"><path d="M2.5 7l3-3l3 3" stroke="#c8c8c8" stroke-width="1.2" fill="none"/></svg>
</div>
<div style="left:1353px;top:756px;width:11px;height:11px;background:#505050;border-radius:2px;"><svg style="left:0px;top:0px;" width="11" height="11" viewBox="0 0 11 11"><path d="M2.5 4l3 3l3-3" stroke="#c8c8c8" stroke-width="1.2" fill="none"/></svg>
</div>
</div>
</body></html>
